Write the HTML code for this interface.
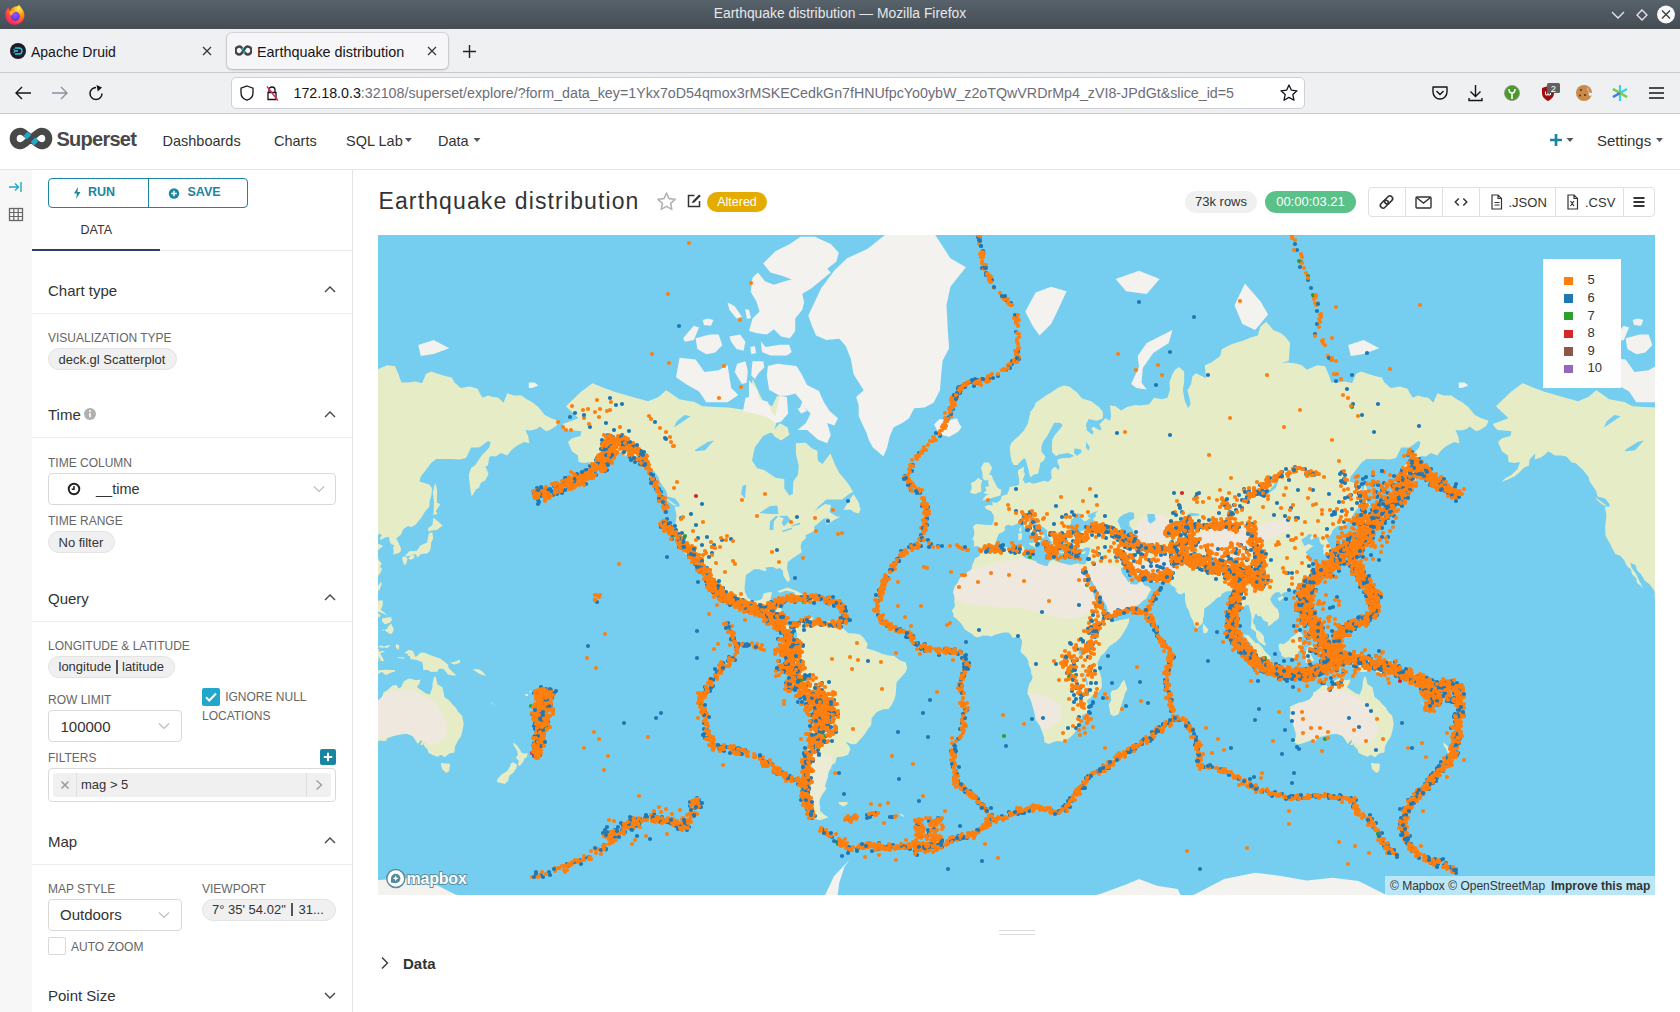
<!DOCTYPE html>
<html><head><meta charset="utf-8">
<style>
*{box-sizing:border-box;margin:0;padding:0}
html,body{width:1680px;height:1012px;overflow:hidden;background:#fff;font-family:"Liberation Sans",sans-serif;color:#333}
.a{position:absolute}
.t{position:absolute;line-height:1;white-space:nowrap}
svg{display:block}
</style></head><body>

<div class="a" style="left:0px;top:0px;width:1680px;height:29px;background:linear-gradient(#57626b,#454c54)"></div>
<div class="t" style="left:840.0px;width:0;top:6.9px;font-size:13.85px;color:#e6e8ea;"><span style="position:absolute;transform:translateX(-50%)">Earthquake distribution — Mozilla Firefox</span></div>
<svg class="a" style="left:3px;top:3px" width="23" height="23" viewBox="0 0 23 23"><defs><radialGradient id="ffg" cx="0.7" cy="0.2" r="0.95"><stop offset="0" stop-color="#fff44f"/><stop offset="0.35" stop-color="#ff980e"/><stop offset="0.75" stop-color="#ff3750"/><stop offset="1" stop-color="#e31587"/></radialGradient><radialGradient id="ffp" cx="0.5" cy="0.35" r="0.7"><stop offset="0" stop-color="#9059ff"/><stop offset="1" stop-color="#5b2cd6"/></radialGradient></defs><path d="M16 1.5c1.2 1.8 2.3 3 3.4 4.8A9.6 9.6 0 112.6 9.5C3.3 7 4.4 5.6 5.6 4.6c0 1.6.6 2.7 1.3 3.3C8.2 5.4 10.6 3.6 13.5 3.3 14.6 3.2 15.6 2.6 16 1.5z" fill="url(#ffg)"/><circle cx="12.3" cy="13.3" r="4.6" fill="url(#ffp)"/><path d="M6.5 9.5c1.5-1.5 4.5-2 6.2-.6-2.2.3-3.5 1.8-3.7 3.6-1.4-.5-2.3-1.6-2.5-3z" fill="#ffb03a"/></svg>
<svg class="a" style="left:1606px;top:4px" width="72" height="22" viewBox="0 0 72 22"><path d="M6 8l6 6 6-6" fill="none" stroke="#e8eaec" stroke-width="1.3"/><path d="M36 6l5 5-5 5-5-5z" fill="none" stroke="#e8eaec" stroke-width="1.3"/><circle cx="60" cy="10.5" r="9" fill="#fafafa"/><path d="M56 6.5l8 8M64 6.5l-8 8" stroke="#3a3f45" stroke-width="1.4"/></svg>
<div class="a" style="left:0px;top:29px;width:1680px;height:43px;background:#eff0f1"></div>
<div class="a" style="left:0px;top:72px;width:1680px;height:1px;background:#c9c9ce"></div>
<svg class="a" style="left:10px;top:43px" width="16" height="16" viewBox="0 0 16 16"><circle cx="8" cy="8" r="8" fill="#1c1c2a"/><path d="M5 5h4a3 3 0 010 6H5M4 8h4M3.5 6.5h1M3.5 9.5h1" fill="none" stroke="#2ccbe0" stroke-width="1.3"/></svg>
<div class="t" style="left:31.0px;top:45.1px;font-size:14px;color:#15141a;">Apache Druid</div>
<svg class="a" style="left:201px;top:45px" width="12" height="12" viewBox="0 0 12 12"><path d="M2 2l8 8M10 2l-8 8" stroke="#333" stroke-width="1.2"/></svg>
<div class="a" style="left:227px;top:33px;width:221px;height:36px;background:#f6f6f8;border-radius:5px;box-shadow:0 0 0 1px rgba(0,0,0,.09),0 1px 3px rgba(0,0,0,.18)"></div>
<svg class="a" style="left:235px;top:45px" width="17" height="11" viewBox="0 0 17 11"><path d="M4.5 1.5a4 4 0 100 8c2 0 3-2 4-4s2-4 4-4a4 4 0 110 8c-2 0-3-2-4-4s-2-4-4-4z" fill="none" stroke="#444" stroke-width="2.6"/><path d="M6.8 3.2l1.5 1.6M8.7 6.2l1.5 1.6" stroke="#20a7c9" stroke-width="2.2"/></svg>
<div class="t" style="left:257.0px;top:44.8px;font-size:14.4px;color:#15141a;">Earthquake distribution</div>
<svg class="a" style="left:426px;top:45px" width="12" height="12" viewBox="0 0 12 12"><path d="M2 2l8 8M10 2l-8 8" stroke="#333" stroke-width="1.2"/></svg>
<svg class="a" style="left:462px;top:44px" width="15" height="15" viewBox="0 0 15 15"><path d="M7.5 1v13M1 7.5h13" stroke="#222" stroke-width="1.4"/></svg>
<div class="a" style="left:0px;top:73px;width:1680px;height:40px;background:#eff0f1"></div>
<div class="a" style="left:0px;top:113px;width:1680px;height:1px;background:#c9c9ce"></div>
<svg class="a" style="left:14px;top:84px" width="100" height="18" viewBox="0 0 100 18"><path d="M2 9h15M8 3L2 9l6 6" fill="none" stroke="#15141a" stroke-width="1.4"/><path d="M38 9h15M47 3l6 6-6 6" fill="none" stroke="#8f8f9d" stroke-width="1.4"/><path d="M82 3.5a6 6 0 106 6" fill="none" stroke="#15141a" stroke-width="1.5"/><path d="M82.5 1l5.5 2.6-4.2 4z" fill="#15141a"/></svg>
<div class="a" style="left:231px;top:77px;width:1074px;height:32px;background:#fff;border:1px solid #cfcfd6;border-radius:5px"></div>
<svg class="a" style="left:239px;top:84px" width="50" height="18" viewBox="0 0 50 18"><path d="M8 2l6 2.2v4.5c0 3.8-2.8 6.5-6 7.5-3.2-1-6-3.7-6-7.5V4.2z" fill="none" stroke="#15141a" stroke-width="1.3"/><path d="M30 8.5V6a3 3 0 016 0v2.5M29 8.5h8v7h-8z" fill="none" stroke="#15141a" stroke-width="1.3"/><path d="M28 2.5l11 14" stroke="#e22850" stroke-width="1.4"/></svg>
<div class="t" style="left:293.5px;top:85.9px;font-size:14.26px;color:#15141a;">172.18.0.3<span style="color:#6d6d78">:32108/superset/explore/?form_data_key=1Ykx7oD54qmox3rMSKECedkGn7fHNUfpcYo0ybW_z2oTQwVRDrMp4_zVI8-JPdGt&amp;slice_id=5</span></div>
<svg class="a" style="left:1279px;top:83px" width="20" height="20" viewBox="0 0 20 20"><path d="M10 2l2.4 5.2 5.6.6-4.2 3.8 1.2 5.6L10 14.4l-5 2.8 1.2-5.6L2 7.8l5.6-.6z" fill="none" stroke="#15141a" stroke-width="1.3" stroke-linejoin="round"/></svg>
<svg class="a" style="left:1430px;top:83px" width="240" height="20" viewBox="0 0 240 20"><path d="M3 4h14v5a7 7 0 01-14 0z" fill="none" stroke="#15141a" stroke-width="1.4" stroke-linejoin="round"/><path d="M6.5 8l3.5 3.5L13.5 8" fill="none" stroke="#15141a" stroke-width="1.4"/><path d="M45.5 2v11M40.5 8.5l5 5 5-5M39 15v2.5h13V15" fill="none" stroke="#15141a" stroke-width="1.4"/><circle cx="82" cy="10" r="7.6" fill="#4a9a2a" stroke="#999" stroke-width="0.8"/><path d="M79 6c0 3 1.5 4 3 4s3-1 3-4M82 10v6" stroke="#fff" stroke-width="1.6" fill="none"/><path d="M112 5l6-2 6 2v5c0 4-3 6.5-6 8-3-1.5-6-4-6-8z" fill="#a00d10"/><path d="M115.5 8.5v2.5a1.3 1.3 0 002.5 0 1.3 1.3 0 002.5 0V8.5" fill="none" stroke="#fff" stroke-width="1.1"/><rect x="117" y="0" width="13" height="10" rx="1.5" fill="#616161"/><text x="123.5" y="8.6" font-size="9.5" fill="#fff" text-anchor="middle" font-family="Liberation Sans">2</text><circle cx="154" cy="10" r="8" fill="#c98a4b"/><circle cx="151" cy="7" r="1.1" fill="#5a3414"/><circle cx="155" cy="12" r="1.1" fill="#5a3414"/><circle cx="150" cy="12.5" r="1" fill="#5a3414"/><path d="M158 4a4 4 0 004 6l1 2-4 1z" fill="#eff0f1"/><path d="M190 2v16M183 6l14 8M183 14l14-8" stroke="#3ad0e8" stroke-width="2.2"/><path d="M183 6l14 8" stroke="#7cd13a" stroke-width="2.2"/><path d="M183 14l7-4" stroke="#5a6ef0" stroke-width="2.2"/><path d="M219 5h15M219 10h15M219 15h15" stroke="#15141a" stroke-width="1.5"/></svg>
<div class="a" style="left:0px;top:169px;width:1680px;height:1px;background:#e4e4e4"></div>
<svg class="a" style="left:9px;top:127px" width="44" height="23" viewBox="0 0 44 23"><path d="M11.5 4.2a7.3 7.3 0 100 14.6c3.2 0 5-2.6 10.5-7.3s7.3-7.3 10.5-7.3a7.3 7.3 0 110 14.6c-3.2 0-5-2.6-10.5-7.3S14.7 4.2 11.5 4.2z" fill="none" stroke="#484848" stroke-width="7"/><path d="M16.5 6.8l3.6 3.4M23.9 12.8l3.6 3.4" stroke="#20a7c9" stroke-width="6.2"/></svg>
<div class="t" style="left:56.5px;top:128.9px;font-size:20px;color:#484848;font-weight:bold;letter-spacing:-0.75px;">Superset</div>
<div class="t" style="left:162.5px;top:133.7px;font-size:14.5px;color:#333;">Dashboards</div>
<div class="t" style="left:274.0px;top:133.7px;font-size:14.5px;color:#333;">Charts</div>
<div class="t" style="left:346.0px;top:133.7px;font-size:14.5px;color:#333;">SQL Lab</div>
<div class="t" style="left:438.0px;top:133.7px;font-size:14.5px;color:#333;">Data</div>
<svg class="a" style="left:405px;top:138px" width="80" height="6" viewBox="0 0 80 6"><path d="M0 0h7L3.5 4z" fill="#555"/><path d="M68.5 0h7L72 4z" fill="#555"/></svg>
<svg class="a" style="left:1549px;top:133px" width="30" height="14" viewBox="0 0 30 14"><path d="M7 1v12M1 7h12" stroke="#1a85a0" stroke-width="2.6"/><path d="M17.5 5h7L21 9z" fill="#555"/></svg>
<div class="t" style="left:1597.0px;top:133.3px;font-size:15px;color:#333;">Settings</div>
<svg class="a" style="left:1656px;top:138px" width="8" height="6" viewBox="0 0 8 6"><path d="M0 0h7L3.5 4z" fill="#555"/></svg>
<div class="a" style="left:0px;top:170px;width:32px;height:842px;background:#f7f7f7"></div>
<svg class="a" style="left:8px;top:180px" width="16" height="44" viewBox="0 0 16 44"><path d="M1 7h9M7 3.5l3.5 3.5L7 10.5M13 2v10" fill="none" stroke="#20a7c9" stroke-width="1.4"/><rect x="1.5" y="28.5" width="13" height="12" fill="none" stroke="#666" stroke-width="1.3"/><path d="M1.5 32.5h13M1.5 36.5h13M5.8 28.5v12M10.2 28.5v12" stroke="#666" stroke-width="1.2"/></svg>
<div class="a" style="left:352px;top:170px;width:1px;height:842px;background:#e4e4e4"></div>
<div class="a" style="left:48px;top:178px;width:200px;height:30px;border:1px solid #1a85a0;border-radius:4px"></div>
<div class="a" style="left:148px;top:178px;width:1px;height:30px;background:#1a85a0"></div>
<svg class="a" style="left:72px;top:186px" width="110" height="14" viewBox="0 0 110 14"><path d="M6 1L2 7.5h3L4 13l4.5-7H5.5z" fill="#1a85a0"/><circle cx="102" cy="7.5" r="5.2" fill="#1a85a0"/><path d="M102 4.7v5.6M99.2 7.5h5.6" stroke="#fff" stroke-width="1.5"/></svg>
<div class="t" style="left:88.0px;top:186.4px;font-size:12.5px;color:#1a85a0;font-weight:bold;">RUN</div>
<div class="t" style="left:187.5px;top:186.4px;font-size:12.5px;color:#1a85a0;font-weight:bold;">SAVE</div>
<div class="t" style="left:80.5px;top:223.6px;font-size:12.5px;color:#333;font-weight:500;">DATA</div>
<div class="a" style="left:32px;top:250px;width:320px;height:1px;background:#eaeaea"></div>
<div class="a" style="left:32px;top:249px;width:128px;height:2px;background:#323c6b"></div>
<div class="t" style="left:48.0px;top:282.5px;font-size:15px;color:#333;">Chart type</div><svg class="a" style="left:323px;top:285.2px" width="14" height="9" viewBox="0 0 14 9"><path d="M2 7l5-5 5 5" fill="none" stroke="#444" stroke-width="1.4"/></svg>
<div class="a" style="left:32px;top:313px;width:320px;height:1px;background:#ececec"></div>
<div class="t" style="left:48.0px;top:331.7px;font-size:12px;color:#666;">VISUALIZATION TYPE</div>
<div class="a" style="left:48px;top:348px;width:129px;height:22px;background:#f0f0f0;border:1px solid #e3e3e3;border-radius:11px"></div><div class="t" style="left:58.5px;top:352.6px;font-size:13px;color:#333;">deck.gl Scatterplot</div>
<div class="t" style="left:48.0px;top:407.2px;font-size:15px;color:#333;">Time</div><svg class="a" style="left:323px;top:409.9px" width="14" height="9" viewBox="0 0 14 9"><path d="M2 7l5-5 5 5" fill="none" stroke="#444" stroke-width="1.4"/></svg>
<svg class="a" style="left:84px;top:408px" width="12" height="12" viewBox="0 0 12 12"><circle cx="6" cy="6" r="6" fill="#b0b0b0"/><path d="M6 5v4.2" stroke="#fff" stroke-width="1.6"/><circle cx="6" cy="3" r="1" fill="#fff"/></svg>
<div class="a" style="left:32px;top:437px;width:320px;height:1px;background:#ececec"></div>
<div class="t" style="left:48.0px;top:456.6px;font-size:12px;color:#666;">TIME COLUMN</div>
<div class="a" style="left:48px;top:473px;width:288px;height:32px;border:1px solid #d9d9d9;border-radius:4px;background:#fff"></div>
<svg class="a" style="left:67px;top:482px" width="14" height="14" viewBox="0 0 14 14"><circle cx="7" cy="7" r="5.3" fill="none" stroke="#222" stroke-width="1.9"/><path d="M7 4v3.3h-2.3" fill="none" stroke="#222" stroke-width="1.5"/></svg>
<div class="t" style="left:96.0px;top:482.2px;font-size:14.5px;color:#333;">__time</div>
<svg class="a" style="left:313px;top:485px" width="12" height="8" viewBox="0 0 12 8"><path d="M1 1.5l5 5 5-5" fill="none" stroke="#bbb" stroke-width="1.1"/></svg>
<div class="t" style="left:48.0px;top:514.8px;font-size:12px;color:#666;">TIME RANGE</div>
<div class="a" style="left:48px;top:531px;width:67px;height:22px;background:#f0f0f0;border:1px solid #e3e3e3;border-radius:11px"></div><div class="t" style="left:58.5px;top:535.6px;font-size:13px;color:#333;">No filter</div>
<div class="t" style="left:48.0px;top:590.6px;font-size:15px;color:#333;">Query</div><svg class="a" style="left:323px;top:593.3px" width="14" height="9" viewBox="0 0 14 9"><path d="M2 7l5-5 5 5" fill="none" stroke="#444" stroke-width="1.4"/></svg>
<div class="a" style="left:32px;top:621px;width:320px;height:1px;background:#ececec"></div>
<div class="t" style="left:48.0px;top:640.1px;font-size:12px;color:#666;">LONGITUDE &amp; LATITUDE</div>
<div class="a" style="left:48px;top:656px;width:127px;height:22px;background:#f0f0f0;border:1px solid #e3e3e3;border-radius:11px"></div>
<div class="t" style="left:58.5px;top:660.3px;font-size:13px;color:#333;">longitude</div>
<div class="a" style="left:116px;top:660px;width:2px;height:14px;background:#555"></div>
<div class="t" style="left:122.0px;top:660.3px;font-size:13px;color:#333;">latitude</div>
<div class="t" style="left:48.0px;top:693.6px;font-size:12px;color:#666;">ROW LIMIT</div>
<div class="a" style="left:48px;top:710px;width:134px;height:32px;border:1px solid #d9d9d9;border-radius:4px;background:#fff"></div>
<div class="t" style="left:60.5px;top:718.8px;font-size:15px;color:#333;">100000</div>
<svg class="a" style="left:158px;top:722px" width="12" height="8" viewBox="0 0 12 8"><path d="M1 1.5l5 5 5-5" fill="none" stroke="#bbb" stroke-width="1.1"/></svg>
<div class="a" style="left:202px;top:688px;width:18px;height:18px;background:#20a7c9;border-radius:2px"></div>
<svg class="a" style="left:202px;top:688px" width="18" height="18" viewBox="0 0 18 18"><path d="M4 9.2l3.3 3.3L14 5.5" fill="none" stroke="#fff" stroke-width="2"/></svg>
<div class="t" style="left:225.2px;top:690.8px;font-size:12px;color:#666;">IGNORE NULL</div>
<div class="t" style="left:202.0px;top:709.8px;font-size:12px;color:#666;">LOCATIONS</div>
<div class="t" style="left:48.0px;top:751.7px;font-size:12px;color:#666;">FILTERS</div>
<div class="a" style="left:320px;top:749px;width:16px;height:16px;background:#1a85a0;border-radius:2px"></div>
<svg class="a" style="left:320px;top:749px" width="16" height="16" viewBox="0 0 16 16"><path d="M8 3.8v8.4M3.8 8h8.4" stroke="#fff" stroke-width="2"/></svg>
<div class="a" style="left:48px;top:768px;width:288px;height:34px;border:1px solid #d9d9d9;border-radius:4px;background:#fff"></div>
<div class="a" style="left:53px;top:773px;width:278px;height:24px;background:#f0f0f0;border-radius:3px"></div>
<div class="a" style="left:76px;top:773px;width:1px;height:24px;background:#e0e0e0"></div>
<div class="a" style="left:306px;top:773px;width:1px;height:24px;background:#e0e0e0"></div>
<svg class="a" style="left:60px;top:780px" width="10" height="10" viewBox="0 0 10 10"><path d="M1.5 1.5l7 7M8.5 1.5l-7 7" stroke="#999" stroke-width="1.5"/></svg>
<div class="t" style="left:81.0px;top:778.0px;font-size:13px;color:#333;">mag &gt; 5</div>
<svg class="a" style="left:315px;top:779px" width="8" height="12" viewBox="0 0 8 12"><path d="M1.5 1.5l5 4.5-5 4.5" fill="none" stroke="#999" stroke-width="1.3"/></svg>
<div class="t" style="left:48.0px;top:833.7px;font-size:15px;color:#333;">Map</div><svg class="a" style="left:323px;top:836.4px" width="14" height="9" viewBox="0 0 14 9"><path d="M2 7l5-5 5 5" fill="none" stroke="#444" stroke-width="1.4"/></svg>
<div class="a" style="left:32px;top:864px;width:320px;height:1px;background:#ececec"></div>
<div class="t" style="left:48.0px;top:882.5px;font-size:12px;color:#666;">MAP STYLE</div>
<div class="t" style="left:202.0px;top:882.5px;font-size:12px;color:#666;">VIEWPORT</div>
<div class="a" style="left:48px;top:899px;width:134px;height:32px;border:1px solid #d9d9d9;border-radius:4px;background:#fff"></div>
<div class="t" style="left:60.0px;top:907.3px;font-size:15px;color:#333;">Outdoors</div>
<svg class="a" style="left:158px;top:911px" width="12" height="8" viewBox="0 0 12 8"><path d="M1 1.5l5 5 5-5" fill="none" stroke="#bbb" stroke-width="1.1"/></svg>
<div class="a" style="left:202px;top:899px;width:134px;height:22px;background:#f0f0f0;border:1px solid #e3e3e3;border-radius:11px"></div>
<div class="t" style="left:212.0px;top:903.3px;font-size:13px;color:#333;">7° 35' 54.02" <span style="display:inline-block;width:1.5px;height:13px;background:#555;vertical-align:-2px;margin:0 2px"></span> 31...</div>
<div class="a" style="left:48px;top:937px;width:18px;height:18px;border:1px solid #d9d9d9;border-radius:2px;background:#fff"></div>
<div class="t" style="left:71.0px;top:941.0px;font-size:12px;color:#666;">AUTO ZOOM</div>
<div class="t" style="left:48.0px;top:987.8px;font-size:15px;color:#333;">Point Size</div><svg class="a" style="left:323px;top:990.5px" width="14" height="9" viewBox="0 0 14 9"><path d="M2 2l5 5 5-5" fill="none" stroke="#444" stroke-width="1.4"/></svg>
<div class="t" style="left:378.5px;top:190.3px;font-size:23px;color:#333;letter-spacing:1.12px;">Earthquake distribution</div>
<svg class="a" style="left:656px;top:191px" width="21" height="21" viewBox="0 0 21 21"><path d="M10.5 2l2.6 5.6 6 .7-4.5 4.1 1.2 6-5.3-3-5.3 3 1.2-6-4.5-4.1 6-.7z" fill="none" stroke="#b3b3b3" stroke-width="1.6" stroke-linejoin="round"/></svg>
<svg class="a" style="left:686px;top:193px" width="16" height="16" viewBox="0 0 16 16"><path d="M8.5 2.5H2.5v11h11V8" fill="none" stroke="#333" stroke-width="1.5"/><path d="M13.2 1.5l1.6 1.6-6.5 6.5-2.3.7.7-2.3z" fill="#333"/></svg>
<div class="a" style="left:707px;top:192px;width:60px;height:20px;background:#e5ac00;border-radius:10px"></div>
<div class="t" style="left:737.0px;width:0;top:195.6px;font-size:12.5px;color:#fff;"><span style="position:absolute;transform:translateX(-50%)">Altered</span></div>
<div class="a" style="left:1185px;top:191px;width:72px;height:22px;background:#f0f0f0;border-radius:11px"></div>
<div class="t" style="left:1221.0px;width:0;top:195.3px;font-size:13px;color:#333;"><span style="position:absolute;transform:translateX(-50%)">73k rows</span></div>
<div class="a" style="left:1265px;top:191px;width:91px;height:22px;background:#5ac189;border-radius:11px"></div>
<div class="t" style="left:1310.5px;width:0;top:195.3px;font-size:13px;color:#fff;"><span style="position:absolute;transform:translateX(-50%)">00:00:03.21</span></div>
<div class="a" style="left:1368px;top:187px;width:287px;height:30px;border:1px solid #e0e0e0;border-radius:4px;background:#fff"></div>
<div class="a" style="left:1405px;top:187px;width:1px;height:30px;background:#e0e0e0"></div>
<div class="a" style="left:1442px;top:187px;width:1px;height:30px;background:#e0e0e0"></div>
<div class="a" style="left:1479px;top:187px;width:1px;height:30px;background:#e0e0e0"></div>
<div class="a" style="left:1555px;top:187px;width:1px;height:30px;background:#e0e0e0"></div>
<div class="a" style="left:1623px;top:187px;width:1px;height:30px;background:#e0e0e0"></div>
<svg class="a" style="left:1376px;top:192px" width="275" height="20" viewBox="0 0 275 20"><g transform="rotate(-45 10.5 10)" fill="none" stroke="#333" stroke-width="1.6"><rect x="3" y="7.3" width="9" height="5.4" rx="2.7"/><rect x="9" y="7.3" width="9" height="5.4" rx="2.7"/></g><rect x="40" y="5" width="15" height="11" rx="1" fill="none" stroke="#333" stroke-width="1.4"/><path d="M40.5 5.5l7 5.5 7-5.5" fill="none" stroke="#333" stroke-width="1.4"/><path d="M82.8 6.5l-3.5 3.5 3.5 3.5M87.3 6.5l3.5 3.5-3.5 3.5" fill="none" stroke="#333" stroke-width="1.5"/><path d="M116 3h6l3.5 3.5V17h-9.5z M122 3v3.5h3.5M118.5 10.5h5M118.5 13h5" fill="none" stroke="#333" stroke-width="1.2"/><path d="M192 3h6l3.5 3.5V17h-9.5z M198 3v3.5h3.5M194.5 9l3.5 5M198 9l-3.5 5" fill="none" stroke="#333" stroke-width="1.2"/><path d="M257.5 6h11M257.5 10h11M257.5 14h11" stroke="#333" stroke-width="1.8"/></svg>
<div class="t" style="left:1508.5px;top:196.0px;font-size:13px;color:#333;">.JSON</div>
<div class="t" style="left:1585.0px;top:196.0px;font-size:13px;color:#333;">.CSV</div>
<div class="a" style="left:378px;top:235px;width:1277px;height:660px;overflow:hidden"><svg width="1277" height="660" viewBox="0 0 1277 660" style="display:block"><rect width="1277" height="660" fill="#75cef0"/><path fill="#e6edc6" d="M184.9 189.0 200.4 183.3 188.0 171.3 203.0 156.8 214.6 148.2 226.2 152.9 236.5 156.8 254.6 162.0 270.1 166.3 280.5 162.0 288.2 155.2 296.0 160.5 301.1 164.2 316.6 167.1 324.4 171.3 337.3 172.0 350.2 172.6 365.7 174.7 370.9 170.6 374.7 144.1 380.7 157.5 385.1 166.3 394.1 171.3 399.3 160.5 407.0 163.5 408.8 178.0 399.3 185.2 395.4 197.4 391.5 198.0 385.1 200.9 376.8 212.6 374.0 225.5 379.1 233.3 386.4 235.2 398.0 243.0 406.3 243.9 406.3 253.5 411.2 260.5 414.8 258.9 415.3 246.5 420.0 239.8 420.7 230.4 417.9 218.9 417.9 208.2 427.7 207.7 434.2 213.6 439.3 215.8 439.8 225.5 444.5 228.9 449.7 222.0 452.5 218.4 457.4 230.4 461.3 238.0 466.5 243.9 471.1 250.0 475.0 256.8 470.8 259.3 463.9 264.6 448.4 264.6 440.6 271.3 435.5 277.4 438.0 275.1 447.1 268.9 453.0 270.1 451.5 277.0 458.7 281.4 462.6 281.4 454.8 285.8 448.9 289.4 447.1 285.1 452.2 282.9 445.8 283.6 440.6 287.9 436.2 291.5 436.7 295.6 432.9 297.7 427.7 300.1 427.7 303.4 423.8 306.7 422.5 311.6 423.8 317.3 418.7 320.4 414.3 323.5 409.6 327.1 409.1 333.7 411.4 341.8 411.9 345.3 409.6 347.0 407.6 344.1 405.2 340.4 405.0 336.0 401.9 333.1 398.5 334.0 395.4 331.9 391.5 331.9 387.7 332.5 388.4 336.0 385.1 335.7 381.2 334.3 376.0 334.3 372.2 336.9 367.8 340.1 367.3 346.1 366.5 353.1 367.0 357.3 369.6 362.8 374.7 366.3 381.2 365.2 384.3 363.6 385.3 358.7 390.2 357.3 394.1 357.3 392.8 362.8 392.1 366.3 391.0 371.6 395.4 372.7 401.9 373.0 403.7 374.8 403.2 381.4 402.6 385.4 405.7 389.0 409.6 390.8 413.5 389.0 418.7 391.6 418.9 393.4 416.9 394.7 413.5 392.6 411.2 395.0 408.3 393.7 403.4 392.4 397.2 388.0 397.2 384.8 392.8 380.4 387.7 378.8 382.5 377.5 378.6 373.5 374.7 371.6 369.6 373.0 364.4 371.4 360.5 370.0 351.5 366.0 346.3 361.4 346.8 357.3 345.0 353.7 341.2 348.9 336.8 345.8 333.4 339.8 329.0 335.2 327.5 330.1 322.3 327.7 323.6 333.1 327.5 338.1 330.8 344.7 333.4 349.8 335.0 353.4 332.1 350.3 329.0 348.1 328.2 343.3 323.9 338.9 323.1 334.6 319.2 331.6 317.4 327.7 316.4 325.6 312.7 321.0 307.3 319.1 304.2 313.5 302.4 309.3 299.1 303.4 297.5 300.4 297.2 291.5 298.5 280.0 296.7 271.7 301.1 272.0 301.6 269.3 297.2 263.4 289.5 261.4 288.2 256.0 281.7 246.5 280.5 242.1 275.3 235.2 267.5 228.0 263.7 227.5 258.5 221.5 253.3 220.4 246.9 220.4 240.4 216.3 236.5 219.9 232.7 222.5 226.7 224.5 227.5 217.3 231.4 214.2 226.2 219.4 221.6 224.5 221.0 230.4 215.9 232.8 210.7 238.0 206.8 241.2 200.4 244.3 193.1 247.0 197.8 243.0 203.0 240.3 209.4 234.2 212.0 227.0 206.3 228.0 200.6 227.0 199.9 220.4 193.9 216.3 192.1 212.0 190.0 207.1 193.9 203.2 202.4 200.9 203.5 196.2 196.5 195.6 189.5 195.0 186.2 191.4ZM1114.9 189.0 1130.4 183.3 1118.0 171.3 1133.0 156.8 1144.6 148.2 1156.2 152.9 1166.5 156.8 1184.6 162.0 1200.1 166.3 1210.5 162.0 1218.2 155.2 1226.0 160.5 1231.1 164.2 1246.6 167.1 1254.4 171.3 1267.3 172.0 1280.2 172.6 1295.7 174.7 1300.9 170.6 1304.7 144.1 1310.7 157.5 1315.1 166.3 1324.1 171.3 1329.3 160.5 1337.0 163.5 1338.8 178.0 1329.3 185.2 1325.4 197.4 1321.5 198.0 1315.1 200.9 1306.8 212.6 1304.0 225.5 1309.1 233.3 1316.4 235.2 1328.0 243.0 1336.3 243.9 1336.3 253.5 1341.2 260.5 1344.8 258.9 1345.3 246.5 1350.0 239.8 1350.7 230.4 1347.9 218.9 1347.9 208.2 1357.7 207.7 1364.2 213.6 1369.3 215.8 1369.8 225.5 1374.5 228.9 1379.7 222.0 1382.5 218.4 1387.4 230.4 1391.3 238.0 1396.5 243.9 1401.1 250.0 1405.0 256.8 1400.8 259.3 1393.9 264.6 1378.4 264.6 1370.6 271.3 1365.5 277.4 1368.0 275.1 1377.1 268.9 1383.0 270.1 1381.5 277.0 1388.7 281.4 1392.6 281.4 1384.8 285.8 1378.9 289.4 1377.1 285.1 1382.2 282.9 1375.8 283.6 1370.6 287.9 1366.2 291.5 1366.7 295.6 1362.9 297.7 1357.7 300.1 1357.7 303.4 1353.8 306.7 1352.5 311.6 1353.8 317.3 1348.7 320.4 1344.3 323.5 1339.6 327.1 1339.1 333.7 1341.4 341.8 1341.9 345.3 1339.6 347.0 1337.6 344.1 1335.2 340.4 1335.0 336.0 1331.9 333.1 1328.5 334.0 1325.4 331.9 1321.5 331.9 1317.7 332.5 1318.4 336.0 1315.1 335.7 1311.2 334.3 1306.0 334.3 1302.2 336.9 1297.8 340.1 1297.3 346.1 1296.5 353.1 1297.0 357.3 1299.6 362.8 1304.7 366.3 1311.2 365.2 1314.3 363.6 1315.3 358.7 1320.2 357.3 1324.1 357.3 1322.8 362.8 1322.1 366.3 1321.0 371.6 1325.4 372.7 1331.9 373.0 1333.7 374.8 1333.2 381.4 1332.6 385.4 1335.7 389.0 1339.6 390.8 1343.5 389.0 1348.7 391.6 1348.9 393.4 1346.9 394.7 1343.5 392.6 1341.2 395.0 1338.3 393.7 1333.4 392.4 1327.2 388.0 1327.2 384.8 1322.8 380.4 1317.7 378.8 1312.5 377.5 1308.6 373.5 1304.7 371.6 1299.6 373.0 1294.4 371.4 1290.5 370.0 1281.5 366.0 1276.3 361.4 1276.8 357.3 1275.0 353.7 1271.2 348.9 1266.8 345.8 1263.4 339.8 1259.0 335.2 1257.5 330.1 1252.3 327.7 1253.6 333.1 1257.5 338.1 1260.8 344.7 1263.4 349.8 1265.0 353.4 1262.1 350.3 1259.0 348.1 1258.2 343.3 1253.9 338.9 1253.1 334.6 1249.2 331.6 1247.4 327.7 1246.4 325.6 1242.7 321.0 1237.3 319.1 1234.2 313.5 1232.4 309.3 1229.1 303.4 1227.5 300.4 1227.2 291.5 1228.5 280.0 1226.7 271.7 1231.1 272.0 1231.6 269.3 1227.2 263.4 1219.5 261.4 1218.2 256.0 1211.7 246.5 1210.5 242.1 1205.3 235.2 1197.5 228.0 1193.7 227.5 1188.5 221.5 1183.3 220.4 1176.9 220.4 1170.4 216.3 1166.5 219.9 1162.7 222.5 1156.7 224.5 1157.5 217.3 1161.4 214.2 1156.2 219.4 1151.6 224.5 1151.0 230.4 1145.9 232.8 1140.7 238.0 1136.8 241.2 1130.4 244.3 1123.1 247.0 1127.8 243.0 1133.0 240.3 1139.4 234.2 1142.0 227.0 1136.3 228.0 1130.6 227.0 1129.9 220.4 1123.9 216.3 1122.1 212.0 1120.0 207.1 1123.9 203.2 1132.4 200.9 1133.5 196.2 1126.5 195.6 1119.5 195.0 1116.2 191.4ZM393.6 197.4 401.9 188.3 409.6 192.6 411.4 199.7 403.2 205.4 396.7 201.5ZM465.4 274.7 475.5 258.9 480.7 267.4 482.5 274.7 480.7 278.5 475.5 277.0 472.9 274.7ZM287.2 262.2 300.1 271.7 294.7 269.7 289.5 265.4ZM1217.2 262.2 1230.1 271.7 1224.7 269.7 1219.5 265.4ZM399.5 356.2 409.6 352.6 418.7 355.9 427.2 360.9 418.7 361.7 416.1 357.3 408.3 355.6 401.6 357.8ZM426.7 365.5 430.8 361.7 438.0 362.2 442.2 365.2 436.2 366.3 432.9 366.8 426.4 366.3ZM416.6 365.7 421.8 366.0 420.5 367.1 416.9 366.3ZM445.0 365.7 449.4 365.7 449.1 366.8 445.3 366.8ZM419.2 391.8 422.5 389.3 423.8 386.7 427.2 384.8 430.3 384.6 434.2 381.7 434.9 384.0 433.1 385.9 434.2 390.0 437.5 384.3 441.9 386.7 448.4 386.4 453.5 386.4 458.7 386.7 461.3 390.6 463.9 392.1 467.7 395.7 470.3 398.3 476.8 398.6 482.0 399.6 485.8 402.9 489.7 409.1 488.4 413.2 492.3 414.5 496.2 415.5 503.9 418.8 510.4 420.6 516.1 421.1 522.0 425.5 527.7 427.3 529.0 433.0 527.9 436.8 523.3 442.0 518.6 447.3 518.1 453.9 517.6 460.0 516.1 464.9 513.0 470.9 510.4 474.0 505.2 474.3 498.7 477.1 493.6 483.3 493.3 489.9 489.7 494.3 487.1 498.8 483.2 503.3 480.9 505.8 478.1 508.9 473.7 509.2 469.6 507.6 467.7 507.3 471.1 511.1 472.4 514.2 470.1 519.7 465.2 521.4 458.7 522.3 457.9 526.3 456.6 528.7 451.0 529.0 453.5 533.1 450.2 535.9 449.7 543.0 444.8 547.4 448.6 553.4 444.0 560.0 440.9 566.0 442.2 571.4 441.9 575.6 445.8 579.5 450.4 582.2 447.1 583.5 441.9 585.3 436.7 583.5 432.9 580.0 429.0 575.6 426.2 570.2 424.3 562.0 423.8 554.2 426.4 548.5 427.7 543.8 429.5 538.7 427.7 532.4 429.0 524.0 429.0 516.5 431.3 511.1 433.9 503.3 434.2 494.3 434.9 488.5 436.7 479.9 437.3 470.1 437.5 461.9 434.2 459.0 429.0 456.0 425.1 453.6 421.8 448.6 419.4 444.7 417.4 440.0 413.5 433.0 410.9 430.4 409.1 428.6 408.8 425.2 411.4 422.4 412.7 420.1 410.1 418.3 410.9 415.0 412.2 411.7 414.8 409.6 415.6 407.0 418.7 404.0 419.2 399.6 418.7 397.0 417.6 395.2ZM607.2 317.3 612.4 317.3 615.8 317.0 618.9 315.4 622.7 313.2 626.6 312.2 630.5 312.2 635.7 311.6 641.1 311.9 644.2 310.6 646.0 312.5 647.3 315.4 646.3 317.3 645.5 321.6 647.8 323.5 652.5 324.4 658.4 326.2 658.9 328.6 662.8 330.1 666.7 331.3 669.2 331.6 670.5 328.6 672.6 325.6 675.7 324.7 679.6 326.8 683.5 328.0 688.6 329.2 692.5 330.1 696.4 328.9 700.2 328.3 702.3 329.2 702.8 333.4 703.9 336.6 705.4 338.9 706.7 341.8 708.8 345.3 710.6 348.9 710.8 351.2 713.9 354.5 714.7 357.3 715.2 360.0 716.8 364.7 719.1 367.4 720.1 370.8 722.2 373.2 725.3 376.2 727.4 378.8 729.2 381.4 730.5 383.8 732.5 386.7 735.9 386.7 740.3 385.6 744.2 384.8 748.0 384.0 751.1 383.3 751.1 386.7 750.1 389.3 748.6 392.4 746.7 395.7 744.9 398.8 742.4 402.4 738.5 406.5 735.1 408.8 731.2 411.4 728.7 415.0 726.1 418.3 722.7 421.1 721.7 423.4 720.1 426.5 719.4 429.1 720.4 431.7 720.9 435.6 722.7 440.2 723.5 443.4 723.8 449.9 723.8 452.6 720.9 456.6 715.7 459.5 712.6 462.7 708.8 465.5 709.8 468.7 710.6 472.0 710.6 477.1 703.9 480.4 703.6 482.7 702.8 486.4 701.5 490.8 699.0 493.7 696.4 498.2 692.8 501.8 689.9 503.9 687.8 505.5 684.7 506.4 679.6 506.1 675.7 507.0 670.5 508.9 669.2 508.6 666.4 507.0 665.9 501.8 663.8 495.8 661.5 490.2 657.6 485.0 656.6 478.5 656.3 472.9 653.7 467.4 651.2 461.9 649.4 458.4 649.9 453.9 651.4 448.6 654.0 444.7 654.5 441.5 653.0 438.1 653.2 435.6 650.6 429.4 650.4 426.5 648.6 422.7 646.0 420.1 642.4 416.8 642.9 415.0 643.4 411.1 644.2 406.8 643.4 404.0 640.8 401.9 637.7 402.2 634.4 402.7 633.1 400.1 630.5 397.5 625.8 397.5 621.5 398.6 616.3 400.1 613.7 401.4 608.5 400.4 604.7 400.6 599.5 402.4 596.9 401.4 593.0 398.3 589.9 396.5 586.6 394.2 584.8 391.1 583.2 388.5 580.1 385.4 578.8 384.0 575.5 381.7 575.5 378.8 573.7 375.6 575.5 373.5 577.0 370.8 576.2 366.3 576.8 361.4 575.0 357.3 576.8 350.9 580.1 348.1 581.4 344.1 585.3 339.8 589.2 338.4 593.6 334.3 594.1 330.7 596.9 323.5 601.3 321.0 603.6 315.4ZM746.2 444.7 748.8 452.6 749.1 454.7 747.0 457.9 746.0 461.9 744.2 467.4 742.6 472.9 740.5 479.3 735.6 481.3 732.5 479.3 731.8 475.7 730.7 470.1 733.3 464.6 732.5 458.4 733.8 455.8 739.0 454.4 742.4 450.4 742.9 448.6 744.9 446.0ZM-325.6 314.8 -327.9 312.2 -330.5 310.9 -334.1 311.6 -333.9 306.0 -335.7 304.4 -334.1 301.1 -333.6 296.7 -334.4 293.2 -335.2 291.5 -331.8 289.0 -326.6 289.4 -321.5 290.1 -315.8 290.1 -314.2 285.8 -314.2 280.7 -316.8 276.2 -322.0 274.0 -323.3 271.3 -318.9 270.1 -315.3 270.5 -315.8 266.6 -314.2 267.8 -310.6 267.4 -307.0 264.6 -306.5 261.4 -303.4 260.1 -300.8 259.3 -299.0 255.1 -298.2 251.8 -293.6 251.3 -290.5 250.5 -288.9 249.2 -288.9 244.3 -290.2 237.5 -289.4 234.7 -284.0 231.8 -284.3 237.5 -283.0 238.0 -284.0 242.1 -285.3 244.3 -282.7 248.7 -278.8 247.0 -275.0 248.7 -269.8 247.4 -263.3 245.7 -260.0 247.0 -256.4 243.4 -256.9 236.1 -255.3 233.3 -252.7 231.8 -249.4 235.2 -248.4 231.3 -250.4 228.0 -250.7 224.5 -245.3 223.0 -238.8 223.0 -233.6 220.9 -236.2 219.4 -240.1 217.9 -249.1 219.4 -252.0 220.9 -255.8 217.3 -256.1 211.0 -255.6 204.3 -253.0 199.7 -247.8 193.8 -245.3 190.2 -247.8 187.7 -253.8 187.7 -256.9 193.8 -260.8 200.9 -265.1 207.1 -266.7 212.6 -266.4 216.8 -262.6 221.5 -264.1 225.5 -267.7 228.0 -268.5 232.8 -270.1 238.9 -273.7 239.3 -277.8 242.5 -278.6 238.9 -279.4 235.2 -280.9 229.4 -282.2 224.5 -283.7 223.0 -286.6 225.5 -290.5 229.9 -294.3 229.9 -296.4 226.0 -297.7 218.9 -298.2 212.6 -296.9 208.2 -293.0 204.3 -289.2 200.9 -284.0 195.6 -280.1 188.3 -277.5 176.7 -273.7 172.0 -272.4 167.8 -267.2 164.2 -262.0 160.5 -256.9 157.5 -250.4 152.9 -244.5 150.6 -238.8 151.4 -234.9 154.5 -231.0 157.5 -225.9 163.5 -216.8 166.3 -209.1 172.0 -205.2 176.7 -205.2 183.3 -207.8 184.6 -211.7 185.8 -219.4 183.9 -222.0 189.6 -221.2 195.6 -215.5 199.7 -214.3 196.8 -216.8 193.8 -215.0 191.4 -207.8 195.6 -206.5 193.8 -208.6 189.6 -202.6 183.3 -198.0 185.8 -196.9 181.3 -198.0 170.6 -192.3 171.3 -187.1 175.4 -180.7 172.0 -172.9 169.9 -169.0 170.6 -163.9 169.9 -158.7 169.2 -154.1 162.7 -145.8 164.2 -140.6 162.7 -138.0 154.5 -138.6 147.4 -135.5 139.1 -132.9 134.8 -129.0 132.1 -123.8 136.5 -123.8 146.6 -125.1 155.2 -123.1 166.3 -120.0 173.3 -117.4 169.2 -118.7 162.7 -120.5 155.2 -116.9 149.0 -115.6 141.6 -112.2 138.2 -107.0 140.8 -101.9 143.3 -103.2 130.3 -96.7 127.6 -87.7 121.0 -86.4 114.2 -76.0 109.1 -65.7 105.9 -58.0 102.7 -50.2 100.5 -47.6 91.5 -41.7 86.8 -34.7 94.9 -27.0 98.3 -21.8 102.7 -17.9 108.0 -19.2 125.7 -27.0 128.5 -20.5 127.6 -11.5 128.5 -6.3 130.3 -1.1 134.8 9.2 130.3 17.0 131.2 20.8 139.9 23.4 147.4 29.9 147.4 37.6 146.6 44.1 148.2 48.0 139.1 53.1 136.5 58.3 138.2 66.0 140.8 73.8 142.4 76.4 147.4 82.8 152.9 91.9 151.4 99.6 153.7 102.2 159.0 104.8 162.7 110.0 160.5 115.1 162.0 120.3 162.7 125.5 167.8 129.3 158.3 135.8 160.5 143.5 160.5 148.7 164.2 153.9 167.1 160.3 172.0 166.8 180.0 173.2 183.3 180.5 185.8 178.4 190.8 172.0 195.0 168.1 196.2 161.6 191.4 159.0 193.8 155.2 195.0 151.3 195.6 147.4 195.0 150.3 201.5 151.3 208.2 146.1 207.1 138.4 211.0 133.2 215.2 129.3 220.4 122.9 217.9 117.7 221.5 112.5 220.9 111.0 223.0 110.0 230.4 107.4 231.3 110.5 238.9 107.4 245.2 102.7 247.9 100.9 253.0 98.3 253.9 93.7 261.4 92.4 255.1 91.4 246.5 90.8 239.8 93.2 232.8 97.0 230.4 100.9 224.5 104.8 218.9 106.9 217.3 111.2 212.6 112.5 207.1 110.0 206.0 103.5 211.0 100.9 212.6 93.2 212.6 88.0 223.0 81.5 224.5 73.8 224.0 66.0 224.0 58.3 224.0 53.1 228.0 49.2 233.3 42.8 241.6 41.5 246.5 46.7 247.9 51.3 249.6 53.9 253.0 53.6 259.3 51.8 265.4 51.3 271.7 46.7 277.0 44.1 281.4 37.6 289.7 33.2 292.2 29.9 290.8 26.8 293.2 24.7 295.0 23.4 299.1 19.5 302.4 18.2 303.4 20.8 308.3 22.9 313.2 22.9 316.3 20.8 317.9 17.0 319.1 15.1 319.5 15.7 316.3 15.1 313.2 16.2 310.0 13.1 309.3 11.8 306.7 11.0 301.7 6.6 302.7 2.7 305.1 2.0 303.1 4.0 300.1 1.5 298.7 -2.4 302.1 -6.8 304.7 -5.0 308.3 -3.7 310.9 0.9 309.0 5.3 310.9 1.5 313.8 -2.4 317.3 -0.4 320.1 0.9 325.3 3.8 328.6 2.0 331.6 4.0 333.7 2.7 337.5 0.4 340.4 -1.9 344.7 -5.0 348.7 -8.9 351.7 -12.8 353.7 -16.6 355.1 -19.2 355.9 -23.1 357.3 -25.7 358.1 -26.4 360.6 -28.3 357.3 -32.1 357.3 -35.5 360.0 -37.8 364.1 -36.0 368.2 -33.4 371.4 -30.1 374.3 -29.0 378.8 -29.0 382.7 -30.8 384.8 -33.9 386.7 -36.0 389.0 -39.9 391.3 -40.1 387.2 -41.7 386.7 -45.0 384.8 -46.1 382.2 -48.1 380.9 -50.5 380.9 -51.5 378.8 -52.8 379.3 -54.9 385.4 -54.9 388.0 -53.1 390.0 -51.8 394.4 -48.9 396.2 -47.1 397.8 -44.0 401.6 -43.8 406.5 -41.9 410.1 -43.8 410.4 -46.3 408.6 -49.4 406.5 -51.5 402.2 -52.0 399.6 -52.0 397.0 -53.8 395.7 -57.2 393.1 -56.7 389.3 -56.4 384.0 -56.7 380.1 -58.5 373.5 -59.3 370.0 -63.1 370.6 -64.9 372.7 -67.0 371.9 -67.5 368.2 -67.8 364.7 -69.6 362.8 -72.7 359.5 -73.7 354.8 -75.3 354.5 -77.3 355.9 -79.9 356.2 -82.5 356.7 -86.4 359.2 -86.9 361.4 -90.8 362.8 -94.1 366.0 -98.0 369.5 -100.6 371.4 -103.7 373.5 -103.9 379.6 -105.0 384.0 -105.0 387.2 -107.0 389.8 -108.9 391.1 -110.9 393.1 -113.2 390.8 -114.5 387.2 -116.1 383.5 -117.9 380.6 -118.9 376.2 -121.3 372.2 -122.5 367.4 -123.1 364.1 -122.8 360.0 -123.6 357.3 -126.4 359.2 -129.5 358.9 -132.9 355.1 -130.3 354.5 -132.4 353.4 -134.2 351.2 -136.8 350.6 -138.0 348.1 -139.3 346.4 -144.5 347.0 -152.3 347.0 -157.4 346.4 -163.1 345.3 -164.1 342.1 -165.7 341.3 -170.1 343.0 -172.9 342.4 -176.8 339.8 -178.6 338.4 -180.2 335.7 -182.0 332.5 -184.5 332.2 -187.1 333.1 -186.6 336.0 -185.6 338.9 -183.3 341.8 -181.4 343.8 -179.9 348.1 -177.8 345.3 -177.8 348.9 -175.5 349.8 -171.6 349.8 -168.0 347.0 -165.7 343.8 -165.4 347.8 -163.4 350.6 -159.5 351.5 -157.4 353.7 -156.6 354.5 -160.0 360.0 -161.8 364.1 -164.7 365.5 -168.3 368.2 -170.3 369.8 -176.3 373.2 -182.0 374.8 -185.8 377.5 -191.0 379.1 -194.9 380.6 -199.0 380.9 -200.3 376.2 -200.8 373.5 -201.3 370.0 -204.4 365.5 -206.5 361.4 -209.9 357.8 -210.4 355.1 -211.7 351.2 -214.3 348.4 -215.5 346.1 -217.6 343.3 -219.7 338.9 -221.2 338.4 -221.7 334.6 -222.8 338.4 -225.4 337.2 -226.9 333.4 -227.7 329.2 -222.8 329.2 -221.7 327.1 -220.7 324.1 -219.4 319.5 -218.4 316.3 -217.6 312.8 -219.4 312.8 -222.0 312.2 -224.6 314.1 -227.2 314.4 -230.5 312.2 -232.1 312.5 -234.9 313.8 -238.8 312.5 -240.3 310.3 -240.9 307.4 -243.2 307.4 -241.9 304.1 -243.4 302.4 -242.4 300.1 -240.1 299.1 -236.2 298.4 -238.8 296.7 -238.8 293.2 -239.3 290.8 -237.2 288.7 -236.7 284.7 -234.7 283.3 -231.8 278.9 -229.0 278.5 -225.4 280.0 -227.2 282.5 -224.6 285.8 -222.0 286.2 -219.4 284.0 -216.8 283.3 -219.4 282.2 -220.7 280.0 -216.8 278.5 -212.2 276.6 -209.9 276.2 -213.0 278.9 -211.7 280.7 -214.3 283.3 -215.5 284.7 -213.0 286.2 -209.1 289.4 -206.5 291.5 -203.9 294.3 -203.4 296.7 -206.5 298.4 -209.1 298.4 -213.0 298.4 -216.8 297.4 -219.4 295.6 -222.0 295.3 -225.9 295.6 -229.8 298.0 -236.0 297.7 -237.5 298.0 -241.4 300.1 -243.4 300.1 -244.0 299.1 -246.5 298.7 -249.1 299.4 -250.9 300.7 -252.7 301.7 -251.2 304.4 -252.2 306.0 -249.1 307.7 -251.7 309.0 -251.2 310.6 -253.0 313.2 -255.1 311.9 -256.4 309.0 -255.3 307.4 -257.7 305.4 -258.9 303.4 -261.0 300.1 -260.8 295.6 -263.3 293.2 -265.9 291.5 -269.8 289.7 -271.9 287.2 -273.7 283.6 -275.7 282.2 -279.4 283.3 -278.8 287.6 -276.0 289.7 -274.4 293.6 -270.3 295.3 -267.2 298.0 -263.3 301.1 -263.9 302.4 -267.2 304.1 -267.2 305.4 -268.5 307.0 -269.8 308.3 -270.6 307.4 -269.3 304.1 -270.6 301.7 -272.4 300.7 -274.4 299.1 -277.5 297.4 -279.4 296.0 -282.7 293.2 -284.0 291.8 -285.0 287.9 -287.9 286.5 -289.9 288.3 -293.0 289.4 -295.6 291.1 -299.5 289.7 -302.1 290.4 -303.4 292.5 -302.9 295.3 -306.0 297.4 -308.5 298.4 -309.8 300.1 -311.1 303.4 -311.9 305.7 -312.4 307.4 -313.2 309.6 -316.3 312.2 -320.2 312.5 -322.8 312.5ZM604.4 314.8 602.1 312.2 599.5 310.9 595.9 311.6 596.1 306.0 594.3 304.4 595.9 301.1 596.4 296.7 595.6 293.2 594.8 291.5 598.2 289.0 603.4 289.4 608.5 290.1 614.2 290.1 615.8 285.8 615.8 280.7 613.2 276.2 608.0 274.0 606.7 271.3 611.1 270.1 614.7 270.5 614.2 266.6 615.8 267.8 619.4 267.4 623.0 264.6 623.5 261.4 626.6 260.1 629.2 259.3 631.0 255.1 631.8 251.8 636.4 251.3 639.5 250.5 641.1 249.2 641.1 244.3 639.8 237.5 640.6 234.7 646.0 231.8 645.7 237.5 647.0 238.0 646.0 242.1 644.7 244.3 647.3 248.7 651.2 247.0 655.0 248.7 660.2 247.4 666.7 245.7 670.0 247.0 673.6 243.4 673.1 236.1 674.7 233.3 677.3 231.8 680.6 235.2 681.6 231.3 679.6 228.0 679.3 224.5 684.7 223.0 691.2 223.0 696.4 220.9 693.8 219.4 689.9 217.9 680.9 219.4 678.0 220.9 674.2 217.3 673.9 211.0 674.4 204.3 677.0 199.7 682.2 193.8 684.7 190.2 682.2 187.7 676.2 187.7 673.1 193.8 669.2 200.9 664.9 207.1 663.3 212.6 663.6 216.8 667.4 221.5 665.9 225.5 662.3 228.0 661.5 232.8 659.9 238.9 656.3 239.3 652.2 242.5 651.4 238.9 650.6 235.2 649.1 229.4 647.8 224.5 646.3 223.0 643.4 225.5 639.5 229.9 635.7 229.9 633.6 226.0 632.3 218.9 631.8 212.6 633.1 208.2 637.0 204.3 640.8 200.9 646.0 195.6 649.9 188.3 652.5 176.7 656.3 172.0 657.6 167.8 662.8 164.2 668.0 160.5 673.1 157.5 679.6 152.9 685.5 150.6 691.2 151.4 695.1 154.5 699.0 157.5 704.1 163.5 713.2 166.3 720.9 172.0 724.8 176.7 724.8 183.3 722.2 184.6 718.3 185.8 710.6 183.9 708.0 189.6 708.8 195.6 714.5 199.7 715.7 196.8 713.2 193.8 715.0 191.4 722.2 195.6 723.5 193.8 721.4 189.6 727.4 183.3 732.0 185.8 733.1 181.3 732.0 170.6 737.7 171.3 742.9 175.4 749.3 172.0 757.1 169.9 761.0 170.6 766.1 169.9 771.3 169.2 775.9 162.7 784.2 164.2 789.4 162.7 792.0 154.5 791.4 147.4 794.5 139.1 797.1 134.8 801.0 132.1 806.2 136.5 806.2 146.6 804.9 155.2 806.9 166.3 810.0 173.3 812.6 169.2 811.3 162.7 809.5 155.2 813.1 149.0 814.4 141.6 817.8 138.2 823.0 140.8 828.1 143.3 826.8 130.3 833.3 127.6 842.3 121.0 843.6 114.2 854.0 109.1 864.3 105.9 872.0 102.7 879.8 100.5 882.4 91.5 888.3 86.8 895.3 94.9 903.0 98.3 908.2 102.7 912.1 108.0 910.8 125.7 903.0 128.5 909.5 127.6 918.5 128.5 923.7 130.3 928.9 134.8 939.2 130.3 947.0 131.2 950.8 139.9 953.4 147.4 959.9 147.4 967.6 146.6 974.1 148.2 978.0 139.1 983.1 136.5 988.3 138.2 996.0 140.8 1003.8 142.4 1006.4 147.4 1012.8 152.9 1021.9 151.4 1029.6 153.7 1032.2 159.0 1034.8 162.7 1040.0 160.5 1045.1 162.0 1050.3 162.7 1055.5 167.8 1059.3 158.3 1065.8 160.5 1073.5 160.5 1078.7 164.2 1083.9 167.1 1090.3 172.0 1096.8 180.0 1103.2 183.3 1110.5 185.8 1108.4 190.8 1102.0 195.0 1098.1 196.2 1091.6 191.4 1089.0 193.8 1085.2 195.0 1081.3 195.6 1077.4 195.0 1080.3 201.5 1081.3 208.2 1076.1 207.1 1068.4 211.0 1063.2 215.2 1059.3 220.4 1052.9 217.9 1047.7 221.5 1042.5 220.9 1041.0 223.0 1040.0 230.4 1037.4 231.3 1040.5 238.9 1037.4 245.2 1032.7 247.9 1030.9 253.0 1028.3 253.9 1023.7 261.4 1022.4 255.1 1021.4 246.5 1020.8 239.8 1023.2 232.8 1027.0 230.4 1030.9 224.5 1034.8 218.9 1036.9 217.3 1041.2 212.6 1042.5 207.1 1040.0 206.0 1033.5 211.0 1030.9 212.6 1023.2 212.6 1018.0 223.0 1011.5 224.5 1003.8 224.0 996.0 224.0 988.3 224.0 983.1 228.0 979.2 233.3 972.8 241.6 971.5 246.5 976.7 247.9 981.3 249.6 983.9 253.0 983.6 259.3 981.8 265.4 981.3 271.7 976.7 277.0 974.1 281.4 967.6 289.7 963.2 292.2 959.9 290.8 956.8 293.2 954.7 295.0 953.4 299.1 949.5 302.4 948.2 303.4 950.8 308.3 952.9 313.2 952.9 316.3 950.8 317.9 947.0 319.1 945.1 319.5 945.7 316.3 945.1 313.2 946.2 310.0 943.1 309.3 941.8 306.7 941.0 301.7 936.6 302.7 932.7 305.1 932.0 303.1 934.0 300.1 931.5 298.7 927.6 302.1 923.2 304.7 925.0 308.3 926.3 310.9 930.9 309.0 935.3 310.9 931.5 313.8 927.6 317.3 929.6 320.1 930.9 325.3 933.8 328.6 932.0 331.6 934.0 333.7 932.7 337.5 930.4 340.4 928.1 344.7 925.0 348.7 921.1 351.7 917.2 353.7 913.4 355.1 910.8 355.9 906.9 357.3 904.3 358.1 903.6 360.6 901.7 357.3 897.9 357.3 894.5 360.0 892.2 364.1 894.0 368.2 896.6 371.4 899.9 374.3 901.0 378.8 901.0 382.7 899.2 384.8 896.1 386.7 894.0 389.0 890.1 391.3 889.9 387.2 888.3 386.7 885.0 384.8 883.9 382.2 881.9 380.9 879.5 380.9 878.5 378.8 877.2 379.3 875.1 385.4 875.1 388.0 876.9 390.0 878.2 394.4 881.1 396.2 882.9 397.8 886.0 401.6 886.2 406.5 888.1 410.1 886.2 410.4 883.7 408.6 880.6 406.5 878.5 402.2 878.0 399.6 878.0 397.0 876.2 395.7 872.8 393.1 873.3 389.3 873.6 384.0 873.3 380.1 871.5 373.5 870.7 370.0 866.9 370.6 865.1 372.7 863.0 371.9 862.5 368.2 862.2 364.7 860.4 362.8 857.3 359.5 856.3 354.8 854.7 354.5 852.7 355.9 850.1 356.2 847.5 356.7 843.6 359.2 843.1 361.4 839.2 362.8 835.9 366.0 832.0 369.5 829.4 371.4 826.3 373.5 826.1 379.6 825.0 384.0 825.0 387.2 823.0 389.8 821.1 391.1 819.1 393.1 816.8 390.8 815.5 387.2 813.9 383.5 812.1 380.6 811.1 376.2 808.7 372.2 807.5 367.4 806.9 364.1 807.2 360.0 806.4 357.3 803.6 359.2 800.5 358.9 797.1 355.1 799.7 354.5 797.6 353.4 795.8 351.2 793.2 350.6 792.0 348.1 790.7 346.4 785.5 347.0 777.7 347.0 772.6 346.4 766.9 345.3 765.9 342.1 764.3 341.3 759.9 343.0 757.1 342.4 753.2 339.8 751.4 338.4 749.8 335.7 748.0 332.5 745.5 332.2 742.9 333.1 743.4 336.0 744.4 338.9 746.7 341.8 748.6 343.8 750.1 348.1 752.2 345.3 752.2 348.9 754.5 349.8 758.4 349.8 762.0 347.0 764.3 343.8 764.6 347.8 766.6 350.6 770.5 351.5 772.6 353.7 773.4 354.5 770.0 360.0 768.2 364.1 765.3 365.5 761.7 368.2 759.7 369.8 753.7 373.2 748.0 374.8 744.2 377.5 739.0 379.1 735.1 380.6 731.0 380.9 729.7 376.2 729.2 373.5 728.7 370.0 725.6 365.5 723.5 361.4 720.1 357.8 719.6 355.1 718.3 351.2 715.7 348.4 714.5 346.1 712.4 343.3 710.3 338.9 708.8 338.4 708.3 334.6 707.2 338.4 704.6 337.2 703.1 333.4 702.3 329.2 707.2 329.2 708.3 327.1 709.3 324.1 710.6 319.5 711.6 316.3 712.4 312.8 710.6 312.8 708.0 312.2 705.4 314.1 702.8 314.4 699.5 312.2 697.9 312.5 695.1 313.8 691.2 312.5 689.7 310.3 689.1 307.4 686.8 307.4 688.1 304.1 686.6 302.4 687.6 300.1 689.9 299.1 693.8 298.4 691.2 296.7 691.2 293.2 690.7 290.8 692.8 288.7 693.3 284.7 695.3 283.3 698.2 278.9 701.0 278.5 704.6 280.0 702.8 282.5 705.4 285.8 708.0 286.2 710.6 284.0 713.2 283.3 710.6 282.2 709.3 280.0 713.2 278.5 717.8 276.6 720.1 276.2 717.0 278.9 718.3 280.7 715.7 283.3 714.5 284.7 717.0 286.2 720.9 289.4 723.5 291.5 726.1 294.3 726.6 296.7 723.5 298.4 720.9 298.4 717.0 298.4 713.2 297.4 710.6 295.6 708.0 295.3 704.1 295.6 700.2 298.0 694.0 297.7 692.5 298.0 688.6 300.1 686.6 300.1 686.0 299.1 683.5 298.7 680.9 299.4 679.1 300.7 677.3 301.7 678.8 304.4 677.8 306.0 680.9 307.7 678.3 309.0 678.8 310.6 677.0 313.2 674.9 311.9 673.6 309.0 674.7 307.4 672.3 305.4 671.1 303.4 669.0 300.1 669.2 295.6 666.7 293.2 664.1 291.5 660.2 289.7 658.1 287.2 656.3 283.6 654.3 282.2 650.6 283.3 651.2 287.6 654.0 289.7 655.6 293.6 659.7 295.3 662.8 298.0 666.7 301.1 666.1 302.4 662.8 304.1 662.8 305.4 661.5 307.0 660.2 308.3 659.4 307.4 660.7 304.1 659.4 301.7 657.6 300.7 655.6 299.1 652.5 297.4 650.6 296.0 647.3 293.2 646.0 291.8 645.0 287.9 642.1 286.5 640.1 288.3 637.0 289.4 634.4 291.1 630.5 289.7 627.9 290.4 626.6 292.5 627.1 295.3 624.0 297.4 621.5 298.4 620.2 300.1 618.9 303.4 618.1 305.7 617.6 307.4 616.8 309.6 613.7 312.2 609.8 312.5 607.2 312.5ZM607.8 260.5 610.9 259.7 605.4 258.1 608.5 255.6 607.2 251.8 611.1 251.3 610.1 247.4 610.6 245.2 606.2 245.2 604.7 243.0 604.4 237.5 602.9 232.8 606.0 227.5 610.6 227.5 614.2 232.8 611.1 239.8 613.7 240.3 615.0 244.3 618.1 250.0 619.6 253.0 623.3 254.7 622.5 260.5 616.3 262.2 609.8 264.2 604.1 265.4ZM596.9 258.9 592.0 257.7 593.8 253.0 593.0 247.9 597.2 246.1 600.0 243.0 604.4 245.7 602.9 249.6 603.4 256.4ZM650.9 308.0 659.2 307.4 657.9 312.5 651.2 309.6ZM640.1 298.4 644.2 298.0 643.7 304.4 640.6 305.4ZM641.1 293.9 643.2 291.5 643.4 297.0 641.6 296.7ZM679.6 316.3 686.8 317.0 686.0 317.9 680.9 317.6ZM702.3 317.9 708.3 315.7 706.4 319.1 702.8 318.8ZM825.0 388.5 830.4 394.4 828.9 397.8 825.5 398.3 824.8 393.1ZM2.7 346.7 3.8 348.9 0.9 356.2 -0.9 352.6ZM932.7 346.7 933.8 348.9 930.9 356.2 929.1 352.6ZM899.4 363.3 904.3 361.1 905.6 362.5 901.7 366.3ZM50.0 293.2 54.4 290.1 55.4 282.5 60.9 287.2 64.7 290.4 58.8 295.0 53.6 295.6 50.5 296.7ZM980.0 293.2 984.4 290.1 985.4 282.5 990.9 287.2 994.7 290.4 988.8 295.0 983.6 295.6 980.5 296.7ZM27.0 321.0 31.2 316.3 38.9 315.7 42.3 310.6 49.2 307.4 50.5 299.7 51.8 297.7 54.4 297.4 55.2 303.4 53.1 307.4 52.9 311.6 52.1 315.4 50.0 317.9 47.4 318.8 42.8 319.1 39.7 322.5 37.6 319.1 33.7 320.1 29.9 321.3ZM957.0 321.0 961.2 316.3 968.9 315.7 972.3 310.6 979.2 307.4 980.5 299.7 981.8 297.7 984.4 297.4 985.2 303.4 983.1 307.4 982.9 311.6 982.1 315.4 980.0 317.9 977.4 318.8 972.8 319.1 969.7 322.5 967.6 319.1 963.7 320.1 959.9 321.3ZM23.9 322.5 27.3 321.3 29.6 324.1 28.1 328.9 26.0 330.1 24.7 325.6ZM953.9 322.5 957.3 321.3 959.6 324.1 958.1 328.9 956.0 330.1 954.7 325.6ZM30.4 323.5 33.2 320.1 36.6 320.4 35.8 323.5 32.5 324.7ZM960.4 323.5 963.2 320.1 966.6 320.4 965.8 323.5 962.5 324.7ZM55.4 280.3 56.0 267.4 54.9 257.2 57.3 247.4 59.1 255.1 58.8 267.4 62.2 269.3 57.8 276.2 59.6 278.9 57.0 279.6ZM985.4 280.3 986.0 267.4 984.9 257.2 987.3 247.4 989.1 255.1 988.8 267.4 992.2 269.3 987.8 276.2 989.6 278.9 987.0 279.6ZM0.4 365.5 4.8 365.5 4.6 370.8 2.7 374.8 6.1 377.5 9.2 380.6 7.9 380.1 3.5 377.7 0.4 377.0 -1.1 372.2ZM930.4 365.5 934.8 365.5 934.6 370.8 932.7 374.8 936.1 377.5 939.2 380.6 937.9 380.1 933.5 377.7 930.4 377.0 928.9 372.2ZM4.0 383.5 13.1 382.0 13.9 385.4 11.3 388.0 6.6 389.3 4.0 385.9ZM934.0 383.5 943.1 382.0 943.9 385.4 941.3 388.0 936.6 389.3 934.0 385.9ZM3.8 396.0 9.2 393.7 10.2 391.6 13.1 388.5 15.9 394.4 14.6 397.5 12.8 399.3 9.2 397.3 5.3 394.2ZM933.8 396.0 939.2 393.7 940.2 391.6 943.1 388.5 945.9 394.4 944.6 397.5 942.8 399.3 939.2 397.3 935.3 394.2ZM-0.4 378.8 2.7 379.6 1.5 382.2 -0.1 381.4ZM929.6 378.8 932.7 379.6 931.5 382.2 929.9 381.4ZM-8.4 392.4 -1.9 384.6 -2.2 387.2 -6.8 391.8ZM921.6 392.4 928.1 384.6 927.8 387.2 923.2 391.8ZM900.5 409.9 902.0 408.6 905.6 409.3 910.8 405.5 913.4 401.9 917.0 400.1 920.6 396.0 923.2 398.3 925.0 400.9 922.7 402.9 923.7 407.3 923.4 411.1 922.4 413.7 919.8 417.5 919.8 421.4 918.5 424.0 914.7 422.7 910.8 421.9 907.7 422.7 903.6 420.9 903.0 417.5 901.2 415.2ZM865.1 399.3 870.7 400.4 872.8 402.9 877.7 408.1 880.6 408.3 884.4 412.4 886.8 416.3 888.8 418.3 892.7 421.9 892.4 425.8 891.4 428.6 889.1 428.8 883.1 424.0 879.8 420.4 878.0 416.3 875.1 412.9 873.3 409.3 870.2 406.0 867.4 402.2ZM890.6 431.2 892.7 429.1 898.6 429.9 904.6 431.4 910.0 431.4 914.9 433.7 914.4 435.8 905.6 434.8 897.9 433.7 893.7 432.4ZM-14.0 434.8 -11.5 434.8 -6.3 435.0 -3.7 435.6 1.5 435.3 7.9 434.8 11.8 435.0 17.0 435.0 17.0 436.6 11.8 438.1 9.2 439.7 6.6 439.4 4.0 436.8 -1.1 439.4 -5.0 436.8 -11.5 436.6 -15.3 436.3ZM916.0 434.8 918.5 434.8 923.7 435.0 926.3 435.6 931.5 435.3 937.9 434.8 941.8 435.0 947.0 435.0 947.0 436.6 941.8 438.1 939.2 439.7 936.6 439.4 934.0 436.8 928.9 439.4 925.0 436.8 918.5 436.6 914.7 436.3ZM-2.4 422.7 -3.5 420.1 -1.6 415.7 -1.1 411.9 2.7 412.4 9.7 412.7 12.3 409.9 10.5 410.1 6.4 411.4 2.2 410.6 -0.4 412.7 1.5 417.0 3.5 416.0 7.4 416.3 2.2 418.6 4.6 422.7 6.1 426.0 2.7 426.0 0.9 420.9 -0.1 428.1 -2.4 427.8ZM927.6 422.7 926.5 420.1 928.4 415.7 928.9 411.9 932.7 412.4 939.7 412.7 942.3 409.9 940.5 410.1 936.4 411.4 932.2 410.6 929.6 412.7 931.5 417.0 933.5 416.0 937.4 416.3 932.2 418.6 934.6 422.7 936.1 426.0 932.7 426.0 930.9 420.9 929.9 428.1 927.6 427.8ZM18.2 409.1 21.3 410.6 20.8 415.2 19.0 412.9 18.2 414.2 17.7 411.1ZM948.2 409.1 951.3 410.6 950.8 415.2 949.0 412.9 948.2 414.2 947.7 411.1ZM19.3 421.9 26.8 422.4 26.0 423.7 20.1 422.9ZM949.3 421.9 956.8 422.4 956.0 423.7 950.1 422.9ZM27.3 417.0 31.2 414.7 35.0 416.0 37.6 422.2 42.8 417.5 46.7 417.8 53.1 420.4 62.2 423.4 65.5 426.0 69.9 429.6 70.7 433.0 75.1 437.4 78.4 440.2 75.1 440.5 69.9 439.4 66.0 434.3 61.4 433.5 59.1 436.8 53.1 437.1 49.2 434.8 45.4 435.3 44.6 427.6 38.9 425.0 32.5 424.0 31.9 420.9 29.4 420.6 30.4 418.8 27.3 418.6ZM957.3 417.0 961.2 414.7 965.0 416.0 967.6 422.2 972.8 417.5 976.7 417.8 983.1 420.4 992.2 423.4 995.5 426.0 999.9 429.6 1000.7 433.0 1005.1 437.4 1008.4 440.2 1005.1 440.5 999.9 439.4 996.0 434.3 991.4 433.5 989.1 436.8 983.1 437.1 979.2 434.8 975.4 435.3 974.6 427.6 968.9 425.0 962.5 424.0 961.9 420.9 959.4 420.6 960.4 418.8 957.3 418.6ZM72.0 427.8 77.7 426.5 81.5 424.5 82.1 427.8 76.4 429.6ZM1002.0 427.8 1007.7 426.5 1011.5 424.5 1012.1 427.8 1006.4 429.6ZM100.9 434.3 104.8 436.8 108.1 441.0 102.2 439.2 94.5 434.3ZM1030.9 434.3 1034.8 436.8 1038.1 441.0 1032.2 439.2 1024.5 434.3ZM112.5 466.5 119.0 472.0 120.3 472.9 113.8 468.2ZM1042.5 466.5 1049.0 472.0 1050.3 472.9 1043.8 468.2ZM146.9 459.2 150.3 458.7 150.0 461.1 147.2 460.8ZM1076.9 459.2 1080.3 458.7 1080.0 461.1 1077.2 460.8ZM150.8 456.8 153.9 455.8 152.6 457.6ZM1080.8 456.8 1083.9 455.8 1082.6 457.6ZM-17.9 471.5 -16.6 470.9 -10.2 467.9 -4.2 466.8 1.5 464.6 4.8 460.6 5.3 457.4 8.2 456.0 11.3 453.4 14.4 450.4 18.5 449.9 20.6 453.4 23.4 452.0 25.2 447.3 27.3 445.2 31.2 443.4 33.7 444.1 37.6 445.2 42.3 444.4 41.5 448.6 38.9 452.0 42.8 455.0 48.0 458.4 51.8 459.5 54.4 452.6 54.7 447.3 56.2 441.8 57.8 442.0 59.6 449.4 62.2 450.7 64.5 452.6 66.6 462.2 71.2 465.5 74.3 469.3 77.7 472.6 80.2 477.1 84.1 480.4 85.7 489.0 84.1 497.3 82.8 501.8 79.7 506.1 76.9 511.7 76.4 517.4 71.2 518.4 66.8 522.3 62.9 519.7 59.6 521.7 54.7 520.0 50.5 517.8 49.5 514.2 46.7 511.4 45.6 509.8 46.7 507.0 44.6 510.1 42.3 510.1 44.1 506.1 45.1 503.3 43.6 504.5 39.7 508.9 37.6 505.5 34.5 500.9 28.6 498.8 22.1 499.4 14.9 501.2 9.2 503.3 7.9 506.1 1.5 505.8 -4.2 507.9 -9.9 509.5 -14.0 507.3 -13.8 505.2 -12.2 501.8 -12.2 498.8 -14.0 492.8 -15.1 489.0 -17.7 484.1 -18.4 481.3 -17.1 478.5 -17.9 474.8ZM912.1 471.5 913.4 470.9 919.8 467.9 925.8 466.8 931.5 464.6 934.8 460.6 935.3 457.4 938.2 456.0 941.3 453.4 944.4 450.4 948.5 449.9 950.6 453.4 953.4 452.0 955.2 447.3 957.3 445.2 961.2 443.4 963.7 444.1 967.6 445.2 972.3 444.4 971.5 448.6 968.9 452.0 972.8 455.0 978.0 458.4 981.8 459.5 984.4 452.6 984.7 447.3 986.2 441.8 987.8 442.0 989.6 449.4 992.2 450.7 994.5 452.6 996.6 462.2 1001.2 465.5 1004.3 469.3 1007.7 472.6 1010.2 477.1 1014.1 480.4 1015.7 489.0 1014.1 497.3 1012.8 501.8 1009.7 506.1 1006.9 511.7 1006.4 517.4 1001.2 518.4 996.8 522.3 992.9 519.7 989.6 521.7 984.7 520.0 980.5 517.8 979.5 514.2 976.7 511.4 975.6 509.8 976.7 507.0 974.6 510.1 972.3 510.1 974.1 506.1 975.1 503.3 973.6 504.5 969.7 508.9 967.6 505.5 964.5 500.9 958.6 498.8 952.1 499.4 944.9 501.2 939.2 503.3 937.9 506.1 931.5 505.8 925.8 507.9 920.1 509.5 916.0 507.3 916.2 505.2 917.8 501.8 917.8 498.8 916.0 492.8 914.9 489.0 912.3 484.1 911.6 481.3 912.9 478.5 912.1 474.8ZM62.7 528.0 72.0 528.7 71.2 535.9 68.4 538.0 64.2 534.2ZM992.7 528.0 1002.0 528.7 1001.2 535.9 998.4 538.0 994.2 534.2ZM135.0 507.6 139.1 510.4 142.2 515.2 143.5 517.8 147.4 518.7 150.0 518.1 148.4 522.7 146.1 523.7 145.6 526.3 141.7 531.1 139.9 530.0 141.0 525.7 137.9 523.0 139.9 519.7 139.1 515.8 135.8 510.4ZM1065.0 507.6 1069.1 510.4 1072.2 515.2 1073.5 517.8 1077.4 518.7 1080.0 518.1 1078.4 522.7 1076.1 523.7 1075.6 526.3 1071.7 531.1 1069.9 530.0 1071.0 525.7 1067.9 523.0 1069.9 519.7 1069.1 515.8 1065.8 510.4ZM135.0 527.3 139.1 529.7 138.1 533.5 135.3 537.7 131.4 540.5 130.1 546.0 126.7 548.9 119.0 547.1 119.5 544.1 123.6 539.5 129.3 535.9 131.9 531.4 133.2 528.3ZM1065.0 527.3 1069.1 529.7 1068.1 533.5 1065.3 537.7 1061.4 540.5 1060.1 546.0 1056.7 548.9 1049.0 547.1 1049.5 544.1 1053.6 539.5 1059.3 535.9 1061.9 531.4 1063.2 528.3ZM460.5 566.9 469.0 566.9 469.8 568.9 465.2 571.4 461.3 569.3Z"/><path fill="#ebebd6" d="M434.2 519.1 453.5 520.7 454.8 529.0 451.0 535.9 448.4 546.7 441.9 564.0 440.6 572.3 432.9 568.1 434.2 546.7 434.2 532.4Z"/><path fill="#efe8df" d="M576.8 364.1 575.5 357.3 581.4 344.1 585.3 339.8 594.1 334.3 606.0 331.6 613.7 328.6 626.6 325.6 639.5 325.6 645.5 322.5 648.6 324.1 658.4 327.7 669.2 331.6 673.1 327.7 683.5 328.6 693.8 330.7 702.3 330.1 704.1 336.0 709.3 343.3 714.5 354.5 717.0 365.5 714.5 374.8 704.1 381.4 691.2 384.0 675.7 381.4 657.6 376.2 639.5 372.2 624.0 372.2 606.0 370.8 590.5 369.5ZM708.8 336.0 713.2 330.1 719.6 327.1 732.5 330.1 741.6 333.1 744.2 338.9 749.3 346.1 751.9 348.9 758.4 349.8 763.5 348.9 772.1 355.1 766.1 364.1 761.0 369.5 753.2 372.7 744.2 376.7 735.1 379.3 731.2 378.8 729.4 372.2 724.8 364.1 720.1 357.3 715.7 348.9 711.9 342.4ZM758.4 327.1 768.7 328.6 779.0 319.5 794.5 321.0 799.7 334.6 789.4 341.8 776.5 344.7 763.5 341.0 750.6 336.0 740.3 327.1 740.3 321.0 750.6 313.2 761.0 306.7 755.8 295.0 763.5 282.5 784.2 278.9 804.9 291.5 794.5 298.4 784.2 308.3 773.9 310.0 763.5 311.6 753.2 317.9 744.2 325.6ZM815.2 303.4 825.5 296.7 846.2 293.2 864.3 293.2 877.2 291.5 892.7 286.2 908.2 285.1 913.4 293.2 897.9 301.7 885.0 306.7 872.0 313.2 856.5 314.8 841.0 317.9 825.5 316.3 817.8 311.6ZM820.4 319.5 835.9 319.5 856.5 316.3 872.0 317.9 866.9 327.1 851.4 331.6 835.9 330.1 823.0 325.6ZM-16.6 472.9 -10.2 468.5 -3.7 467.1 2.7 464.1 6.6 459.2 14.4 455.2 22.1 455.2 29.9 453.9 38.9 456.6 46.7 461.4 53.1 464.6 58.3 468.7 63.5 477.1 68.6 488.5 69.9 497.3 63.5 506.4 53.1 510.1 48.0 507.9 43.6 505.2 38.9 504.9 33.7 500.3 27.3 498.2 19.5 499.7 11.8 501.2 4.0 503.9 -2.4 504.2 -8.9 503.3 -11.5 497.3 -13.5 491.4 -16.6 484.1 -17.4 478.5ZM913.4 472.9 919.8 468.5 926.3 467.1 932.7 464.1 936.6 459.2 944.4 455.2 952.1 455.2 959.9 453.9 968.9 456.6 976.7 461.4 983.1 464.6 988.3 468.7 993.5 477.1 998.6 488.5 999.9 497.3 993.5 506.4 983.1 510.1 978.0 507.9 973.6 505.2 968.9 504.9 963.7 500.3 957.3 498.2 949.5 499.7 941.8 501.2 934.0 503.9 927.6 504.2 921.1 503.3 918.5 497.3 916.5 491.4 913.4 484.1 912.6 478.5ZM651.2 457.9 662.8 459.2 673.1 463.3 683.5 471.5 683.5 484.1 673.1 491.4 665.4 495.8 658.9 485.6 655.0 472.9Z"/><path fill="#f3f2ee" d="M430.3 80.6 443.2 53.2 456.1 35.7 469.0 23.3 489.7 13.8 510.4 -2.8 536.2 -9.5 556.9 -0.6 572.4 23.3 587.9 32.2 572.4 51.7 568.5 70.2 569.8 94.9 571.1 113.2 564.6 125.7 563.3 139.1 562.0 155.2 555.6 167.8 546.5 172.6 536.2 173.3 531.0 183.3 524.6 187.7 515.5 192.6 511.7 201.5 509.1 212.6 505.5 221.5 500.0 216.8 494.9 212.6 491.0 205.4 488.4 197.4 484.5 189.6 480.7 181.3 480.7 169.9 478.1 162.0 485.8 155.2 480.7 147.4 475.5 139.1 472.9 123.9 467.7 111.1 461.3 103.8 448.4 104.9 438.0 100.5 434.2 91.5ZM560.7 198.6 556.1 189.6 561.5 183.9 571.1 185.2 578.8 183.3 581.4 189.0 583.7 192.0 580.1 196.8 571.1 202.0 563.3 199.7ZM647.3 76.8 657.6 57.6 673.1 51.7 688.6 56.2 680.9 72.9 673.1 89.1 661.5 100.5 655.0 91.5ZM753.2 149.0 761.0 132.1 759.7 121.0 768.7 108.0 779.0 102.7 794.5 94.9 790.7 108.0 775.2 118.1 764.8 133.0 763.5 147.4 768.7 154.5 758.4 152.9ZM856.5 70.2 866.9 48.6 882.4 66.2 890.1 79.4 877.2 94.9 864.3 89.1ZM40.2 110.1 55.7 104.9 71.2 113.2 55.7 119.1 42.8 121.0ZM970.2 110.1 985.7 104.9 1001.2 113.2 985.7 119.1 972.8 121.0ZM156.5 147.4 160.3 150.6 153.9 152.9 150.8 152.9 150.8 147.4ZM1086.5 147.4 1090.3 150.6 1083.9 152.9 1080.8 152.9 1080.8 147.4ZM737.7 43.9 761.0 35.7 781.6 43.9 768.7 59.1 748.0 56.2ZM-776.1 846.4 -776.1 744.3 -750.3 738.3 -719.3 732.5 -698.6 721.5 -672.8 711.2 -647.0 703.5 -621.1 699.8 -595.3 703.5 -569.5 697.1 -543.6 690.9 -517.8 692.6 -502.3 688.3 -486.8 668.4 -473.9 640.9 -458.4 624.8 -463.5 631.8 -468.7 647.4 -471.3 668.4 -466.1 701.7 -440.3 738.3 -401.5 738.3 -383.5 721.5 -357.6 692.6 -337.0 678.4 -311.1 669.9 -285.3 668.4 -259.5 668.4 -233.6 664.7 -207.8 658.9 -182.0 649.4 -169.0 644.1 -151.0 650.7 -130.3 654.1 -125.1 664.7 -109.6 657.5 -83.8 644.1 -52.8 637.8 -27.0 640.9 -1.1 645.4 24.7 642.8 50.5 646.1 76.4 658.9 102.2 668.4 115.1 676.0 128.0 680.0 122.9 697.1 115.1 732.5 128.0 744.3 153.9 744.3 153.9 846.4ZM153.9 846.4 153.9 744.3 179.7 738.3 210.7 732.5 231.4 721.5 257.2 711.2 283.0 703.5 308.9 699.8 334.7 703.5 360.5 697.1 386.4 690.9 412.2 692.6 427.7 688.3 443.2 668.4 456.1 640.9 471.6 624.8 466.5 631.8 461.3 647.4 458.7 668.4 463.9 701.7 489.7 738.3 528.5 738.3 546.5 721.5 572.4 692.6 593.0 678.4 618.9 669.9 644.7 668.4 670.5 668.4 696.4 664.7 722.2 658.9 748.0 649.4 761.0 644.1 779.0 650.7 799.7 654.1 804.9 664.7 820.4 657.5 846.2 644.1 877.2 637.8 903.0 640.9 928.9 645.4 954.7 642.8 980.5 646.1 1006.4 658.9 1032.2 668.4 1045.1 676.0 1058.0 680.0 1052.9 697.1 1045.1 732.5 1058.0 744.3 1083.9 744.3 1083.9 846.4ZM1083.9 846.4 1083.9 744.3 1109.7 738.3 1140.7 732.5 1161.4 721.5 1187.2 711.2 1213.0 703.5 1238.9 699.8 1264.7 703.5 1290.5 697.1 1316.4 690.9 1342.2 692.6 1357.7 688.3 1373.2 668.4 1386.1 640.9 1401.6 624.8 1396.5 631.8 1391.3 647.4 1388.7 668.4 1393.9 701.7 1419.7 738.3 1458.5 738.3 1476.5 721.5 1502.4 692.6 1523.0 678.4 1548.9 669.9 1574.7 668.4 1600.5 668.4 1626.4 664.7 1652.2 658.9 1678.0 649.4 1691.0 644.1 1709.0 650.7 1729.7 654.1 1734.9 664.7 1750.4 657.5 1776.2 644.1 1807.2 637.8 1833.0 640.9 1858.9 645.4 1884.7 642.8 1910.5 646.1 1936.4 658.9 1962.2 668.4 1975.1 676.0 1988.0 680.0 1982.9 697.1 1975.1 732.5 1988.0 744.3 2013.9 744.3 2013.9 846.4ZM524.6 579.5 526.4 582.2 520.7 578.7ZM385.2 28.5 397.7 16.0 411.9 8.9 422.6 1.8 436.8 1.8 452.8 8.9 460.8 17.8 458.2 26.7 449.3 33.8 452.8 37.4 442.1 46.3 433.2 53.4 424.3 58.7 426.1 67.6 424.3 74.7 417.2 83.6 417.2 96.1 411.9 103.2 403.0 101.4 395.9 94.3 388.8 99.6 378.1 97.9 371.0 96.1 374.5 83.6 381.6 76.5 378.1 65.8 372.7 56.9 374.5 42.7 379.9 37.4 387.0 46.3 395.9 49.8 406.6 46.3 413.7 44.5 404.8 40.9 392.3 37.4ZM382.8 106.2 387.6 112.1 401.8 109.7 411.3 109.7 413.7 116.9 408.9 120.4 392.3 120.4 384.0 116.9ZM389.9 131.1 399.4 128.7 418.4 131.1 423.1 138.2 429.1 150.1 440.9 156.0 445.7 166.7 451.6 176.1 459.9 183.3 456.4 190.4 449.2 188.0 452.8 199.9 449.2 208.2 439.8 204.6 429.1 195.1 419.6 195.1 427.9 188.0 432.6 178.5 425.5 171.4 420.8 176.1 424.3 166.7 417.2 158.4 408.9 160.7 401.8 160.7 391.1 154.8 388.8 140.6ZM374.5 126.3 385.2 126.3 386.4 132.3 380.5 138.2 376.9 144.1 373.3 140.6 373.9 131.1ZM359.1 128.7 367.4 126.3 369.8 135.8 368.6 147.7 363.9 148.9 356.7 137.0ZM371.0 145.3 379.3 154.8 381.6 164.3 389.9 166.7 393.5 177.3 397.1 180.9 401.8 160.7 408.9 161.9 410.1 178.5 403.0 186.8 397.1 188.0 391.1 183.3 381.6 179.7 369.8 177.3 365.0 176.1 367.4 163.1 371.0 161.9ZM419.6 173.8 425.5 171.4 429.1 176.1 423.1 178.5ZM372.2 112.1 376.9 110.9 378.1 118.0 373.3 119.2ZM298.0 142.3 301.6 122.8 317.6 124.6 326.5 137.0 340.7 135.2 349.6 129.9 353.2 153.0 360.3 160.1 349.6 167.3 328.3 167.3 321.1 156.6 308.7 149.5ZM1228.0 142.3 1231.6 122.8 1247.6 124.6 1256.5 137.0 1270.7 135.2 1279.6 129.9 1283.2 153.0 1290.3 160.1 1279.6 167.3 1258.3 167.3 1251.1 156.6 1238.7 149.5ZM317.6 103.2 331.8 99.6 340.7 99.6 344.3 110.3 337.2 117.4 328.3 119.2 319.4 113.9ZM1247.6 103.2 1261.8 99.6 1270.7 99.6 1274.3 110.3 1267.2 117.4 1258.3 119.2 1249.4 113.9ZM305.1 103.2 315.8 90.7 321.1 92.5 315.8 105.0 306.9 106.8ZM1235.1 103.2 1245.8 90.7 1251.1 92.5 1245.8 105.0 1236.9 106.8ZM351.4 101.4 362.1 99.6 367.4 106.8 365.6 115.7 358.5 113.9 353.2 106.8ZM1281.4 101.4 1292.1 99.6 1297.4 106.8 1295.6 115.7 1288.5 113.9 1283.2 106.8ZM349.6 67.6 356.7 71.2 363.9 81.8 358.5 83.6 351.4 74.7ZM1279.6 67.6 1286.7 71.2 1293.9 81.8 1288.5 83.6 1281.4 74.7ZM367.0 74.0 371.0 75.0 373.0 83.0 369.0 84.0ZM324.7 85.0 330.0 83.6 335.4 85.0 333.0 90.7 326.0 90.0ZM1254.7 85.0 1260.0 83.6 1265.4 85.0 1263.0 90.7 1256.0 90.0Z"/><path fill="#75cef0" d="M690.7 290.8 692.8 288.7 693.3 284.7 695.3 283.3 698.2 278.9 701.0 278.5 704.6 280.0 702.8 282.5 705.4 285.8 708.0 286.2 710.6 284.0 713.2 283.3 715.7 283.3 714.5 284.7 717.0 286.2 720.9 289.4 723.5 291.5 726.1 294.3 726.6 296.7 723.5 298.4 720.9 298.4 717.0 298.4 713.2 297.4 710.6 295.6 708.0 295.3 704.1 295.6 700.2 298.0 694.0 297.7 691.2 296.7 691.2 293.2ZM709.3 280.0 713.2 278.5 717.8 276.6 720.1 276.2 717.0 278.9 718.3 280.7 715.7 283.3 713.2 283.3 710.6 282.2ZM739.5 286.2 741.6 282.2 746.0 279.2 751.9 277.0 756.0 277.7 756.3 283.3 751.4 286.2 751.4 290.8 755.0 295.0 755.3 298.4 758.4 298.4 758.1 304.4 756.6 308.3 758.1 310.6 752.4 312.5 748.8 311.2 745.7 309.6 745.2 307.0 746.5 301.1 749.1 300.7 746.7 299.1 744.4 295.6 742.1 292.2 741.1 289.0ZM769.2 278.9 776.5 278.9 777.7 285.1 772.6 288.7 770.0 286.2ZM888.8 257.2 895.3 250.9 900.7 240.7 901.7 241.6 897.9 253.0 890.1 258.9 886.8 258.5ZM808.7 280.0 812.6 277.7 821.7 278.9 820.4 280.7 811.3 281.1ZM381.2 278.1 391.5 271.3 399.3 270.5 400.6 278.9 392.8 278.9ZM391.5 295.0 392.1 286.2 398.0 280.7 400.1 281.4 395.9 286.2 395.4 295.0ZM400.6 281.1 409.1 280.7 412.7 285.1 406.0 291.5 403.7 287.9 405.7 283.6ZM403.2 296.0 414.8 292.2 413.5 294.3 405.7 297.0ZM412.7 290.4 422.0 287.6 421.8 289.7 414.3 291.1ZM363.1 259.3 364.4 250.9 368.3 249.6 367.0 263.4ZM298.5 186.5 306.3 180.0 312.7 181.3 296.0 192.6ZM1228.5 186.5 1236.3 180.0 1242.7 181.3 1226.0 192.6ZM316.6 215.2 329.5 207.1 336.0 205.4 327.0 215.2 317.9 216.3ZM1246.6 215.2 1259.5 207.1 1266.0 205.4 1257.0 215.2 1247.9 216.3ZM701.0 415.0 706.7 413.2 708.0 416.3 704.1 420.4 700.5 418.8ZM694.3 422.4 697.1 430.4 699.0 435.8 697.9 435.8 695.1 430.4 693.8 424.0ZM706.7 438.1 708.8 443.4 710.1 449.9 708.5 450.4 707.5 444.7 706.2 439.4ZM703.1 333.4 704.6 337.2 707.2 338.4 708.3 334.6 708.8 338.4 706.2 340.4ZM696.4 213.6 702.8 214.2 703.6 217.3 699.0 220.9 695.9 217.9ZM708.0 207.1 711.9 212.0 710.6 215.8 708.0 212.6Z"/><g fill="none" stroke-width="4.2" stroke-linecap="round"><path stroke="#1f77b4" d="M1056 467h0m13 56h0m-693 -148h0m504 -51h0m105 17h0m-56 9h0m-230 99h0m324 -203h0m-7 35h0m-151 56h0m-159 0h0m177 -82h0m-514 156h0m568 -17h0m-323 186h0m-460 -101h0m67 -246h0m318 175h0m486 30h0m-45 -156h0m-341 -158h0m-233 264h0m628 228h0m-46 -193h0m-684 167h0m411 -213h0m-44 -55h0m-102 -136h0m-315 34h0m-94 265h0m811 -98h0m25 -20h0m-538 3h0m13 245h0m-30 -152h0m422 -106h0m-453 93h0m377 -2h0m-558 -227h0m695 145h0m110 200h0m-78 -289h0m-71 -28h0m100 64h0m-350 0h0m-308 190h0m557 -171h0m-590 252h0m734 -5h0m-331 -281h0m9 7h0m1 40h0m-293 19h0m600 -97h0m-25 76h0m-4 -21h0m-2 22h0m6 3h0m-442 66h0m485 160h0m-42 -225h0m70 122h0m-638 -40h0m398 -135h0m187 -19h0m-292 133h0m326 -179h0m-297 94h0m-512 -102h0m791 35h0m-535 354h0m359 -345h0m-508 89h0m591 28h0m36 -65h0m-632 32h0m748 130h0m-213 -155h0m-368 283h0m523 -120h0m52 -6h0m-232 -218h0m-65 133h0m225 33h0m-593 6h0m668 22h0m-122 -42h0m-90 -68h0m-618 244h0m761 -309h0m49 167h0m-49 -192h0m73 192h0m-445 -196h0m333 133h0m-801 -129h0m853 -20h0m-806 -2h0m324 -18h0m-99 248h0m-79 53h0m350 -110h0m242 -68h0m-287 -34h0m263 127h0m-24 5h0m-485 -10h0m393 -104h0m-138 -22h0m384 -55h0m-477 240h0m19 83h0m-419 -321h0m224 198h0m590 -78h0m77 141h0m-364 -103h0m-420 -115h0m419 101h0m352 -140h0m-127 125h0m-186 -5h0m-185 234h0m460 -360h0m-323 242h0m277 75h0m12 -185h0m43 -149h0m-170 114h0m174 -120h0m-825 6h0m838 323h0m-436 31h0m-301 -306h0m486 203h0m-364 35h0m-100 -167h0m464 -62h0m-627 -34h0m432 315h0m212 -250h0m-651 187h0m795 -91h0m-112 -78h0m-439 204h0m173 -47h0m285 -154h0m156 243h0m-720 -280h0m777 165h0m-565 142h0m-304 -368h0m214 123h0m26 102h0m614 157h0m-32 -381h0m-589 212h0m558 -28h0m-813 -183h0m811 352h0m-273 -284h0m197 76h0m-254 -67h0m52 214h0m158 -105h0m-62 -138h0m-121 22h0m292 34h0m-700 239h0m567 -239h0m178 -114h0m-605 297h0m577 78h0m-148 -228h0m189 244h0m-115 -209h0m28 -106h0m-645 3h0m652 115h0m-134 -138h0m-454 83h0m651 -118h0m-597 245h0m364 -186h0m-26 70h0m78 -3h0m-556 -88h0m570 56h0m-434 214h0m496 0h0m-455 -297h0m347 23h0m110 102h0m-323 235h0m-444 -357h0m747 170h0m80 -95h0m-20 83h0m-513 53h0m44 -120h0m-56 99h0m-269 11h0m268 49h0m30 93h0m479 -178h0m-520 135h0m354 -163h0m211 -115h0m-19 42h0m-777 -93h0m123 332h0m110 -208h0m159 64h0m-257 17h0m721 103h0m-611 -79h0m482 -110h0m-489 145h0m260 -187h0m-111 112h0m474 199h0m-205 -239h0m-1 7h0m-625 196h0m281 22h0m531 -379h0m-588 246h0m592 -248h0m10 308h0m-887 -87h0m581 -121h0m237 -25h0m-718 272h0m445 -132h0m-162 138h0m-150 -197h0m22 176h0m543 -278h0m-423 24h0m322 102h0m192 125h0m-146 -102h0m-591 133h0m689 -291h0m52 179h0m-421 -56h0m293 -42h0m-510 27h0m-164 -173h0m175 273h0m-102 -147h0m544 93h0m176 114h0m-41 68h0m-588 -68h0m610 19h0m-855 -109h0m677 -73h0m-587 -156h0m587 114h0m-254 -336h0m7 569h0m-168 -59h0m531 -32h0m-149 -149h0m229 119h0m-75 -32h0m-550 139h0m153 -21h0m390 -222h0m-296 258h0m168 -236h0m98 7h0m-59 -8h0m-596 244h0m-49 -362h0m830 27h0m-484 285h0m120 -214h0m-302 117h0m642 -211h0m-162 122h0m-21 -8h0m220 152h0m-361 -88h0m-180 -92h0m184 -18h0m218 141h0m-307 -117h0m120 -7h0m-332 104h0m126 -3h0m-113 167h0m-147 -307h0m574 81h0m-82 -201h0m100 169h0m-610 -87h0m370 -135h0m203 194h0m181 -45h0m-239 94h0m-469 -22h0m400 -26h0m-128 143h0m-161 119h0m559 -374h0m-102 70h0m60 311h0m-82 -191h0m161 61h0m-89 -50h0m-501 87h0m498 -34h0m-47 -111h0m161 126h0m-169 -33h0m-437 69h0m638 36h0m-636 -61h0m300 62h0m52 -88h0m-626 65h0m784 -87h0m39 -170h0m19 44h0m7 -12h0m-597 164h0m-166 -219h0m635 206h0m-715 44h0m698 -123h0m-25 -55h0m125 23h0m-420 -37h0m-361 -29h0m800 57h0m-579 237h0m167 -14h0m-27 85h0m-243 -304h0m575 37h0m-191 147h0m218 -58h0m-586 -110h0m667 -24h0m-91 -56h0m69 74h0m-803 -59h0m695 101h0m-66 -61h0m-32 -233h0m-186 453h0m374 -98h0m-382 -5h0m295 -146h0m-16 -1h0m-28 56h0m63 25h0m27 213h0m-585 4h0m634 -159h0m-709 -200h0m156 224h0m627 -215h0m39 40h0m-409 45h0m-169 277h0m218 -170h0m-270 53h0m-35 -28h0m562 -195h0m15 51h0m27 -28h0m-292 138h0m268 -13h0m-226 -82h0m56 -14h0m145 133h0m-538 38h0m435 -62h0m112 -7h0m44 -125h0m-553 210h0m-158 -170h0m-146 193h0m311 -129h0m-180 -170h0m649 229h0m-210 -56h0m247 -73h0m-630 134h0m539 -12h0m-15 -90h0m96 88h0m-108 -19h0m-365 208h0m391 -355h0m-616 -31h0m184 373h0m417 -179h0m-3 -86h0m-123 -29h0m199 42h0m-359 -193h0m477 301h0m-61 -94h0m-29 -113h0m-151 79h0m145 9h0m-543 74h0m-260 -150h0m789 75h0m-722 263h0m574 -299h0m151 124h0m-547 -34h0m-244 97h0m85 -317h0m835 290h0m-529 150h0m-221 -152h0m90 -175h0m93 300h0m298 -286h0m-379 247h0m-184 -329h0m721 102h0m-529 184h0m530 -77h0m20 -123h0m-406 145h0m58 -321h0m-106 107h0m-293 -24h0m812 247h0m-237 48h0m-421 -122h0m-95 -76h0m103 235h0m-82 32h0m594 -33h0m46 22h0m62 36h0m22 -146h0m-55 -186h0m-572 186h0m123 -146h0m380 91h0m-508 29h0m500 62h0m-626 -191h0m594 137h0m96 -1h0m-809 43h0m190 -107h0m91 -4h0m344 -20h0m-525 -115h0m716 32h0m-305 53h0m175 -23h0m-94 18h0m-63 12h0m-462 -125h0m552 101h0m291 160h0m-589 -30h0m-162 -93h0m601 49h0m-168 -46h0m-311 148h0m526 -162h0m-563 76h0m407 113h0m0 -2h0m-101 -118h0m256 33h0m-473 -63h0m560 107h0m-349 -83h0m334 61h0m-148 -178h0m-742 240h0m890 -58h0m16 4h0m-70 -171h0m-465 330h0m435 -52h0m-519 -96h0m528 -44h0m-747 -195h0m747 96h0m61 -80h0m-493 348h0m6 -325h0m333 46h0m-705 150h0m249 -35h0m382 -131h0m86 -47h0m39 102h0m-512 89h0m-57 -30h0m-105 -186h0m704 183h0m-596 -36h0m595 33h0m-382 11h0m-157 36h0m226 128h0m-474 62h0m619 -212h0m241 -184h0m-114 127h0m-326 185h0m485 -52h0m-614 -135h0m-96 0h0m27 -1h0m380 17h0m304 253h0m-495 -189h0m-171 -19h0m631 24h0m22 82h0m-905 -271h0m816 152h0m-34 -12h0m-704 -235h0m687 192h0m-761 108h0m710 -127h0m18 -100h0m90 144h0m-376 -356h0m389 402h0m-197 -140h0m-392 74h0m514 -112h0m23 173h0m-586 -62h0m519 -19h0m-280 -196h0m213 176h0m192 -59h0m-9 312h0m-634 -209h0m686 185h0m16 -93h0m-615 28h0m490 -50h0m-239 26h0m267 -20h0m-29 -57h0m21 39h0m-32 -67h0m-740 -110h0m529 185h0m147 -40h0m-357 -38h0m471 37h0m-278 -90h0m308 122h0m-8 -72h0m-70 20h0m-147 -33h0m175 -4h0m-130 -47h0m-403 175h0m577 -87h0m-658 -32h0m11 40h0m64 51h0m-257 62h0m696 -139h0m-221 218h0m318 -252h0m-406 -111h0m-99 171h0m559 -86h0m-6 -45h0m41 -17h0m-256 113h0m-73 55h0m-51 -98h0m179 34h0m-339 267h0m360 -214h0m80 -10h0m-17 -355h0m-52 235h0m-367 118h0m408 -30h0m-602 240h0m482 -259h0m261 209h0m-70 -287h0m-31 174h0m-248 37h0m-343 -60h0m50 17h0m565 -37h0m-763 -197h0m647 212h0m-552 184h0m707 -310h0m58 184h0m-438 -333h0m27 166h0m33 -18h0m-252 215h0m405 -149h0m-75 160h0m-217 105h0m479 -391h0m-95 181h0m-61 -59h0m175 124h0m-50 -185h0m-188 33h0m-360 164h0m-69 54h0m402 -214h0m-473 5h0m377 120h0m20 -147h0m-376 61h0m358 211h0m383 -313h0m-739 258h0m594 -164h0m54 -9h0m-38 93h0m21 -103h0m-556 98h0m595 185h0m-544 11h0m-213 -425h0m690 146h0m-596 86h0m112 41h0m622 23h0m-230 -157h0m-205 -47h0m-226 129h0m575 13h0m-50 1h0m-92 -29h0m27 -145h0m-384 359h0m490 -314h0m67 151h0m-807 -249h0m22 24h0m173 288h0m622 -49h0m-822 129h0m710 -180h0m-576 -42h0m594 21h0m-721 -188h0m693 230h0m-356 -282h0m379 270h0m68 -166h0m-75 170h0m37 -131h0m-570 138h0m343 -116h0m-54 78h0m331 -160h0m-479 372h0m-114 -117h0m568 -58h0m-551 124h0m228 -262h0m-142 312h0m-101 -243h0m483 -127h0m-717 126h0m656 56h0m175 202h0m-72 -312h0m-27 94h0m-196 111h0m101 -114h0m-37 108h0m58 -161h0m175 104h0m24 -191h0m-55 -5h0m-631 124h0m18 16h0m-72 -52h0m719 114h0m-473 45h0m44 77h0m-127 -206h0m497 -11h0m23 63h0m-857 38h0m864 -221h0m-642 278h0m-216 -24h0m906 27h0m-658 -122h0m-125 -81h0m-6 -57h0m530 55h0m149 4h0m-542 128h0m659 68h0m-798 -254h0m113 103h0m-68 119h0m361 82h0m165 -197h0m-94 137h0m115 -213h0m6 30h0m173 -85h0m-25 202h0m37 -198h0m-501 363h0m-152 -187h0m461 1h0m-6 -84h0m63 38h0m-67 -32h0m131 82h0m61 119h0m-169 -206h0m-439 133h0m13 134h0m491 -174h0m98 17h0m-190 -175h0m-627 -72h0m331 -2h0m-328 11h0m531 120h0m-14 -25h0m-334 146h0m555 -122h0m-813 173h0m270 52h0m444 -214h0m-531 17h0m78 78h0m440 -53h0m-569 202h0m555 -296h0m-227 294h0m117 -282h0m-202 -72h0m283 60h0m-408 121h0m507 27h0m-110 -141h0m129 32h0m-98 3h0m47 20h0m-457 35h0m2 177h0m286 -184h0m16 -87h0m37 86h0m-83 -74h0m201 26h0m-575 261h0m156 -216h0m576 68h0m-601 54h0m-101 -136h0m-152 267h0m808 -261h0m-134 -26h0m-391 43h0m141 199h0m465 -97h0m-116 -80h0m-418 -136h0m-381 228h0m360 -183h0m-23 297h0m372 -189h0m186 122h0m-704 -184h0m633 65h0m-178 -104h0m-234 193h0m-365 -281h0m655 184h0m-176 19h0m-424 -215h0m95 141h0m629 -13h0m-138 43h0m113 31h0m-187 -108h0m-519 274h0m679 -248h0m-257 235h0m121 -255h0m-301 43h0m555 88h0m-106 -118h0m-757 -154h0m384 -18h0m387 254h0m90 -170h0m-59 27h0m-760 -65h0m700 351h0m-731 68h0m154 -264h0m436 -68h0m-366 167h0m-68 -95h0m493 -1h0m-455 0h0m613 242h0m-147 -254h0m137 18h0m-828 100h0m-14 165h0m882 -413h0m-154 111h0m-653 -136h0m532 142h0m-260 5h0m316 -90h0m234 -12h0m-3 204h0m-331 -157h0m-206 289h0m497 -302h0m-693 290h0m62 -191h0m-225 112h0m663 -161h0m234 138h0m-86 -153h0m-546 133h0m40 90h0m-163 52h0m638 -243h0m-65 66h0m-450 32h0m-80 -86h0m145 253h0m-324 -112h0m174 -155h0m90 174h0m538 -272h0m-533 319h0m-266 -85h0m851 -214h0m29 182h0m-121 -95h0m-144 47h0m-543 -192h0m801 17h0m-630 139h0m-241 109h0m800 -53h0m-428 -11h0m-191 -17h0m448 -79h0m131 -80h0m-643 351h0m703 -280h0m-576 127h0m428 -96h0m-12 -8h0m37 -55h0m-455 135h0m548 -131h0m-89 70h0m-12 -56h0m127 137h0m-395 -21h0m353 -1h0m-83 -29h0m192 -135h0m-77 178h0m-650 152h0m-64 -356h0m748 72h0m-800 -44h0m566 72h0m281 130h0m-7 103h0m-192 -179h0m-99 -34h0m87 198h0m-29 -210h0m152 239h0m28 -190h0m56 177h0m-410 -434h0m306 298h0m-424 -20h0m218 -96h0m274 317h0m-713 -316h0m784 180h0m-58 121h0m-303 -277h0m214 113h0m31 -121h0m-111 -20h0m-513 58h0m509 55h0m-140 -112h0m338 -46h0m-622 287h0m-199 -310h0m644 62h0m72 136h0m-787 64h0m390 -184h0m321 121h0m15 -108h0m-28 27h0m-418 148h0m373 2h0m58 -152h0m-74 -31h0m90 120h0m-725 45h0m126 -187h0m755 265h0m-19 38h0m-336 -280h0m267 88h0m-530 41h0m201 -127h0m-168 182h0m-8 -7h0m-9 -8h0m419 -70h0m106 -90h0m102 135h0m-56 -188h0m-789 -42h0m-1 3h0m458 79h0m34 -9h0m-141 -121h0m189 136h0m-400 58h0m-119 -164h0m497 166h0m-404 -20h0m-62 228h0m485 -275h0m300 226h0m-243 -452h0m-636 174h0m774 72h0m-345 263h0m190 -295h0m-468 186h0m661 -112h0m20 -99h0m-583 300h0m381 -267h0m270 192h0m-1 0h0m3 -42h0m-150 -90h0m-227 96h0m52 54h0m-181 -98h0m158 -115h0m-496 -89h0m104 303h0m105 -127h0m582 186h0m-469 38h0m-133 -168h0m559 -95h0m-9 45h0m-125 -14h0m106 -60h0m-321 -8h0m344 9h0m-380 -174h0m31 -14h0m301 215h0m-546 29h0m-224 115h0m84 105h0m220 -225h0m458 2h0m-39 -47h0m-712 -71h0m102 323h0m756 -6h0m-311 -210h0m210 36h0m144 103h0m-891 -250h0m803 7h0m66 -25h0m-200 145h0m-3 -47h0m-459 41h0m321 36h0m238 -88h0m-501 168h0m-27 -45h0m629 19h0m-640 79h0m392 -258h0m-526 -97h0m161 263h0m343 -47h0m270 47h0m-818 -246h0m83 113h0m114 218h0m513 -109h0m87 139h0m-268 -118h0m-478 -185h0m593 -3h0m-1 54h0m-294 140h0m232 -124h0m266 146h0m-915 -215h0m-8 228h0m201 -76h0m183 203h0m-314 -383h0m761 124h0m-28 67h0m-506 179h0m368 32h0m-619 -394h0m194 143h0m1 6h0m519 -32h0m-151 -19h0m-535 -128h0m702 221h0m93 10h0m-63 -148h0m-170 0h0m145 141h0m-619 138h0m680 -200h0m-465 -122h0m-175 116h0m639 13h0m-558 92h0m511 -43h0m-793 209h0m804 -398h0m-557 197h0m490 -3h0m61 -3h0m-97 -87h0m84 89h0m-7 128h0m-539 -181h0m257 -61h0m274 -79h0m63 122h0m-95 -116h0m-688 4h0m853 216h0m-512 -182h0m380 61h0m150 -87h0m-193 93h0m43 29h0m42 -61h0m56 262h0m-866 -62h0m871 -81h0m-218 -115h0m-360 150h0m624 45h0m-373 34h0m-118 6h0m294 -219h0m98 95h0m-75 -196h0m-453 210h0m-33 0h0m14 27h0m-257 1h0m730 -36h0m174 24h0m-177 -224h0m74 330h0m-363 -256h0m266 114h0m109 -44h0m-803 -135h0m671 79h0m66 49h0m-268 108h0m115 -109h0m20 70h0m-412 76h0m-150 -309h0m108 233h0m517 -62h0m-661 -137h0m590 68h0m-26 -13h0m-422 151h0m646 -121h0m-571 100h0m2 -32h0m671 96h0m-39 65h0m-589 -83h0m-38 -69h0m636 -166h0m-58 125h0m-116 118h0m165 -249h0m-185 170h0m135 -36h0m-299 -71h0m-148 297h0m-26 -272h0m-356 141h0m11 -4h0m188 55h0m493 -157h0m116 -38h0m-110 16h0m21 -16h0m81 84h0m-88 -106h0m146 -44h0m-90 106h0m15 56h0m-72 -109h0m-706 155h0m550 -202h0m-253 120h0m108 37h0m457 -198h0m26 227h0m-885 34h0m640 12h0m46 -97h0m-7 -75h0m223 203h0m-70 -92h0m-42 -111h0m-34 39h0m-331 201h0m390 -267h0m-266 95h0m-516 -151h0m868 225h0m-288 -56h0m-112 -107h0m180 77h0m-107 -60h0m-331 86h0m664 -141h0m-383 164h0m258 -110h0m-522 237h0m-6 -143h0m285 131h0m-434 45h0m-76 -338h0m-44 260h0m845 -183h0m55 -78h0m-610 211h0m553 -85h0m-458 214h0m-316 -352h0m734 79h0m-290 8h0m200 87h0m-76 67h0m-441 -108h0m649 -96h0m-66 167h0m-79 -45h0m-695 84h0m778 -92h0m94 223h0m-611 -162h0m518 -16h0m-596 81h0m-175 -55h0m765 -85h0m140 263h0m-133 -202h0m-510 23h0m202 -139h0m353 -37h0m91 187h0m-196 -148h0m-5 223h0m-155 -223h0m-551 168h0m763 -114h0m-79 16h0m-276 150h0m304 -219h0m-542 37h0m602 -20h0m53 -34h0m-824 157h0m883 -8h0m-688 -81h0m711 130h0m-645 -114h0m403 -57h0m-386 269h0m119 -184h0m6 1h0m443 -158h0m-706 61h0m314 -9h0m-331 279h0m670 -167h0m-30 -82h0m-574 31h0m404 138h0m49 -214h0m113 147h0m-462 165h0m471 -259h0m28 70h0m-125 -88h0m-385 140h0m368 41h0m-131 55h0m114 -289h0m-370 112h0m-88 127h0m155 -161h0m538 87h0m-625 -2h0m-72 -87h0m703 94h0m-532 165h0m429 -268h0m-557 186h0m214 -382h0m347 270h0m-97 -29h0m202 64h0m-176 -25h0m-426 -60h0m151 -366h0m-258 512h0m654 -132h0m-646 -14h0m713 161h0m-107 -108h0m-204 -110h0m232 -13h0m-436 314h0m490 -374h0m-733 71h0m111 122h0m470 6h0m-561 63h0m672 -68h0m-203 42h0m219 -210h0m-79 122h0m92 187h0m-90 -189h0m-543 -7h0m578 -66h0m55 -55h0m-225 49h0m129 75h0m110 -147h0m-37 197h0m-301 23h0m273 -284h0m-661 148h0m230 274h0m447 -170h0m-826 41h0m386 -49h0m-394 -155h0m885 300h0m-880 -81h0m705 -164h0m30 244h0m-193 -251h0m-440 -86h0m479 100h0m309 130h0m-220 -117h0m-397 174h0m331 -3h0m-17 -171h0m-466 -41h0m-125 191h0m653 -189h0m90 147h0m71 -13h0m-567 -45h0m-187 -158h0m371 250h0m448 -241h0m-818 -11h0m-54 262h0m711 -142h0m-237 -29h0m336 8h0m-659 259h0m3 -158h0m406 40h0m235 -55h0m24 -108h0m-36 101h0m103 46h0m-344 106h0m94 -245h0m-377 255h0m610 -121h0m-260 62h0m-586 -261h0m469 43h0m-165 296h0m-55 -71h0m641 -252h0m-749 43h0m118 294h0m-19 -127h0m585 149h0m-285 -315h0m-467 -79h0m150 179h0m361 -88h0m-344 232h0m271 -245h0m244 134h0m-777 26h0m830 -90h0m0 -124h0m-152 41h0m-617 306h0m142 -219h0m640 -104h0m-393 44h0m235 -45h0m-654 -23h0m455 29h0m285 -178h0m88 339h0m-66 -121h0m-75 34h0m-126 -54h0m-428 206h0m401 28h0m77 -43h0m-100 -196h0m63 33h0m-201 309h0m444 -367h0m-150 -2h0m-375 318h0m535 -322h0m-631 113h0m-31 140h0m-57 -207h0m770 147h0m-511 151h0m142 -188h0m268 9h0m-45 -63h0m129 177h0m20 -58h0m-102 -183h0m-798 -48h0m618 234h0m230 99h0m-84 -150h0m33 138h0m-360 -429h0m466 325h0m-250 -183h0m-467 234h0m347 24h0m283 -241h0m-74 59h0m-55 -5h0m-11 24h0m119 -78h0m-444 97h0m-85 100h0m590 64h0m-474 20h0m398 -167h0m-106 -139h0m-421 249h0m-19 -87h0m-198 -205h0m442 52h0m-218 176h0m511 -49h0m-716 -196h0m296 395h0m79 -572h0m-385 185h0m739 175h0m-461 214h0m189 -314h0m294 128h0m-822 33h0m894 82h0m-611 -59h0m238 -175h0m146 -19h0m-468 82h0m696 76h0m-676 -73h0m656 -142h0m-762 351h0m720 -344h0m-564 308h0m428 -174h0m173 227h0m38 31h0m-624 -125h0m488 -72h0m-326 140h0m-160 23h0m-92 -193h0m63 140h0m501 -103h0m121 -251h0m-432 122h0m250 45h0m85 -20h0m41 3h0m-635 27h0m511 7h0m20 -37h0m-534 19h0m458 -64h0m172 94h0m-556 64h0m21 -65h0m109 212h0m23 -426h0m77 404h0m150 -252h0m-466 127h0m32 -77h0m692 162h0m-72 -149h0m19 -110h0m-796 -35h0m239 239h0m30 135h0m550 -12h0m-448 -452h0m-408 303h0m44 -226h0m568 104h0m-272 278h0m394 -116h0m13 -122h0m-22 56h0m-485 25h0m526 -385h0m8 271h0m-383 272h0m-401 -135h0m509 -178h0m354 -57h0m-570 223h0m502 -319h0m35 226h0m-695 218h0m468 -280h0m288 238h0m-519 -318h0m-91 265h0m200 83h0m294 -238h0m-149 115h0m4 -143h0m-87 24h0m-546 151h0m670 -155h0m178 97h0m-35 -169h0m-790 -3h0m894 243h0m-5 20h0m-875 -342h0m791 183h0m-244 -52h0m123 -44h0m-54 59h0m-656 170h0m776 -145h0m-363 -165h0m446 431h0m-322 -49h0m78 -60h0m-390 -130h0m-43 -24h0m612 -93h0m-262 59h0m174 24h0m-12 198h0m-526 -80h0m469 -153h0m-356 152h0m500 -28h0m-500 51h0m336 15h0m-36 -175h0m135 -63h0m-330 155h0m-216 -81h0m201 69h0m-81 93h0m490 -54h0m-727 -203h0m20 -38h0m738 119h0m54 270h0m-153 -272h0m178 131h0m-819 -232h0m771 46h0m-457 349h0m422 -217h0m58 48h0m-177 -151h0m-269 -124h0m-386 84h0m497 53h0m43 75h0m220 52h0m-510 -67h0m-207 233h0m847 -79h0m-358 -224h0m284 -27h0m-181 61h0m-500 7h0m723 -90h0m-410 31h0m372 -9h0m-138 76h0m-313 242h0m392 -22h0m96 -110h0m-140 -16h0m-299 -399h0m267 272h0m47 51h0m-468 145h0m538 -124h0m-189 -92h0m-366 185h0m147 -18h0m-79 -70h0m477 -51h0m-127 36h0m226 106h0m-120 -51h0m-794 47h0m383 -202h0m375 86h0m-195 25h0m251 -124h0m79 370h0m-78 -293h0m-824 122h0m842 -91h0m-57 23h0m-781 130h0m338 91h0m-105 -232h0m67 229h0m-138 -40h0m610 -133h0m-49 -83h0m-232 -72h0m405 263h0m-215 -253h0m16 53h0m70 7h0m1 53h0m-769 117h0m831 -241h0m-658 39h0m425 60h0m123 -120h0m-302 288h0m-358 -325h0m209 333h0m596 -112h0m-122 -3h0m-630 -191h0m594 94h0m167 223h0m-175 -228h0m-19 -2h0m-643 -96h0m732 -2h0m-190 67h0m292 -78h0m-453 -73h0m-198 221h0m324 -36h0m357 195h0m-706 -108h0m448 -106h0m266 -64h0m-484 -106h0m-149 362h0m524 -182h0m-535 197h0m-101 -48h0m660 -182h0m-246 228h0m-342 -154h0m-52 -8h0m311 211h0m-357 21h0m729 -156h0m30 105h0m-267 -128h0m-376 130h0m579 -295h0m-61 143h0m-43 -150h0m-334 353h0m302 -302h0m15 -35h0m-80 215h0m211 -43h0m-401 138h0m-285 -6h0m-161 -83h0m452 110h0m413 -331h0m-239 53h0m30 -20h0m-436 85h0m482 -3h0m-607 -160h0m779 29h0m-138 318h0m-605 -271h0m138 150h0m-71 -37h0m-16 -43h0m-21 205h0m475 -253h0m-3 145h0m202 -137h0m-297 115h0m244 -41h0m-485 -28h0m194 -86h0m42 34h0m298 -196h0m-108 227h0m-438 44h0m304 -60h0m-332 59h0m162 130h0m412 -222h0m80 234h0m-324 -202h0m-536 -90h0m533 84h0m179 53h0m126 -143h0m35 234h0m-638 -77h0m348 30h0m163 2h0m-22 -22h0m-497 79h0m542 -168h0m1 116h0m-262 -25h0m-361 112h0m48 -130h0m165 34h0m395 -23h0m-324 -277h0m-213 268h0m-20 -19h0m51 23h0m-290 101h0m810 -171h0m-93 109h0m-5 -78h0m-179 132h0m225 -41h0m-597 54h0m510 -98h0m-62 -3h0m127 125h0m-733 -49h0m284 -83h0m577 -144h0m-72 160h0m-106 -110h0m229 176h0m-105 -218h0m-24 196h0m-617 -13h0m367 -134h0m-63 17h0m177 12h0m244 121h0m-789 -206h0m-114 9h0m714 86h0m-239 -213h0m294 314h0m-498 9h0m602 164h0m-813 -386h0m781 145h0m-142 -44h0m213 -73h0m-257 47h0m-653 210h0m156 -183h0m669 53h0m-241 -59h0m-515 275h0m600 -260h0m34 73h0m-395 -28h0m583 159h0m-743 -228h0m608 -81h0m101 208h0m-101 -207h0m73 153h0m-312 190h0m183 -223h0m-580 -92h0m-123 255h0m253 -114h0m49 -36h0m522 -80h0m-161 234h0m-509 50h0m456 -227h0m295 281h0m-128 -185h0m-95 -126h0m223 -62h0m-2 281h0m-652 -101h0m42 64h0m152 -485h0m443 543h0m-490 57h0m429 -181h0m-47 132h0m17 -190h0m-603 24h0m398 -60h0m191 95h0m-640 158h0m737 -147h0m-416 -131h0m183 0h0m49 92h0m199 53h0m-60 -76h0m-336 -84h0m-323 49h0m528 67h0m-42 107h0m-24 -189h0m-411 50h0m543 1h0m-699 -146h0m631 114h0m-179 -36h0m244 72h0m-91 -52h0m-119 67h0m-160 212h0m-138 -205h0m-227 224h0m744 -215h0m-485 183h0m598 24h0m32 -138h0m-403 -187h0m109 191h0m-337 18h0m546 -125h0m-119 41h0m-25 -27h0m199 56h0m-37 -23h0m-152 -65h0m69 75h0m-497 135h0m-3 -25h0m503 -169h0m-501 147h0m-22 -130h0m494 40h0m92 155h0m50 -38h0m-236 -264h0m111 -7h0m31 39h0m-22 116h0m-306 -127h0m129 23h0m-112 245h0m315 -262h0m-796 167h0m589 -108h0m-585 123h0m799 -174h0m-564 67h0m296 173h0m-400 20h0m-129 -84h0m625 -163h0m137 23h0m-496 3h0m169 -217h0m176 242h0m-600 69h0m563 -157h0m329 327h0m-290 -231h0m67 -71h0m140 -16h0m-171 15h0m-487 133h0m697 -191h0m-683 246h0m602 -107h0m-59 -154h0m-567 321h0m617 -229h0m-53 83h0m143 -186h0m-538 370h0m497 -222h0m-541 87h0m523 -55h0m-27 -66h0m-119 -27h0m107 40h0m-119 -48h0m76 111h0m172 29h0m-894 4h0m587 -137h0m-25 -32h0m72 128h0m-435 -12h0m604 -10h0m-614 25h0m615 13h0m-394 -257h0m484 356h0m-615 -30h0m-14 10h0m582 -250h0m-613 262h0m656 24h0m-851 72h0m801 -202h0m-49 -88h0m-17 48h0m-8 -19h0m82 -96h0m-341 43h0m-312 52h0m597 -32h0m-219 -31h0m318 244h0m-162 -299h0m-286 -229h0m211 478h0m-652 -43h0m698 -35h0m-130 116h0m-159 -360h0m-239 280h0m662 -99h0m-63 -10h0m-13 168h0m155 -45h0m-125 -173h0m128 193h0m-235 -193h0m-422 255h0m20 -186h0m103 -58h0m-43 75h0m19 233h0m58 -102h0m116 -191h0m260 10h0m-91 61h0m-681 242h0m368 -32h0m-200 -240h0m80 4h0m438 -29h0m94 78h0m-801 88h0m652 -209h0m227 -63h0m-463 313h0m360 -303h0m-503 224h0m104 -55h0m448 -94h0m-140 219h0m123 -219h0m-793 -55h0m843 7h0m-420 295h0m-192 -158h0m621 194h0m-285 -276h0m213 101h0m125 85h0m-51 -256h0m-197 79h0m168 -48h0m-140 80h0m-144 -34h0m-361 94h0m538 -98h0m-49 10h0m-94 39h0m-37 166h0m60 -209h0m79 54h0m231 85h0m-510 136h0m-350 -371h0m-59 257h0m551 -24h0m-383 -12h0m191 -135h0m-282 281h0m550 -167h0m61 -143h0m-628 -87h0m705 181h0m-226 66h0m309 163h0m-303 -70h0m-274 -19h0m648 -54h0m-396 101h0m-447 19h0m555 -118h0m139 -119h0m-200 93h0m143 -27h0m-645 -208h0m776 217h0m-187 93h0m107 -161h0m-70 -3h0m95 84h0m-571 -66h0m686 75h0m-108 -47h0m-797 49h0m280 32h0m623 -233h0m-24 -19h0m-86 187h0m-666 -128h0m223 289h0m236 -65h0m-293 -146h0m-82 -4h0m603 -47h0m38 -48h0m-582 235h0m-272 6h0m544 -209h0m-401 -6h0m747 255h0m-755 -254h0m127 247h0m-96 -69h0m609 -122h0m68 -100h0m-38 56h0m-248 87h0m-487 -192h0m-33 34h0m219 127h0m546 195h0m-215 -258h0m-41 32h0m300 277h0m-732 -369h0m598 181h0m-424 52h0m-9 30h0m485 -72h0m-338 -286h0m-417 341h0m717 -56h0m-170 -142h0m365 159h0m-381 -81h0m175 -69h0m-480 77h0m35 -13h0m-90 146h0m-12 -178h0m103 213h0m336 -202h0m-181 79h0m490 56h0m-609 -93h0m493 178h0m-94 -226h0m99 225h0m-268 -70h0m286 -196h0m-11 24h0m-601 50h0m-148 -144h0m87 94h0m640 113h0m23 -294h0m-249 154h0m-294 268h0m523 -139h0m-87 -9h0m-546 -88h0m-114 297h0m738 -220h0m-610 111h0m82 -105h0m463 -85h0m-672 -81h0m514 146h0m-271 85h0m553 -238h0m-123 76h0m-455 214h0m8 -21h0m436 -164h0m-50 173h0m54 -170h0m-528 167h0m88 -149h0m-3 99h0m-23 -58h0m-14 126h0m398 -329h0m-140 93h0m311 21h0m-500 294h0m467 -260h0m42 39h0m-522 84h0m630 33h0m-650 53h0m336 -216h0m180 65h0m-82 -71h0m46 102h0m-71 -145h0m241 162h0m-139 -58h0m95 -170h0m-603 276h0m422 -115h0m21 -83h0m-329 112h0m-386 62h0m74 -256h0m84 174h0m399 -105h0m78 40h0m81 17h0m-294 203h0m337 -115h0m-332 -16h0m270 -47h0m-385 213h0m144 -1h0m-190 -27h0m-127 -256h0m365 181h0m-122 -183h0m205 31h0m-559 -80h0m684 81h0m-614 252h0m598 -194h0m81 46h0m-519 -5h0m574 45h0m-714 106h0m581 -182h0m-425 65h0m204 -381h0m208 236h0m-610 277h0m457 -280h0m-416 166h0m109 -106h0m473 -12h0m76 -304h0m-628 527h0m672 -205h0m-168 -90h0m-237 124h0m204 -16h0m264 48h0m33 61h0m-67 -234h0m-568 85h0m132 -183h0m260 150h0m239 122h0m-646 -64h0m544 -124h0m-221 114h0m-374 -4h0m477 -4h0m105 59h0m6 1h0m-178 -20h0m-488 -117h0m266 293h0m223 -255h0m-93 80h0m222 35h0m131 109h0m-704 -192h0m557 73h0m-180 -36h0m280 -18h0m26 214h0m-71 -314h0m0 148h0m-96 -89h0m-79 53h0m2 100h0m-376 -106h0m552 47h0m-206 -132h0m107 30h0m-38 193h0m-236 -101h0m383 4h0m-91 -127h0m-20 -30h0m146 6h0m-64 61h0m-592 25h0m338 -80h0m230 266h0m-72 -223h0m-334 21h0m-278 -139h0m849 248h0m-288 -5h0m-107 -144h0m280 115h0m-517 59h0m523 -56h0m109 24h0m-921 37h0m240 -100h0m471 -46h0m71 -3h0m-554 42h0m-219 83h0m770 -24h0m-431 -49h0m-172 -76h0m378 96h0m223 36h0m-488 27h0m-23 86h0m114 50h0m-130 -180h0m215 -110h0m-417 -79h0m608 87h0m-369 138h0m579 -27h0m-205 -177h0m32 21h0m-208 6h0m437 170h0m-500 145h0m-46 -288h0m317 12h0m26 -26h0m-113 207h0m233 -72h0m-580 21h0m9 -64h0m-266 124h0m65 -286h0m-43 25h0m41 -40h0m604 115h0m227 299h0m-613 -140h0m418 -90h0m97 -74h0m76 -87h0m-118 206h0m-37 -124h0m79 242h0m-500 45h0m417 -260h0m-371 36h0m-304 -138h0m404 -239h0m383 281h0m-405 132h0m137 -17h0m-547 -145h0m195 153h0m599 -88h0m-389 95h0m435 13h0m-317 -119h0m115 -7h0m184 82h0m-22 40h0m-357 -382h0m467 415h0m-200 -124h0m62 59h0m-67 30h0m-539 -113h0m31 205h0m325 48h0m-439 -347h0m176 227h0m-3 15h0m427 -64h0m179 -144h0m-170 159h0m-561 -318h0m750 360h0m-711 -95h0m88 170h0m4 -86h0m485 -5h0m34 -25h0m-352 185h0m183 -251h0m26 -58h0m264 346h0m-248 -297h0m63 7h0m141 -92h0m-320 293h0m-304 -6h0m144 78h0m417 -194h0m-677 -129h0m14 11h0m662 115h0m-154 75h0m-381 74h0m-267 -110h0m764 -100h0m-522 28h0m406 -62h0m-182 188h0m158 -167h0m167 80h0m-625 -78h0m383 -2h0m-326 31h0m481 35h0m-63 -83h0m-609 -80h0m-23 10h0m249 152h0m584 189h0m-557 -132h0m412 -63h0m-171 21h0m-254 63h0m178 100h0m406 -328h0m-292 35h0m-289 188h0m381 -177h0m-10 -18h0m275 169h0m-320 -116h0m-300 29h0m105 -183h0m-161 214h0m474 -83h0m-189 91h0m6 56h0m-353 -98h0m653 222h0m-134 -247h0m149 -74h0m-403 -125h0m280 106h0m-30 105h0m-394 19h0m316 -28h0m176 105h0m118 71h0m-54 -266h0m-438 -103h0m-262 418h0m11 -219h0m-67 -122h0m164 297h0m509 -449h0m-146 233h0m49 25h0m-92 -21h0m222 3h0m94 213h0m-653 -89h0m93 172h0m360 -201h0m67 -50h0m-754 -102h0m43 -35h0m288 119h0m263 -16h0m-331 168h0m-277 147h0m813 -64h0m-221 -201h0m-429 78h0m551 -110h0m-531 167h0m617 -82h0m-443 -109h0m444 -14h0m82 316h0m-32 -7h0m-704 -49h0m11 -242h0m660 -40h0m-710 -37h0m521 227h0m150 -65h0m-97 -140h0m80 109h0m-109 -117h0m115 79h0m-745 -96h0m613 53h0m-292 93h0m-141 -20h0m686 74h0m-622 72h0m553 -229h0m-41 160h0m-116 -113h0m118 113h0m-608 -96h0m-169 120h0m628 -177h0m-452 70h0m713 -122h0m-605 244h0m355 -172h0m123 30h0m-505 217h0m14 -107h0m605 2h0m-513 157h0m-88 -152h0m45 118h0m379 -163h0m131 -58h0m-180 -70h0m35 96h0m-455 -70h0m-138 -90h0m142 165h0m392 -101h0m19 7h0m120 89h0m-493 135h0m-99 -157h0m646 -100h0m-542 239h0m209 -183h0m-82 -146h0m440 91h0m-715 327h0m378 -302h0m270 119h0m132 102h0m-257 -183h0m120 74h0m-122 125h0m-94 -233h0m91 14h0m254 214h0m-655 -93h0m106 -102h0m273 139h0m120 -26h0m-35 -13h0m-578 -114h0m118 93h0m400 -82h0m-339 290h0m518 -98h0m-450 97h0m491 6h0m-595 -170h0m635 63h0m-208 -170h0m19 -95h0m99 224h0m-437 142h0m333 -356h0m-110 110h0m188 55h0m-95 0h0m-30 -136h0m-11 43h0m-664 135h0m270 108h0m596 34h0m-686 -250h0m686 -109h0m-845 12h0m-25 214h0m223 -96h0m320 83h0m369 7h0m-77 -85h0m-124 35h0m-456 -17h0m563 -12h0m-795 -136h0m568 71h0m307 127h0m-599 44h0m-194 -272h0m306 -38h0m456 80h0m-169 131h0m99 32h0m-342 -381h0m359 346h0m-706 -170h0m565 107h0m85 -96h0m139 15h0m-644 294h0m550 -92h0m-587 -76h0m590 19h0m-553 7h0m-92 -96h0m262 301h0m328 -319h0m77 5h0m-721 -67h0m800 407h0m-283 -310h0m94 7h0m1 14h0m147 -84h0m-615 162h0m106 -91h0m371 99h0m-722 27h0m375 -46h0m68 -91h0m469 145h0m-193 -30h0m186 34h0m-783 -196h0m652 133h0m-765 60h0m557 -169h0m307 153h0m-882 -189h0m574 163h0m139 -159h0m-218 312h0m426 -318h0m-123 73h0m-14 106h0m15 -26h0m-16 153h0m-306 -494h0m325 261h0m-383 -155h0m178 125h0m207 26h0m-93 15h0m-281 92h0m347 -54h0m-701 -166h0m723 210h0m107 43h0m-185 -139h0m-141 -32h0m245 198h0m-167 -186h0m-358 174h0m484 -133h0m40 228h0m-89 -332h0m-178 51h0m-557 164h0m868 135h0m11 -366h0m-334 72h0m209 39h0m-50 5h0m122 -62h0m-126 104h0m-461 -2h0m301 77h0m-464 -297h0m521 211h0m113 -120h0m15 85h0m-660 -108h0m709 117h0m23 214h0m-165 -110h0m19 -153h0m-251 295h0m-252 -281h0m411 154h0m-551 -213h0m269 205h0m427 -93h0m122 -31h0m-60 50h0m-135 53h0m-263 -42h0m-173 1h0m697 61h0m-254 -129h0m180 97h0m-22 -99h0m-352 237h0m376 4h0m67 -9h0m-874 -85h0m393 -274h0m371 154h0m-726 -118h0m69 8h0m152 321h0m508 -230h0m-505 189h0m459 -179h0m-75 -25h0m-28 -1h0m229 -67h0m-223 70h0m217 -54h0m71 227h0m-616 -123h0m522 -65h0m-61 44h0m-51 -6h0m48 20h0m-519 4h0m622 225h0m-720 -8h0m571 -161h0m-373 188h0m-62 -126h0m144 -18h0m267 44h0m-489 -140h0m589 53h0m96 26h0m-403 -170h0m-238 83h0m301 -20h0m87 -31h0m167 103h0m-390 -2h0m259 115h0m145 -211h0m-718 282h0m436 -156h0m345 -206h0m-506 -3h0m-138 138h0m391 116h0m-277 121h0m521 -354h0m-9 317h0m-208 -247h0m78 104h0m153 28h0m-820 -236h0m-66 254h0m766 -107h0m-633 218h0m-47 3h0m101 -232h0m236 58h0m-254 72h0m720 -44h0m-550 169h0m575 -121h0m-255 -200h0m-108 129h0m100 -120h0m-651 197h0m231 30h0m565 -110h0m-485 199h0m552 -364h0m-557 122h0m448 185h0m-161 -232h0m44 -35h0m141 54h0m-780 -85h0m269 194h0m444 -115h0m61 46h0m37 32h0m-707 -200h0m155 176h0m641 64h0m17 -200h0m-646 307h0m580 -285h0m-351 10h0m-232 254h0m554 -278h0m59 292h0m-9 -311h0m25 299h0m-45 -273h0m14 312h0m-95 -153h0m4 -75h0m-49 75h0m-156 -142h0m-479 -84h0m-92 307h0m260 -123h0m-228 -142h0m665 133h0m185 177h0m-111 -203h0m-693 -143h0m217 280h0m398 -230h0m114 -26h0m-783 15h0m892 5h0m-87 32h0m-785 -47h0m100 62h0m701 296h0m-221 -287h0m73 67h0m-328 -64h0m8 -69h0m215 223h0m-155 -324h0m-432 327h0m913 -28h0m-850 -237h0m720 199h0m62 -160h0m-556 38h0m-38 124h0m422 -120h0m152 67h0m-556 115h0m477 -37h0m-455 40h0m-146 -168h0m577 129h0m42 -64h0m-341 113h0m414 -109h0m-148 162h0m-499 -172h0m628 -25h0m-161 -13h0m-655 -67h0m687 76h0m-151 -32h0m59 207h0m-320 -53h0m-78 -92h0m442 -66h0m59 -9h0m147 -20h0m-404 -128h0m259 213h0m-560 -74h0m575 137h0m-383 159h0m-95 -199h0m366 -68h0m-428 130h0m482 -135h0m6 21h0m-83 -24h0m286 -59h0m-50 177h0m-723 -211h0m449 126h0m12 -45h0m-534 -39h0m-24 243h0m676 -166h0m27 23h0m20 -15h0m180 197h0m-141 -302h0m-537 291h0m603 -226h0m81 334h0m-655 -231h0m639 146h0m-889 -52h0m463 -180h0m231 19h0m104 92h0m-505 -56h0m389 -40h0m22 86h0m-656 206h0m238 -131h0m95 -79h0m-116 132h0m109 65h0m10 -200h0m-329 -169h0m590 69h0m-527 -55h0m502 58h0m154 248h0m-33 -125h0m-367 181h0m339 -275h0m122 39h0m-827 -124h0m879 366h0m-601 -135h0m133 -329h0m-186 224h0m17 38h0m314 -128h0m-16 32h0m-390 241h0m523 -233h0m122 -15h0m-279 4h0m11 119h0m-111 34h0m-31 129h0m397 -173h0m-67 -169h0m167 279h0m5 -293h0m-195 63h0m118 32h0m-130 57h0m-25 133h0m-9 -213h0m233 128h0m-220 -127h0m-4 2h0m-108 75h0m-424 -97h0m256 202h0m-9 99h0m-274 -18h0m421 -265h0m-519 -64h0m765 134h0m-77 -33h0m-613 240h0m370 -11h0m-76 -176h0m341 -66h0m-428 134h0m75 -158h0m-328 -76h0m860 219h0m-331 -79h0m-488 -176h0m-41 37h0m348 370h0m-4 -355h0m445 18h0m58 283h0m-60 -134h0m-299 -125h0m296 11h0m-209 35h0m-240 -91h0m526 288h0m-63 -256h0m-742 -74h0m87 133h0m347 -33h0m242 68h0m-485 121h0m590 111h0m-199 -327h0m-525 36h0m712 -70h0m-109 173h0m29 5h0m-157 -86h0m-367 74h0m482 17h0m-188 36h0m-480 128h0m-31 26h0m120 -288h0m548 85h0m67 -74h0m-90 -6h0m-56 1h0m291 -84h0m-211 -3h0m-605 -39h0m769 227h0m-92 -105h0m28 84h0m-271 -101h0m-474 -100h0m636 131h0m89 80h0m-18 -46h0m-534 152h0m552 -108h0m-780 24h0m770 -67h0m-364 149h0m-323 -327h0m250 143h0m-66 112h0m370 -160h0m149 94h0m-44 41h0m72 -132h0m-702 170h0m613 -198h0m-208 0h0m335 -26h0m-402 329h0m-434 -328h0m878 281h0m-618 -71h0m438 -127h0m-295 96h0m251 -104h0m135 101h0m-117 -76h0m118 32h0m-300 -68h0m272 241h0m-539 -160h0m671 103h0m-122 -70h0m-39 4h0m7 -71h0m-487 87h0m412 -63h0m-389 2h0m-106 -21h0m514 -77h0m-644 -58h0m699 122h0m67 -53h0m-753 -100h0m163 186h0m674 107h0m-867 -87h0m601 -129h0m-494 287h0m517 -37h0m-433 -98h0m33 68h0m515 -82h0m-409 170h0m413 -170h0m-719 -198h0m572 73h0m239 157h0m22 -196h0m-328 -58h0m62 130h0m60 -12h0m93 97h0m-499 69h0m290 -183h0m-330 147h0m661 12h0m-88 -168h0m-563 269h0m-228 -309h0m222 199h0m554 114h0m-536 18h0m393 -441h0m248 315h0m-202 -35h0m-609 -194h0m614 205h0m-723 75h0m805 -80h0m-560 -28h0m386 50h0m262 4h0m-169 -139h0m67 25h0m-238 139h0m-418 -185h0m338 285h0m305 -230h0m-64 197h0m-323 -254h0m381 -245h0m-767 451h0m793 -163h0m25 -30h0m-314 272h0m50 -185h0m283 -16h0m-678 -43h0m264 -179h0m358 269h0m-781 -169h0m589 88h0m105 32h0m69 -16h0m-526 48h0m364 -90h0m-496 -89h0m588 123h0m165 -102h0m-786 -44h0m851 279h0m-230 -96h0m-631 -162h0m254 391h0m-169 -303h0m770 159h0m-211 -208h0m-432 215h0m412 -80h0m-423 136h0m610 35h0m-378 -139h0m250 -65h0m-701 -125h0m799 194h0m-748 -216h0m534 -100h0m-188 -84h0m-161 357h0m567 -88h0m-236 8h0m-575 -64h0m759 185h0m-216 -52h0m304 173h0m-645 -126h0m524 -57h0m-677 -157h0m653 219h0m34 -36h0m-707 -184h0m86 111h0m626 81h0m-241 22h0m64 -83h0m94 54h0m112 30h0m-609 -15h0m703 116h0m-643 -110h0m314 -32h0m200 57h0m-590 -137h0m8 120h0m529 -84h0m71 70h0m-111 -133h0m80 236h0m-477 -9h0m304 -197h0m246 -20h0m-535 191h0m476 -143h0m-113 -15h0m-108 92h0m-266 88h0m-1 -7h0m555 -134h0m-596 36h0m196 -251h0m247 257h0m-686 94h0m578 -118h0m18 -67h0m-306 159h0m244 -35h0m97 -106h0m267 204h0m-485 -23h0m-241 -158h0m-179 169h0m690 -190h0m-307 289h0m345 -360h0m66 165h0m-503 44h0m528 -143h0m-815 136h0m242 -78h0m145 30h0m91 -328h0m-219 330h0m413 -124h0m184 141h0m45 27h0m-708 -95h0m-183 125h0m173 -134h0m213 245h0m237 -281h0m83 9h0m-8 88h0m-629 180h0m727 -268h0m-419 -41h0m398 143h0m-519 101h0m487 -259h0m-735 -19h0m540 117h0m131 -35h0m-380 49h0m454 -358h0m79 403h0m-700 -120h0m715 -40h0m-504 341h0m-316 -361h0m498 194h0m176 -156h0m77 135h0m-636 156h0m651 -182h0m-558 17h0m-63 -54h0m-99 228h0m198 -106h0m-108 -133h0m-99 -137h0m230 409h0m615 -115h0m-191 -70h0m-529 -19h0m558 -408h0m70 419h0m-663 -99h0m596 113h0m-56 -104h0m94 80h0m47 -133h0m-475 -35h0m330 106h0m3 3h0m156 263h0m-158 -274h0m131 -58h0m-151 -1h0m-482 122h0m646 197h0m-840 -117h0m784 -86h0m-363 150h0m479 -99h0m-56 -176h0m62 169h0m-658 -23h0m539 29h0m-209 -153h0m307 150h0m-322 -159h0m283 135h0m-848 63h0m797 -163h0m-733 -107h0m208 236h0m508 -118h0m-547 198h0m591 -289h0m-830 10h0m100 333h0m728 -208h0m0 2h0m-710 -142h0m655 138h0m-508 66h0m359 -134h0m-228 -4h0m-208 49h0m-186 125h0m284 -33h0m556 -81h0m-197 -61h0m153 254h0m47 -136h0m-273 107h0m-473 -310h0m-10 265h0m741 -226h0m-730 -35h0m692 174h0m-759 -149h0m162 266h0m-183 -55h0m711 -125h0m82 56h0m4 -2h0m-240 -14h0m-284 119h0m443 -166h0m194 125h0m-308 -112h0m-611 132h0m772 -128h0m-490 117h0m493 -69h0m-58 -45h0m-435 130h0m329 -169h0m133 129h0m-220 -143h0m-282 112h0m618 -154h0m-420 341h0m459 -55h0m-439 -401h0m126 156h0m-311 163h0m116 -148h0m452 -47h0m5 11h0m-721 14h0m160 99h0m-69 22h0m161 179h0m516 -134h0m-356 -42h0m378 -158h0m-472 -240h0m418 424h0m-142 34h0m-487 -94h0m452 -41h0m136 87h0m-181 -132h0m-103 6h0m-537 -43h0m746 24h0m-334 235h0m154 16h0m196 -165h0m85 -91h0m-209 42h0m-105 138h0m306 -184h0m36 -37h0m-28 46h0m-459 -7h0m372 168h0m-599 127h0m-159 -69h0m811 -174h0m67 297h0m-623 -172h0m15 -60h0m592 47h0m26 185h0m-725 -129h0m148 89h0m606 -90h0m-333 -181h0m-307 161h0m277 -117h0m157 67h0m-530 -62h0m686 247h0m-173 -207h0m-636 -180h0m354 384h0m136 -133h0m221 -96h0m-321 -232h0m77 430h0m227 -13h0m119 6h0m-872 -68h0m776 -86h0m117 40h0m-137 -19h0m-142 -73h0m-396 11h0m561 68h0m-72 -124h0m-462 82h0m451 -58h0m-327 62h0m541 -144h0m-470 -256h0m-271 349h0m424 -13h0m-191 270h0m421 -335h0m-175 48h0m-58 196h0m223 -180h0m40 -50h0m-186 28h0m120 97h0m-107 -79h0m113 96h0m-556 -48h0m388 -37h0m293 122h0m-358 -33h0m-468 150h0m158 -148h0m579 152h0m-282 -130h0m-263 45h0m516 -77h0m16 -122h0m-414 8h0m240 12h0m135 112h0m-711 -228h0m658 130h0m-166 -41h0m-179 270h0m241 -234h0m115 100h0m-391 -87h0m-77 96h0m114 161h0m226 -259h0m207 -31h0m-132 17h0m147 12h0m34 -94h0m48 276h0m-821 -301h0m52 90h0m145 54h0m-282 102h0m243 -59h0m623 163h0m-466 -158h0m-313 -199h0m805 232h0m-741 -157h0m535 88h0m86 -40h0m38 83h0m-450 -103h0m-274 276h0m159 -156h0m445 -30h0m14 16h0m-199 -105h0m329 -59h0m-62 -171h0m-506 391h0m-64 -71h0m351 128h0m147 -182h0m61 6h0m-551 10h0m-219 -115h0m566 114h0m-558 128h0m850 -248h0m59 200h0m-635 24h0m6 11h0m525 -168h0m-611 196h0m502 -181h0m123 14h0m-55 75h0m-112 81h0m-422 -113h0m346 -13h0m-161 -221h0m131 323h0m-376 -123h0m662 66h0m-587 -5h0m384 -78h0m-8 109h0m204 -152h0m-750 -90h0m165 189h0m-177 -177h0m809 16h0m-862 18h0m833 24h0m-457 190h0m387 -32h0m-627 -111h0m122 261h0m-23 -129h0m656 -7h0m-85 -95h0m-193 101h0m-355 50h0m114 -234h0m-13 132h0m362 18h0m-478 125h0m374 -203h0m-241 272h0m261 -288h0m-274 -16h0m-126 90h0m601 -123h0m-25 107h0m-86 55h0m-266 -356h0m220 259h0m-688 -83h0m573 39h0m308 250h0m-177 -126h0m9 -103h0m-719 322h0m686 -103h0m175 -99h0m-865 68h0m779 -111h0m19 -116h0m-668 5h0m646 156h0m-102 -116h0m25 33h0m199 267h0m-39 -374h0m-132 88h0m52 80h0m-602 93h0m-34 -207h0m659 11h0m106 -64h0m-106 78h0m-59 113h0m48 -15h0m-258 145h0m7 -275h0m-346 7h0m503 53h0m-127 -60h0m-274 94h0m548 -102h0m-187 210h0m-651 -18h0m796 -156h0m-107 7h0m66 232h0m-51 -298h0m49 109h0m-575 -19h0m642 -112h0m-336 51h0m325 37h0m-63 231h0m85 -203h0m-565 27h0m415 -119h0m-44 41h0m151 22h0m-626 126h0m458 -141h0m221 295h0m-406 -466h0m282 167h0m-505 65h0m53 165h0m-175 -327h0m160 196h0m474 -155h0m-201 171h0m-451 168h0m787 -324h0m45 195h0m-70 -195h0m-279 265h0m196 -96h0m-526 -67h0m594 -103h0m-158 56h0m24 14h0m213 -90h0m-435 -185h0m336 172h0m-668 61h0m352 20h0m399 130h0m-158 -22h0m117 12h0m-728 -184h0m-117 13h0m287 207h0m-40 65h0m479 -282h0m-624 -38h0m88 203h0m56 15h0m587 -77h0m-61 24h0m-7 -1h0m-487 115h0m643 -37h0m-638 133h0m528 -278h0m-474 262h0m505 -143h0m-766 -226h0m593 83h0m-663 176h0m95 116h0m407 -276h0m247 83h0m-252 -14h0m311 189h0m-154 -280h0m-650 351h0m33 -398h0m820 -4h0m-166 79h0m77 70h0m33 35h0m-551 -7h0m434 -73h0m-607 -139h0m-15 399h0m740 -445h0m-165 160h0m-448 201h0m189 -37h0m436 -220h0m-763 -29h0m775 65h0m-281 138h0m-281 11h0m403 -111h0m-47 113h0m-102 -144h0m-337 62h0m728 118h0m-83 -57h0m-572 -16h0m538 -88h0m-678 -65h0m690 52h0m-37 82h0m-771 -135h0m716 299h0m122 -303h0m-697 57h0m89 60h0m285 62h0m-239 48h0m-276 -216h0m782 132h0m-359 48h0m275 -32h0m-565 178h0m698 -214h0m-11 -107h0m-101 -7h0m-39 276h0m98 -132h0m-562 -26h0m258 -297h0m-415 150h0m616 98h0m-413 83h0m1 137h0m-110 -228h0m588 239h0m90 25h0m-117 -266h0m55 111h0m-656 -183h0m285 174h0m-241 -73h0m615 -92h0m93 179h0m-686 -76h0m628 -52h0m-540 273h0m599 -328h0m-107 153h0m-765 -142h0m172 77h0m19 18h0m525 -68h0m156 -40h0m-192 88h0m115 -7h0m-117 -41h0m20 -10h0m-627 -60h0m695 142h0m-756 113h0m807 -138h0m107 172h0m-820 81h0m706 -262h0m64 248h0m-777 14h0m584 -257h0m-411 216h0m489 -104h0m78 -62h0m-629 -17h0m508 -18h0m-91 -32h0m-389 67h0m46 89h0m-13 92h0m363 -114h0m206 -86h0m-593 32h0m-52 117h0m508 -99h0m-166 -91h0m94 85h0m186 -85h0m9 100h0m-171 66h0m-128 -175h0m-142 96h0m35 123h0m452 68h0m-177 -327h0m-558 15h0m761 183h0m-239 -179h0m-654 228h0m653 -212h0m-651 194h0m506 -190h0m-31 6h0m248 33h0m4 -103h0m-485 146h0m-68 -45h0m381 87h0m-300 -93h0m493 -42h0m-80 125h0m33 -79h0m-57 -24h0m51 46h0m62 -354h0m-625 289h0m676 87h0m-603 -17h0m311 -103h0m175 53h0m177 -63h0m-233 65h0m-93 227h0m-271 -35h0m-207 -305h0m692 23h0m-266 57h0m211 50h0m112 228h0m103 -121h0m-226 -123h0m-689 144h0m415 65h0m-164 -126h0m569 -76h0m-96 -76h0m92 75h0m-295 -21h0m-286 74h0m129 -145h0m-98 333h0m351 -238h0m-342 151h0m-109 -137h0m39 22h0m417 118h0m-480 -178h0m66 98h0m385 -99h0m-185 104h0m306 -102h0m-325 298h0m32 -172h0m-171 -47h0m512 -38h0m-44 -3h0m-527 73h0m639 -55h0m-61 5h0m12 29h0m-75 -69h0m-184 238h0m-242 -89h0m-104 -123h0m597 -122h0m-708 -8h0m687 275h0m-584 -183h0m13 38h0m-184 137h0m909 30h0m-206 -178h0m-168 -35h0m279 -40h0m-290 32h0m-523 203h0m45 -269h0m877 228h0m-539 -56h0m-381 62h0m755 -191h0m80 95h0m-411 -226h0m51 161h0m59 245h0m-391 -255h0m727 -86h0m-29 69h0m-73 103h0m102 -148h0m-277 85h0m26 -11h0m36 192h0m-36 -11h0m-556 114h0m724 -50h0m-783 -301h0m889 211h0m-71 -130h0m-552 123h0m546 -76h0m-795 -136h0m514 202h0m357 5h0m-511 152h0m246 -122h0m218 -211h0m-789 90h0m735 -41h0m-199 188h0m151 -88h0m-684 -201h0m775 131h0m-800 -116h0m767 78h0m-799 166h0m664 -171h0m-326 44h0m246 -56h0m106 101h0m-46 -74h0m-368 177h0m11 96h0m-288 -136h0m899 -14h0m-34 -196h0m-787 -48h0m343 -56h0m277 218h0m-141 2h0m-288 172h0m462 -104h0m-374 105h0m368 12h0m128 -290h0m-58 96h0m-637 207h0m237 16h0m41 -17h0m198 -84h0m252 -35h0m-278 -66h0m-528 -177h0m533 189h0m255 -169h0m-803 371h0m788 -339h0m61 231h0m-269 -163h0m-540 256h0m64 -77h0m228 107h0m22 -195h0m471 43h0m-771 -203h0m306 171h0m-352 174h0m763 -317h0m-42 122h0m-408 188h0m482 -361h0m-9 31h0m-634 262h0m471 -163h0m-331 -121h0m282 247h0"/><path stroke="#2ca02c" d="M460 609h0m-299 -116h0m726 -70h0m79 -25h0m-547 23h0m238 151h0m-242 -132h0m213 -305h0m358 134h0m-666 297h0m610 -525h0m-530 350h0m-233 101h0m-10 18h0m764 -484h0m-6 208h0m141 392h0m-56 -27h0m-312 -288h0m181 28h0m61 -100h0m-668 348h0m130 -206h0m302 55h0m120 -132h0m-141 17h0m-47 180h0m-466 -4h0m-4 15h0m754 -69h0m-606 -136h0m120 138h0m567 -138h0m-282 43h0m-546 121h0m895 -7h0m-265 -173h0m210 138h0m-283 -58h0m-324 17h0m398 84h0m-205 -324h0m358 356h0m-691 87h0m718 -419h0m-431 241h0m311 -11h0m-163 40h0m-384 -141h0m562 34h0m-429 141h0m12 -7h0m-136 -154h0m7 154h0m-158 -13h0m770 -396h0m-79 268h0m10 21h0m199 100h0m-130 -16h0m73 180h0m-356 -291h0m222 106h0m-578 -128h0m583 26h0m-726 145h0m737 -39h0m83 -114h0m-44 59h0m-76 -12h0m-118 16h0m-413 -57h0m749 198h0m-100 -128h0m-545 -27h0m21 -3h0m360 -39h0m218 114h0m-856 -176h0m793 149h0m-516 89h0m584 -249h0m-690 106h0m502 -27h0m240 172h0m-117 -74h0m-125 -137h0"/><path stroke="#d62728" d="M392 380h0m494 -129h0m-82 7h0m-390 179h0m475 -10h0m-735 91h0m164 -257h0m33 102h0m624 -28h0m47 111h0m-793 -219h0m-70 264h0m782 -104h0"/><path stroke="#ff7f0e" d="M906 192h0m25 216h0m-79 -225h0m220 72h0m-853 -27h0m829 326h0m-623 -98h0m-200 -236h0m522 87h0m-191 304h0m316 -304h0m-231 -205h0m-315 242h0m554 -87h0m141 336h0m-251 -221h0m-345 160h0m26 -163h0m345 -72h0m-14 44h0m-198 258h0m-352 -391h0m224 259h0m413 -134h0m156 261h0m-593 -14h0m75 -234h0m13 25h0m173 194h0m-39 -281h0m339 27h0m-45 26h0m-87 16h0m-30 180h0m215 25h0m-2 -331h0m-5 339h0m-195 -275h0m39 37h0m-469 95h0m278 143h0m101 -76h0m43 -204h0m-667 194h0m635 -174h0m137 86h0m-772 73h0m544 -168h0m222 73h0m-373 215h0m156 -292h0m-272 169h0m11 -71h0m-169 -194h0m-26 21h0m622 136h0m-24 -30h0m-418 165h0m377 19h0m-246 -335h0m415 251h0m77 22h0m-80 -113h0m61 287h0m-295 -320h0m108 96h0m86 34h0m-465 182h0m215 -319h0m-449 -80h0m616 203h0m-68 70h0m-362 90h0m541 -11h0m-269 -284h0m157 64h0m106 -53h0m-40 95h0m96 207h0m-632 -212h0m637 224h0m-93 -100h0m124 -47h0m-28 -211h0m-48 67h0m-209 26h0m181 -12h0m-138 -3h0m197 112h0m-606 108h0m345 -213h0m-248 279h0m-94 -180h0m673 47h0m-312 -164h0m-438 38h0m652 -52h0m-555 275h0m100 -342h0m235 104h0m-27 -36h0m228 121h0m-494 192h0m-55 -185h0m-187 -214h0m626 116h0m-67 4h0m-71 22h0m220 -18h0m128 112h0m-738 -110h0m538 203h0m171 15h0m-283 -227h0m-329 28h0m-15 42h0m-162 -194h0m457 250h0m182 -24h0m120 -132h0m16 -52h0m54 233h0m-45 131h0m-94 -178h0m-680 -213h0m734 137h0m-652 151h0m679 -247h0m-412 311h0m-163 -119h0m15 -70h0m592 76h0m-269 -59h0m-99 17h0m-75 -274h0m-201 237h0m-100 -68h0m75 58h0m-153 -147h0m496 152h0m252 -60h0m-456 1h0m15 293h0m402 -218h0m-614 -62h0m2 9h0m58 39h0m689 255h0m-252 -125h0m-363 -42h0m-53 -76h0m450 13h0m-21 -75h0m-416 91h0m-175 -214h0m558 83h0m-108 159h0m252 -119h0m-168 12h0m69 -23h0m150 42h0m-166 -38h0m-34 -47h0m-371 262h0m-213 85h0m730 -214h0m-23 -25h0m-477 208h0m535 -171h0m29 11h0m-489 -37h0m352 -137h0m22 -9h0m124 368h0m-628 -238h0m42 158h0m373 -209h0m181 89h0m-371 -80h0m-407 -88h0m290 359h0m-336 -94h0m776 -122h0m-32 42h0m77 -149h0m-286 148h0m-344 -3h0m668 189h0m-11 -353h0m-463 344h0m439 -230h0m-522 2h0m532 205h0m13 -317h0m-643 98h0m560 10h0m-54 -82h0m-424 189h0m412 -112h0m63 -24h0m-319 245h0m463 -135h0m-76 -75h0m-112 -127h0m4 65h0m-297 119h0m224 -118h0m-509 263h0m415 -148h0m77 -100h0m218 273h0m-159 -294h0m-241 257h0m89 -259h0m287 113h0m-546 62h0m532 73h0m14 15h0m-124 -181h0m-553 -88h0m223 87h0m-366 73h0m730 -224h0m-106 193h0m152 -96h0m-606 13h0m351 -65h0m148 -1h0m-597 -74h0m-27 25h0m479 329h0m392 -77h0m-678 -99h0m581 -86h0m-345 269h0m243 -263h0m-649 -112h0m-71 309h0m812 -203h0m-803 164h0m865 143h0m-182 -267h0m-272 155h0m363 -105h0m-512 105h0m359 -71h0m-629 76h0m410 -327h0m244 134h0m-133 -27h0m89 24h0m256 286h0m-867 -108h0m549 -97h0m-547 99h0m845 -212h0m-117 149h0m-453 27h0m287 -161h0m-491 -88h0m-51 424h0m240 -72h0m655 -98h0m-912 -208h0m715 72h0m-540 191h0m576 -76h0m-372 -170h0m247 200h0m-477 97h0m95 -137h0m-75 -79h0m94 226h0m521 -154h0m-447 -63h0m566 91h0m-178 -14h0m-383 -47h0m-153 17h0m722 102h0m-765 78h0m214 -190h0m277 -92h0m-348 169h0m460 -37h0m106 -1h0m-571 -45h0m415 31h0m215 43h0m-306 -82h0m-404 -15h0m624 -129h0m0 117h0m-632 11h0m534 66h0m188 22h0m-214 -32h0m-659 199h0m762 -296h0m-101 96h0m80 15h0m-704 155h0m830 -141h0m-537 146h0m535 -146h0m-574 -24h0m-277 -201h0m699 135h0m103 227h0m-160 -164h0m65 11h0m94 -186h0m-91 98h0m145 139h0m-47 -267h0m-108 156h0m-296 -105h0m-403 -56h0m820 27h0m-147 0h0m-450 251h0m427 -171h0m23 115h0m-572 -99h0m212 264h0m491 -385h0m-475 380h0m433 -12h0m-45 -174h0m-335 167h0m371 -148h0m54 -177h0m-587 220h0m564 -201h0m-585 278h0m551 21h0m-101 -225h0m9 -96h0m-187 50h0m362 159h0m-462 105h0m300 -129h0m66 16h0m39 -10h0m-653 -72h0m672 218h0m-168 -211h0m130 -34h0m-344 -251h0m-188 278h0m474 10h0m143 164h0m-196 -252h0m-297 232h0m-223 -158h0m23 48h0m636 -141h0m-140 66h0m86 83h0m-118 -131h0m202 -63h0m-540 387h0m-149 -244h0m510 30h0m-430 61h0m224 113h0m-94 29h0m237 -304h0m-405 85h0m673 71h0m-712 58h0m162 -94h0m-76 69h0m125 89h0m-123 -99h0m510 -68h0m-405 -132h0m-120 302h0m620 -337h0m-73 148h0m-197 107h0m-342 -108h0m13 0h0m514 -91h0m-512 185h0m-223 -266h0m491 152h0m297 -116h0m-585 196h0m513 -344h0m-505 361h0m310 -142h0m-223 58h0m-5 -62h0m-207 249h0m642 -160h0m-726 -209h0m703 235h0m-346 41h0m153 -177h0m115 65h0m-626 -152h0m19 0h0m-48 30h0m726 100h0m-45 87h0m-601 -168h0m147 103h0m599 -110h0m1 326h0m-35 -283h0m-654 147h0m691 0h0m-233 -150h0m-555 -90h0m312 397h0m489 -153h0m-301 -129h0m-511 281h0m811 -43h0m-68 -137h0m51 172h0m-733 -294h0m-106 333h0m805 -45h0m-261 -291h0m161 -49h0m81 146h0m-531 62h0m343 -110h0m-138 2h0m290 40h0m-492 -23h0m414 38h0m-78 -42h0m104 -53h0m-169 22h0m-103 262h0m-66 -292h0m335 127h0m-26 -34h0m172 190h0m-89 -236h0m-498 142h0m477 -482h0m87 283h0m-127 142h0m-9 -16h0m-376 197h0m538 -45h0m-600 -119h0m-235 181h0m782 -193h0m-90 -92h0m-538 20h0m610 -32h0m-86 96h0m-470 -9h0m477 -66h0m56 41h0m-478 -2h0m556 41h0m-206 -112h0m-496 -2h0m656 2h0m-761 -82h0m754 77h0m120 180h0m-802 -241h0m671 158h0m-513 83h0m18 -35h0m491 -40h0m-509 38h0m-33 -54h0m589 -44h0m-600 23h0m-171 -151h0m730 187h0m-672 163h0m392 -284h0m-212 184h0m-129 -127h0m701 216h0m-374 -271h0m-495 172h0m894 -221h0m-721 105h0m750 -102h0m-224 92h0m-704 115h0m577 69h0m66 -225h0m-375 259h0m275 -69h0m-448 -281h0m181 230h0m358 -134h0m-377 80h0m564 33h0m-338 -111h0m381 -68h0m-580 253h0m618 44h0m-183 -193h0m-560 219h0m314 -253h0m-289 -2h0m635 79h0m-146 -128h0m-143 158h0m126 -113h0m-456 101h0m440 -99h0m73 -2h0m62 127h0m51 -133h0m-284 9h0m-98 -310h0m-17 497h0m-27 91h0m409 -195h0m-398 -209h0m-53 207h0m45 217h0m-105 -141h0m256 -85h0m371 87h0m-164 -49h0m132 46h0m-296 -144h0m179 114h0m-483 51h0m269 -194h0m-389 85h0m618 36h0m41 -32h0m-203 -41h0m-349 152h0m259 -52h0m-286 -30h0m601 -153h0m-692 224h0m-95 -263h0m597 110h0m3 -37h0m178 140h0m11 184h0m-42 -227h0m-559 -27h0m560 26h0m-575 -3h0m-12 0h0m565 -52h0m-595 34h0m29 7h0m474 -34h0m-64 -52h0m148 106h0m-418 -77h0m-365 189h0m873 -275h0m-160 194h0m-68 -132h0m178 1h0m-2 126h0m-114 -72h0m-18 -34h0m112 91h0m-364 -260h0m-184 269h0m-82 84h0m130 -113h0m-226 213h0m713 -265h0m-22 108h0m124 14h0m-474 71h0m415 -246h0m-83 281h0m-80 -238h0m141 66h0m16 41h0m-550 86h0m-14 -56h0m-101 111h0m-39 13h0m579 -228h0m19 -37h0m-577 -16h0m-66 -100h0m49 82h0m572 71h0m-102 -37h0m-356 94h0m-44 -88h0m-180 148h0m756 -102h0m-68 -27h0m-287 -185h0m370 178h0m-68 -14h0m-354 -5h0m-128 50h0m441 -44h0m-427 40h0m521 -4h0m-374 247h0m419 -113h0m105 -20h0m-666 -38h0m187 -290h0m351 188h0m-291 238h0m-233 -12h0m104 -312h0m544 6h0m-745 191h0m28 -76h0m87 -6h0m351 -69h0m-464 52h0m-20 219h0m593 -132h0m-132 -48h0m-239 225h0m439 -292h0m-637 191h0m625 -83h0m-796 -165h0m68 -55h0m311 79h0m520 -40h0m-108 -174h0m-560 464h0m308 -230h0m140 -15h0m-294 323h0m320 -195h0m-583 -131h0m469 87h0m128 -35h0m156 220h0m-131 -315h0m-751 238h0m724 -140h0m91 78h0m-126 -28h0m-477 -20h0m63 17h0m430 -60h0m46 -93h0m163 400h0m-111 -315h0m-551 115h0m575 -135h0m-620 65h0m602 -53h0m29 118h0m-578 -16h0m284 56h0m104 -189h0m56 127h0m-423 -26h0m600 -147h0m6 212h0m-113 -50h0m-10 -71h0m-482 144h0m487 -97h0m-770 -117h0m703 94h0m175 213h0m-879 -48h0m829 -225h0m-581 113h0m96 209h0m423 -262h0m40 211h0m-27 -237h0m-161 15h0m-87 97h0m-284 -44h0m624 177h0m-17 -309h0m-15 168h0m-588 -11h0m381 -5h0m171 13h0m27 -78h0m-131 12h0m-308 251h0m-224 -276h0m503 0h0m-219 -297h0m-171 414h0m415 -107h0m133 76h0m-371 -110h0m463 183h0m-101 -109h0m-576 46h0m7 109h0m465 -199h0m-8 6h0m-539 110h0m632 -36h0m4 -17h0m-801 64h0m508 -161h0m-237 212h0m368 -227h0m-577 -61h0m433 70h0m-95 284h0m500 -136h0m-321 70h0m274 -228h0m-10 212h0m32 -269h0m-93 108h0m-710 -115h0m757 124h0m-259 -60h0m-349 122h0m222 176h0m391 -1h0m-580 -167h0m664 47h0m-874 -226h0m572 251h0m-561 -265h0m351 187h0m88 -131h0m119 29h0m-93 -4h0m-239 148h0m-169 -339h0m704 205h0m-100 228h0m-467 -114h0m153 152h0m-120 -89h0m8 -35h0m551 139h0m-26 -292h0m13 -26h0m-287 182h0m-408 117h0m783 -327h0m-641 214h0m641 -214h0m-322 257h0m296 -272h0m-620 279h0m181 58h0m-281 -246h0m700 -102h0m-242 105h0m-628 130h0m584 50h0m104 19h0m-277 -372h0m359 210h0m-186 142h0m-338 -103h0m429 -90h0m-599 -113h0m319 203h0m-51 -62h0m321 -41h0m-514 4h0m433 12h0m-208 278h0m518 -141h0m-65 -180h0m-14 43h0m-13 95h0m15 -175h0m-276 167h0m176 -155h0m-88 159h0m148 -179h0m-130 87h0m57 -60h0m126 96h0m-444 51h0m-37 196h0m-290 -247h0m68 237h0m415 -298h0m83 35h0m169 74h0m-5 -83h0m-793 189h0m661 -253h0m131 -142h0m-548 268h0m-4 -4h0m-29 135h0m390 -144h0m224 -95h0m-812 -18h0m359 -16h0m432 170h0m-744 -182h0m636 133h0m197 87h0m-181 -148h0m-17 76h0m-422 83h0m217 108h0m383 -132h0m37 -190h0m-352 162h0m161 -73h0m62 3h0m-176 -30h0m-124 -210h0m429 144h0m-43 -9h0m-306 54h0m-364 132h0m660 9h0m-442 -256h0m-376 62h0m218 123h0m582 -51h0m-42 14h0m58 -78h0m-347 59h0m-502 203h0m388 80h0m-134 -45h0m-258 -42h0m565 -214h0m229 125h0m-663 -286h0m163 347h0m235 -49h0m-519 58h0m612 -81h0m-60 -113h0m258 19h0m-748 -92h0m732 350h0m-413 48h0m383 -229h0m-704 -169h0m598 115h0m-240 222h0m-358 -342h0m747 45h0m-204 53h0m210 7h0m-92 112h0m65 -16h0m-348 174h0m449 -340h0m-634 138h0m576 47h0m-178 -109h0m-409 128h0m-142 -218h0m67 116h0m74 78h0m-10 6h0m367 -57h0m-17 -48h0m-217 -72h0m452 89h0m66 131h0m-59 -176h0m-354 -179h0m215 275h0m-286 -205h0m-406 308h0m177 -141h0m361 100h0m370 0h0m-185 -141h0m-720 151h0m289 -101h0m385 166h0m-43 -219h0m100 120h0m-468 18h0m311 -132h0m197 27h0m-131 -26h0m116 113h0m10 -60h0m-143 89h0m-187 131h0m-139 -205h0m563 206h0m-394 -321h0m220 20h0m179 147h0m-232 -148h0m-373 141h0m-20 -37h0m-91 -73h0m388 133h0m-377 3h0m85 -34h0m95 -68h0m325 173h0m-255 -365h0m-140 411h0m447 -271h0m-205 2h0m377 148h0m-149 -20h0m158 28h0m-42 -206h0m-67 164h0m-162 42h0m67 -199h0m-168 156h0m-254 40h0m554 -26h0m57 7h0m38 83h0m-389 -213h0m313 296h0m-844 -133h0m772 -405h0m-591 293h0m-190 141h0m909 -52h0m-21 -217h0m-355 64h0m-330 69h0m-197 117h0m71 120h0m163 -218h0m565 -66h0m-540 111h0m664 37h0m-28 -226h0m-40 14h0m-441 263h0m159 7h0m-569 -57h0m166 41h0m675 -80h0m-568 58h0m-276 16h0m67 99h0m632 -256h0m-60 -41h0m-341 301h0m-244 -376h0m642 309h0m-279 10h0m290 1h0m-25 -231h0m211 132h0m-83 -143h0m-120 88h0m165 -154h0m-297 128h0m-309 33h0m-176 194h0m322 -142h0m-123 -70h0m459 119h0m-21 -205h0m7 131h0m-104 -91h0m121 95h0m-740 85h0m394 -105h0m321 7h0m15 -178h0m-222 38h0m-435 -74h0m750 84h0m-540 207h0m95 -97h0m437 -232h0m-109 238h0m-126 -106h0m244 -2h0m-536 163h0m634 36h0m-1 18h0m-402 -215h0m-135 1h0m-11 -60h0m-82 223h0m251 -161h0m-285 123h0m374 10h0m173 -42h0m-252 -105h0m103 210h0m-51 -189h0m45 -6h0m-450 62h0m284 206h0m-51 -428h0m367 267h0m-82 -71h0m-288 134h0m438 -41h0m-295 91h0m242 -134h0m-14 28h0m-513 61h0m214 -190h0m265 147h0m-707 -199h0m408 345h0m237 -175h0m-2 -51h0m1 -17h0m-175 -31h0m103 137h0m155 -109h0m-617 -5h0m-125 -92h0m720 115h0m-590 -14h0m118 139h0m622 40h0m-876 105h0m852 -105h0m-829 -297h0m-61 295h0m922 -59h0m-42 -19h0m-237 -134h0m-30 32h0m-415 26h0m182 -145h0m236 168h0m177 42h0m-570 -56h0m-33 -11h0m372 -67h0m140 113h0m106 -155h0m7 55h0m-540 197h0m496 -270h0m-763 217h0m822 -145h0m-712 -58h0m699 170h0m-536 61h0m434 -136h0m112 -6h0m-422 270h0m388 -179h0m-727 -196h0m114 122h0m490 -28h0m-90 -28h0m118 79h0m-293 232h0m353 -597h0m41 405h0m-373 66h0m-24 118h0m369 -253h0m-489 126h0m-41 -94h0m415 -58h0m-460 66h0m454 -99h0m-389 73h0m6 62h0m543 -28h0m-133 -107h0m152 8h0m-520 311h0m533 -332h0m84 184h0m-680 -46h0m465 -8h0m-702 -145h0m832 29h0m-62 118h0m-79 -53h0m28 75h0m-14 -97h0m100 231h0m-122 -294h0m15 47h0m-147 71h0m-240 191h0m474 -256h0m124 188h0m-120 -188h0m-796 193h0m62 -287h0m643 108h0m-85 -210h0m299 367h0m-85 -132h0m64 94h0m-269 -19h0m208 -67h0m-474 -55h0m257 83h0m-611 74h0m-11 29h0m760 -66h0m70 -88h0m-724 236h0m-2 6h0m265 -277h0m-322 -140h0m726 169h0m32 -200h0m-520 336h0m611 67h0m-708 -188h0m508 15h0m-154 110h0m-259 25h0m545 -243h0m-76 170h0m-34 -181h0m120 33h0m-143 46h0m4 78h0m204 -168h0m-590 370h0m352 -287h0m191 -59h0m-153 147h0m82 -22h0m-2 17h0m-477 -112h0m-86 114h0m7 -32h0m497 52h0m-383 -66h0m49 246h0m256 -299h0m-615 -64h0m520 294h0m84 -79h0m206 -108h0m-839 160h0m810 -122h0m-528 202h0m-33 -169h0m-23 -12h0m282 160h0m17 0h0m-321 -310h0m285 20h0m-101 -70h0m423 213h0m-120 -59h0m-249 -223h0m262 142h0m124 -27h0m-385 -239h0m457 428h0m-89 -133h0m71 123h0m-57 -162h0m-134 61h0m-49 -68h0m-377 264h0m513 -473h0m-53 280h0m-13 -38h0m65 -236h0m38 373h0m-41 -5h0m-62 -93h0m-190 -37h0m201 26h0m-569 -8h0m552 32h0m165 254h0m-169 -266h0m-530 -5h0m708 108h0m-595 42h0m477 -132h0m-195 156h0m-521 -274h0m663 178h0m214 46h0m-437 -144h0m-85 99h0m-129 93h0m-119 67h0m661 -256h0m-553 117h0m370 -13h0m-326 -52h0m502 53h0m-175 -129h0m226 -15h0m-273 39h0m329 -59h0m-279 35h0m45 -9h0m22 49h0m-701 148h0m456 -172h0m302 122h0m-574 -2h0m656 -62h0m-147 19h0m-459 139h0m-11 -120h0m-99 -138h0m676 137h0m-477 204h0m375 -223h0m73 7h0m-484 95h0m550 -131h0m-316 -62h0m-259 169h0m-9 -35h0m-118 153h0m64 -216h0m161 243h0m332 -248h0m92 32h0m-248 168h0m-179 -173h0m-184 -36h0m659 -70h0m-167 -3h0m96 92h0m-762 99h0m283 120h0m-175 -370h0m151 198h0m-181 174h0m624 -247h0m69 10h0m-121 -34h0m-273 294h0m57 -61h0m-296 29h0m631 -203h0m-208 -89h0m-23 156h0m297 -205h0m-122 49h0m6 260h0m-175 -252h0m-545 -44h0m768 138h0m-572 -31h0m662 64h0m-329 -1h0m341 13h0m-50 -97h0m-248 -48h0m-379 64h0m475 -34h0m-662 174h0m883 -52h0m-213 -120h0m-435 206h0m208 -505h0m-43 579h0m-124 -155h0m103 136h0m79 -272h0m327 65h0m107 -138h0m-202 91h0m20 -76h0m-148 276h0m-16 -52h0m330 -35h0m-734 139h0m543 -198h0m187 -164h0m-580 252h0m339 -3h0m82 -44h0m-17 -65h0m147 -94h0m-201 55h0m-172 251h0m438 -128h0m-655 11h0m647 171h0m-652 -190h0m519 -60h0m-258 -61h0m-443 -104h0m476 116h0m-300 65h0m573 -99h0m103 198h0m-20 -243h0m-194 63h0m-646 -94h0m94 342h0m683 -126h0m-666 11h0m82 -61h0m447 15h0m-429 177h0m456 -25h0m173 -26h0m-259 -45h0m-640 -26h0m910 -203h0m-668 130h0m431 -54h0m-425 101h0m-84 51h0m158 129h0m390 -353h0m63 136h0m-98 -62h0m-413 138h0m568 -173h0m58 -58h0m-296 -106h0m-319 370h0m602 -54h0m-810 158h0m-58 -153h0m32 169h0m653 -337h0m109 133h0m-15 -7h0m128 56h0m-447 110h0m-133 -2h0m-271 -352h0m781 202h0m-581 133h0m-263 -73h0m775 -404h0m-226 408h0m-447 109h0m306 -433h0m239 157h0m48 82h0m-555 -92h0m-4 -14h0m253 -99h0m396 126h0m-745 -145h0m739 216h0m-116 -87h0m162 37h0m-197 -11h0m166 93h0m-5 -104h0m27 -34h0m-396 310h0m497 -116h0m-105 -173h0m18 -52h0m-158 57h0m16 56h0m-313 227h0m416 -287h0m-521 198h0m20 -124h0m622 132h0m-460 -208h0m-33 156h0m267 -76h0m80 49h0m-426 146h0m202 -177h0m-474 189h0m350 -133h0m-142 -18h0m549 -168h0m21 -147h0m-410 15h0m-16 322h0m448 -236h0m-591 271h0m413 -213h0m30 23h0m-612 -72h0m690 180h0m-141 -101h0m210 117h0m51 32h0m-675 -111h0m507 79h0m-336 101h0m273 -155h0m-698 117h0m711 -161h0m-514 68h0m231 193h0m452 -37h0m-718 -1h0m697 51h0m-34 -363h0m-425 337h0m392 -480h0m-517 338h0m-129 140h0m626 -232h0m-364 253h0m295 -199h0m79 -20h0m-190 -89h0m-338 137h0m652 30h0m-202 -132h0m-343 -8h0m191 -25h0m-235 119h0m338 69h0m-263 -219h0m312 58h0m-494 43h0m603 -60h0m80 131h0m-547 176h0m-93 -216h0m625 -159h0m-357 181h0m-226 39h0m450 -28h0m-547 -75h0m663 -88h0m-405 -229h0m-390 181h0m34 361h0m592 -240h0m-333 -17h0m470 253h0m-96 -253h0m-268 252h0m271 -336h0m-2 -3h0m66 92h0m-508 32h0m506 64h0m-68 -80h0m53 -4h0m-530 191h0m519 -177h0m-315 -314h0m90 453h0m284 -114h0m-564 50h0m658 29h0m-173 -21h0m-493 -2h0m584 -74h0m-18 -187h0m55 54h0m-181 142h0m4 -5h0m5 -8h0m70 -124h0m-567 129h0m322 61h0m116 -105h0m-103 -25h0m-269 174h0m446 -124h0m133 82h0m-574 -149h0m564 140h0m58 -176h0m-447 -204h0m-266 467h0m675 -73h0m-329 -119h0m-132 270h0m117 -289h0m316 52h0m-749 -138h0m692 186h0m-3 -163h0m14 193h0m-47 8h0m103 171h0m-282 -72h0m233 -331h0m-726 19h0m180 206h0m342 -99h0m-590 166h0m265 60h0m515 -122h0m-7 -89h0m-192 172h0m-421 46h0m36 -46h0m625 -176h0m-330 -49h0m-98 302h0m416 -173h0m-124 -157h0m-99 254h0m195 -99h0m-16 -48h0m69 6h0m-673 193h0m357 -250h0m-272 75h0m36 75h0m291 57h0m-418 41h0m46 -50h0m680 -285h0m-806 363h0m641 -283h0m-469 90h0m563 20h0m-686 -137h0m162 171h0m554 -178h0m-136 57h0m68 29h0m-564 6h0m618 209h0m-17 -158h0m60 -169h0m-599 245h0m446 -80h0m179 36h0m-57 -77h0m-38 36h0m18 158h0m-578 -180h0m638 -144h0m-442 312h0m-292 24h0m420 -212h0m-448 204h0m-112 -122h0m280 -92h0m553 -77h0m-44 144h0m-366 -89h0m-330 248h0m672 -137h0m-417 -57h0m351 -47h0m-162 -46h0m15 93h0m-425 -102h0m523 36h0m138 -2h0m-28 47h0m-68 19h0m-502 8h0m68 49h0m353 -85h0m215 -69h0m-30 114h0m-499 195h0m410 -284h0m183 -80h0m-471 208h0m-183 -22h0m502 16h0m58 -16h0m-77 -75h0m99 -88h0m-586 270h0m-102 -240h0m699 -3h0m-302 154h0m354 4h0m-46 -70h0m-836 120h0m730 61h0m135 -305h0m-73 74h0m-104 -70h0m13 93h0m92 -212h0m41 223h0m-216 -25h0m275 125h0m-51 -177h0m-62 117h0m102 54h0m-110 -17h0m-28 -1h0m-506 -7h0m538 129h0m-671 -327h0m633 244h0m-213 -32h0m112 -148h0m-55 13h0m309 231h0m-846 -303h0m570 82h0m116 113h0m54 -91h0m-374 76h0m456 -157h0m-151 78h0m-329 -62h0m-95 109h0m469 51h0m-193 -143h0m308 269h0m24 -321h0m-693 132h0m480 -102h0m218 255h0m-81 -105h0m-25 -137h0m-21 81h0m-311 -236h0m-388 468h0m724 -280h0m58 -59h0m-586 127h0m565 43h0m-17 -146h0m-189 27h0m-630 -52h0m710 87h0m150 261h0m-36 -350h0m-29 56h0m-703 274h0m368 -451h0m-433 111h0m746 123h0m-427 20h0m490 -114h0m-812 354h0m365 -427h0m31 353h0m203 -130h0m-366 127h0m224 -270h0m97 28h0m338 158h0m-798 -200h0m335 40h0m296 133h0m-588 -99h0m600 26h0m-72 -13h0m-1 -17h0m126 -36h0m20 -44h0m-164 79h0m-460 76h0m332 133h0m345 -300h0m-407 42h0m163 203h0m69 -63h0m-549 76h0m631 -188h0m-289 -1h0m266 41h0m37 -44h0m-157 199h0m-654 -16h0m305 -114h0m-36 78h0m450 -110h0m-637 250h0m121 -230h0m566 -24h0m-165 34h0m-428 -23h0m584 78h0m7 4h0m-644 -152h0m760 158h0m-58 -58h0m-53 49h0m-539 -62h0m-76 93h0m712 -237h0m-743 356h0m367 -305h0m195 10h0m-308 295h0m351 -145h0m-640 -218h0m198 274h0m-227 -268h0m-67 292h0m646 -234h0m196 86h0m-593 44h0m433 120h0m-108 -224h0m-14 76h0m282 42h0m-454 187h0m-223 -286h0m615 59h0m-62 -67h0m-512 44h0m143 19h0m-55 86h0m-18 43h0m-34 -136h0m546 40h0m-72 9h0m-385 180h0m-205 -316h0m85 225h0m699 -267h0m-912 9h0m889 202h0m-542 -106h0m-107 64h0m362 -92h0m238 36h0m-33 43h0m-152 -111h0m120 53h0m-505 202h0m31 -58h0m-22 -26h0m-203 -263h0m307 406h0m509 -369h0m-40 30h0m-685 54h0m587 -41h0m-118 14h0m152 125h0m8 139h0m-234 -199h0m313 -135h0m-331 227h0m300 -171h0m-77 79h0m-766 116h0m9 -219h0m215 111h0m257 -265h0m284 260h0m-137 43h0m-463 51h0m621 -353h0m-504 370h0m572 -236h0m-82 123h0m123 185h0m-34 -287h0m-214 49h0m229 132h0m-644 -70h0m309 -68h0m-284 128h0m610 161h0m-31 -237h0m-570 113h0m452 -165h0m-135 7h0m-202 1h0m-248 -18h0m532 33h0m38 25h0m163 242h0m-713 -586h0m-54 581h0m753 -307h0m-148 -216h0m-202 505h0m410 -44h0m-600 54h0m461 -231h0m-142 103h0m235 -193h0m-76 170h0m59 9h0m-169 -148h0m230 241h0m-905 -48h0m124 -217h0m-87 -23h0m232 278h0m-33 -135h0m-42 -26h0m711 -107h0m-85 89h0m-340 233h0m-226 -141h0m531 -6h0m-504 65h0m590 -263h0m-53 203h0m37 3h0m-95 5h0m134 14h0m-632 104h0m602 36h0m42 36h0m-418 -313h0m-300 48h0m540 191h0m37 -115h0m8 -10h0m-524 23h0m478 -28h0m-464 -66h0m-141 -90h0m258 139h0m469 -144h0m-383 316h0m-261 -210h0m625 52h0m-547 68h0m412 -145h0m93 68h0m-14 18h0m41 -104h0m19 265h0m-411 -106h0m296 -158h0m-628 260h0m664 -306h0m13 148h0m97 143h0m-165 -169h0m-627 189h0m627 -240h0m-443 187h0m300 -150h0m274 -23h0m-611 0h0m-106 217h0m622 -153h0m-16 -2h0m109 -69h0m-61 -18h0m-700 -129h0m631 138h0m178 94h0m-455 -4h0m-280 145h0m572 -169h0m-551 61h0m15 -120h0m656 -84h0m-596 86h0m656 -119h0m-12 -1h0m-528 371h0m360 -188h0m-122 -114h0m-512 -103h0m521 104h0m-516 -110h0m494 316h0m-313 -132h0m623 77h0m-200 -181h0m71 158h0m54 -109h0m-42 -62h0m-611 191h0m617 -47h0m-38 -141h0m-435 115h0m-242 -175h0m729 120h0m28 -45h0m2 135h0m-306 -113h0m195 27h0m-243 3h0m278 -101h0m-589 93h0m651 -19h0m-372 254h0m277 -306h0m-152 275h0m286 -257h0m-770 -78h0m486 188h0m-319 39h0m299 -122h0m15 63h0m264 -75h0m-36 136h0m-506 75h0m416 -147h0m-77 49h0m81 -54h0m-289 162h0m-136 -20h0m551 -197h0m-656 49h0m458 -47h0m-447 129h0m401 -110h0m290 122h0m33 86h0m-288 -202h0m-198 177h0m-421 -9h0m294 -7h0m522 -147h0m-735 -125h0m518 121h0m-219 -78h0m301 -2h0m-685 229h0m720 -68h0m-52 -91h0m120 49h0m119 -123h0m-361 171h0m232 -82h0m-506 233h0m593 -324h0m-696 89h0m377 213h0m175 -252h0m147 289h0m-636 -205h0m-13 -12h0m262 -286h0m-301 267h0m528 53h0m-527 -51h0m-168 -94h0m683 145h0m-417 87h0m529 -66h0m-565 107h0m555 -111h0m-24 17h0m-597 71h0m536 -88h0m144 15h0m-799 -203h0m567 171h0m-327 -39h0m-294 147h0m-2 -26h0m518 -174h0m-408 -87h0m736 206h0m-361 143h0m-357 -312h0m409 150h0m1 2h0m-262 25h0m432 -117h0m-639 -117h0m627 139h0m-495 23h0m55 47h0m656 105h0m-647 -78h0m78 -82h0m-250 230h0m324 -420h0m364 178h0m52 -58h0m-279 5h0m358 -43h0m-450 63h0m435 230h0m-133 -176h0m-496 166h0m325 -223h0m158 125h0m-485 126h0m599 -304h0m-40 26h0m15 199h0m-133 -138h0m-633 -179h0m679 71h0m-414 342h0m-68 -41h0m423 -231h0m113 -72h0m-389 -66h0m441 75h0m-39 181h0m-525 72h0m-77 -129h0m56 142h0m-146 -237h0m255 145h0m-136 13h0m438 -110h0m83 54h0m-499 157h0m-99 -54h0m492 -156h0m123 46h0m-256 60h0m170 -94h0m-437 101h0m453 -11h0m-18 -25h0m107 10h0m-92 -152h0m-339 -28h0m-75 308h0m588 -78h0m-103 -114h0m-394 -64h0m-216 70h0m538 -28h0m-115 -18h0m-424 190h0m192 -175h0m-194 133h0m107 49h0m440 -80h0m-258 -134h0m-39 -130h0m-203 360h0m-41 -168h0m188 261h0m-191 -168h0m716 5h0m-225 76h0m148 -200h0m9 -19h0m13 74h0m-543 218h0m-22 -45h0m433 -208h0m-332 -100h0m340 173h0m-425 61h0m537 -165h0m4 -31h0m-26 280h0m-650 17h0m551 -228h0m73 141h0m90 96h0m-813 -415h0m735 161h0m40 2h0m-124 8h0m-529 4h0m420 164h0m-60 -214h0m-300 69h0m-149 -164h0m5 1h0m604 84h0m-442 74h0m577 52h0m41 187h0m-231 -314h0m114 301h0m-29 -272h0m-558 17h0m-86 271h0m651 -173h0m-459 123h0m223 -266h0m179 27h0m144 -22h0m-192 203h0m166 -85h0m-161 32h0m-361 12h0m-163 -235h0m479 75h0m18 40h0m286 -92h0m-58 346h0m-572 -185h0m164 -252h0m71 419h0m115 -258h0m-223 97h0m485 194h0m-246 -465h0m254 423h0m-189 -223h0m-432 103h0m22 -80h0m65 -13h0m484 156h0m-173 -183h0m-383 179h0m-96 -149h0m393 110h0m-72 110h0m-332 -253h0m651 -16h0m68 141h0m-186 -52h0m-181 -91h0m-231 166h0m410 -99h0m207 86h0m-77 -155h0m47 265h0m-72 -232h0m66 258h0m-232 -281h0m225 -46h0m-52 16h0m-281 226h0m-6 -194h0m192 -2h0m-487 68h0m-59 107h0m730 -25h0m-350 38h0m-299 -64h0m473 -179h0m119 32h0m-38 135h0m-128 -88h0m192 -96h0m-28 40h0m-166 59h0m125 -6h0m118 191h0m-83 -168h0m-783 -110h0m724 -7h0m-526 174h0m262 -89h0m344 114h0m11 6h0m-161 -96h0m-5 2h0m-445 90h0m-252 203h0m633 -348h0m180 0h0m-319 283h0m-319 -222h0m336 223h0m-244 -41h0m441 -190h0m-64 -37h0m-14 161h0m71 -159h0m-410 288h0m429 -171h0m-659 -68h0m386 224h0m139 -260h0m258 93h0m-216 -124h0m141 148h0m-147 -97h0m-370 22h0m-27 15h0m33 10h0m243 183h0m-324 -215h0m601 28h0m-229 10h0m204 44h0m-156 -139h0m138 134h0m-362 -121h0m-221 267h0m568 -157h0m-708 39h0m54 134h0m314 -294h0m395 85h0m-334 -244h0m-115 477h0m-39 -140h0m328 -158h0m-330 149h0m535 -168h0m-747 -103h0m173 339h0m621 -296h0m-100 113h0m8 83h0m-583 -79h0m-101 -144h0m221 366h0m482 -295h0m-513 219h0m-96 -119h0m7 -28h0m-126 253h0m641 -255h0m-425 116h0m415 -94h0m93 5h0m-135 -87h0m-242 303h0m379 -185h0m97 -181h0m-182 189h0m-41 -91h0m117 92h0m-7 -125h0m102 -59h0m-740 62h0m246 -7h0m418 30h0m71 -98h0m-485 186h0m257 -127h0m-378 278h0m470 -322h0m-602 -33h0m558 167h0m31 45h0m-633 166h0m577 -295h0m-300 -53h0m-128 143h0m-170 -174h0m176 222h0m540 -26h0m-545 -15h0m286 -85h0m193 127h0m-9 115h0m-445 -27h0m8 -64h0m202 -341h0m194 203h0m-81 13h0m332 120h0m-4 8h0m-291 29h0m-501 -193h0m98 84h0m683 -133h0m-202 171h0m-409 -52h0m494 -55h0m80 -50h0m-9 -17h0m-660 124h0m635 -113h0m-123 163h0m-109 -106h0m165 69h0m-136 78h0m279 69h0m-18 -77h0m-64 -83h0m50 81h0m-296 25h0m-134 -434h0m465 425h0m-149 -105h0m-511 5h0m526 82h0m-62 -189h0m68 167h0m59 184h0m-833 -142h0m73 -255h0m286 21h0m-192 123h0m681 81h0m-245 65h0m-371 -89h0m545 84h0m-740 -256h0m564 99h0m308 150h0m-156 -131h0m-16 77h0m-70 -108h0m10 63h0m2 5h0m-402 203h0m-211 -381h0m189 344h0m279 -148h0m-539 55h0m235 -83h0m16 64h0m0 -13h0m564 -98h0m85 290h0m-34 -59h0m-457 -48h0m386 -208h0m-190 -4h0m106 -3h0m-528 119h0m634 1h0m-612 -50h0m531 63h0m-617 146h0m406 -163h0m-481 -188h0m704 2h0m117 198h0m-461 -47h0m229 -90h0m178 123h0m-182 -107h0m262 151h0m-407 -149h0m227 8h0m-491 49h0m536 1h0m133 89h0m-100 -74h0m-495 -23h0m590 85h0m-549 -63h0m440 21h0m-455 203h0m446 -225h0m27 220h0m-607 -246h0m85 26h0m-9 86h0m69 -105h0m250 -60h0m130 2h0m54 57h0m-15 2h0m10 -12h0m141 92h0m-73 -77h0m-20 13h0m-584 140h0m552 -192h0m71 -69h0m-89 180h0m-766 23h0m322 143h0m-297 -418h0m763 234h0m-532 -3h0m-64 6h0m355 -124h0m-9 251h0m-3 6h0m-39 -277h0m227 148h0m-186 -126h0m-260 195h0m-30 -95h0m-12 -25h0m383 116h0m-428 -136h0m-9 -12h0m552 86h0m105 -15h0m-763 -204h0m306 3h0m-344 30h0m378 -84h0m145 229h0m78 -81h0m115 125h0m-52 -76h0m107 26h0m21 -10h0m-145 -49h0m102 83h0m-74 -117h0m-546 38h0m662 52h0m-352 -75h0m439 190h0m-114 -135h0m66 -99h0m-105 83h0m129 125h0m-302 -98h0m281 -149h0m-33 153h0m-834 78h0m914 4h0m-568 -76h0m450 39h0m-99 -23h0m-419 53h0m492 -106h0m26 -35h0m-803 -54h0m281 239h0m449 -164h0m87 53h0m-109 16h0m-535 -71h0m554 14h0m198 138h0m-724 -66h0m687 28h0m-187 95h0m104 -115h0m-4 0h0m-613 -68h0m56 56h0m481 -83h0m-25 59h0m-134 -99h0m132 103h0m-40 -67h0m111 57h0m31 46h0m124 25h0m-217 -47h0m-465 -44h0m283 -66h0m-508 169h0m211 59h0m699 -78h0m-68 168h0m-70 -221h0m-780 68h0m4 -204h0m337 353h0m557 -80h0m-618 -67h0m516 -15h0m-170 -157h0m61 109h0m28 -57h0m-466 199h0m293 -201h0m-396 -31h0m722 -63h0m-595 113h0m285 -38h0m156 -8h0m-469 65h0m-115 207h0m630 -156h0m113 -185h0m-196 80h0m142 56h0m-817 74h0m196 -307h0m499 264h0m62 -388h0m70 278h0m-759 301h0m131 -92h0m701 16h0m-349 -237h0m337 163h0m-827 145h0m-71 -95h0m227 -132h0m396 -32h0m104 89h0m-377 -82h0m-142 17h0m482 170h0m150 56h0m1 -305h0m79 220h0m-89 -157h0m-7 -18h0m95 160h0m-630 11h0m518 -182h0m73 -102h0m-37 209h0m56 47h0m-43 -45h0m-238 -116h0m-606 151h0m763 -114h0m-277 218h0m93 -195h0m57 108h0m99 -40h0m-550 -46h0m715 -145h0m-828 -49h0m312 210h0m7 198h0m471 -361h0m24 297h0m-151 -305h0m86 111h0m-559 230h0m499 -204h0m103 63h0m-185 -51h0m-44 -68h0m56 37h0m102 -49h0m-580 102h0m-152 188h0m539 -96h0m-610 12h0m482 59h0m328 -268h0m27 -32h0m-48 125h0m-381 -208h0m420 154h0m59 99h0m-598 46h0m-93 -129h0m723 159h0m-287 -225h0m-442 65h0m367 68h0m-492 -197h0m-59 257h0m726 69h0m-558 -219h0m633 79h0m-592 -11h0m48 44h0m489 111h0m127 -113h0m-58 -22h0m-622 -57h0m247 200h0m-417 60h0m753 -292h0m-80 20h0m-698 120h0m773 -133h0m4 70h0m-663 -165h0m51 238h0m551 -167h0m-637 -121h0m697 183h0m25 66h0m-110 -139h0m-136 6h0m296 -38h0m-617 100h0m527 2h0m-196 1h0m323 82h0m-751 -156h0m686 117h0m10 -153h0m-665 75h0m103 162h0m645 -249h0m-241 25h0m19 109h0m-451 24h0m-74 83h0m456 -164h0m114 101h0m68 -184h0m-293 47h0m-244 222h0m258 46h0m-432 -353h0m239 396h0m-91 -201h0m635 34h0m-67 -53h0m-71 40h0m-363 154h0m497 33h0m-180 -214h0m-4 -8h0m-336 228h0m177 -151h0m244 -44h0m-497 67h0m-159 80h0m282 -387h0m467 49h0m-355 339h0m136 -277h0m-431 70h0m585 -50h0m-179 89h0m93 -65h0m85 51h0m-172 -83h0m-41 25h0m300 205h0m-184 -124h0m-129 -43h0m40 -35h0m209 -92h0m-45 26h0m-717 124h0m-22 -153h0m800 52h0m-561 179h0m-276 -225h0m259 115h0m611 -139h0m46 244h0m-923 -8h0m696 -120h0m-451 77h0m519 -66h0m-35 71h0m-503 105h0m503 -270h0m-335 356h0m499 -368h0m-94 171h0m-448 -30h0m-188 86h0m-145 -219h0m789 142h0m-421 -104h0m-380 -31h0m410 265h0m376 -211h0m-94 35h0m65 83h0m-703 -212h0m760 355h0m11 -198h0m-406 101h0m466 -19h0m-352 -156h0m95 -4h0m-567 -79h0m426 52h0m404 -37h0m-97 164h0m-164 -105h0m145 86h0m-198 -64h0m131 30h0m-716 168h0m428 35h0m-259 -49h0m664 -80h0m-385 169h0m290 -152h0m-485 -11h0m218 -366h0m305 373h0m45 -97h0m-50 35h0m-70 -31h0m-282 -183h0m452 422h0m-456 -63h0m368 -181h0m106 -103h0m-124 -214h0m-51 404h0m-18 -136h0m-101 15h0m104 55h0m-395 14h0m-233 -165h0m645 51h0m62 177h0m53 -79h0m-135 -63h0m135 89h0m-652 -56h0m50 54h0m61 90h0m507 91h0m-116 -59h0m-417 42h0m-178 -339h0m158 332h0m46 -50h0m72 123h0m467 -302h0m42 291h0m-136 -165h0m31 62h0m-342 102h0m292 -261h0m-58 -13h0m-277 -71h0m395 95h0m135 102h0m-630 12h0m246 -163h0m-392 278h0m696 -156h0m-3 -67h0m69 95h0m-56 -80h0m23 218h0m-574 -112h0m119 -64h0m374 -20h0m-357 -79h0m-28 292h0m-9 -325h0m-102 192h0m273 -181h0m-398 175h0m115 3h0m617 -20h0m-77 -129h0m-120 83h0m41 31h0m54 -29h0m-612 36h0m-178 49h0m865 -241h0m-582 222h0m298 -154h0m89 11h0m243 181h0m-84 -159h0m-547 136h0m608 -19h0m-243 17h0m64 -58h0m138 17h0m-688 -118h0m121 124h0m596 -219h0m-189 113h0m-418 124h0m263 -156h0m385 153h0m-15 -21h0m-470 119h0m151 -240h0m203 9h0m30 56h0m-127 3h0m9 -45h0m-525 167h0m208 -250h0m-202 95h0m113 121h0m-40 -89h0m-6 39h0m-158 -218h0m541 280h0m294 -29h0m-316 -118h0m-176 256h0m-245 -233h0m-143 254h0m591 -321h0m-499 286h0m283 -137h0m-348 -236h0m798 3h0m-105 -183h0m-107 297h0m-655 146h0m908 -28h0m-844 -223h0m518 151h0m-487 213h0m281 5h0m-252 -20h0m571 -187h0m125 -92h0m-205 47h0m219 29h0m-62 18h0m136 136h0m1 -14h0m-121 -79h0m99 193h0m-728 -297h0m637 84h0m-107 -19h0m166 -117h0m-66 155h0m-519 149h0m12 -109h0m138 -16h0m-172 -14h0m-255 69h0m552 -94h0m237 -8h0m-212 -111h0m176 139h0m-87 86h0m-661 -38h0m414 61h0m471 -95h0m-211 -117h0m35 219h0m113 -170h0m-45 -38h0m-778 112h0m285 12h0m-177 117h0m501 -273h0m-54 41h0m366 123h0m-580 -121h0m222 -63h0m199 147h0m-186 -62h0m50 78h0m85 -33h0m-11 -51h0m-93 12h0m114 49h0m58 -146h0m-308 -156h0m211 154h0m-663 -97h0m731 250h0m-632 147h0m683 -161h0m-595 94h0m242 -478h0m-167 325h0m-17 85h0m507 -63h0m-482 73h0m-33 -40h0m260 -113h0m172 30h0m-607 -131h0m711 127h0m-176 164h0m-59 -97h0m-293 53h0m-43 -74h0m485 169h0m-547 24h0m717 -128h0m-605 43h0m427 -103h0m111 -67h0m-685 -50h0m594 68h0m-647 272h0m774 -332h0m-50 150h0m-99 -99h0m-464 48h0m401 -50h0m-441 102h0m722 212h0m-916 -114h0m709 -232h0m70 55h0m-362 197h0m407 -217h0m-208 -15h0m-339 172h0m507 -52h0m95 190h0m-643 -85h0m375 -30h0m-226 -204h0m-315 -79h0m790 214h0m-806 179h0m664 -321h0m-104 89h0m83 159h0m-308 58h0m385 -242h0m137 87h0m-795 -202h0m288 362h0m161 -314h0m259 10h0m-187 26h0m186 19h0m-181 -59h0m205 -51h0m19 -4h0m-146 73h0m-8 -53h0m-458 196h0m1 94h0m511 -184h0m-3 81h0m57 -134h0m64 141h0m-636 7h0m380 -155h0m-492 -3h0m597 143h0m-482 -35h0m13 -18h0m511 -10h0m-82 15h0m162 -129h0m-656 109h0m568 -6h0m-708 -133h0m826 218h0m-635 -52h0m444 -8h0m-57 -73h0m138 81h0m-763 67h0m-4 0h0m881 -3h0m-184 -134h0m-628 -117h0m-4 12h0m600 104h0m-426 53h0m-74 -34h0m647 -66h0m-95 43h0m-524 49h0m40 167h0m650 -64h0m-172 82h0m46 -193h0m-53 -26h0m-330 271h0m266 -305h0m-425 73h0m386 -64h0m39 -9h0m-68 11h0m105 -52h0m-30 31h0m-195 16h0m-385 -103h0m9 4h0m787 227h0m-24 166h0m-689 -26h0m-82 -369h0m711 33h0m-34 196h0m-406 -87h0m266 -7h0m-205 -155h0m371 80h0m59 161h0m-495 -45h0m-277 -154h0m127 137h0m40 15h0m606 48h0m-233 -94h0m-343 95h0m-264 91h0m805 -113h0m-11 -28h0m-456 -7h0m146 198h0m362 -155h0m-640 -47h0m184 -91h0m423 38h0m5 73h0m-98 -47h0m-58 -55h0m-515 294h0m415 -195h0m40 -82h0m2 22h0m-211 282h0m-313 -405h0m816 259h0m-759 -167h0m35 159h0m608 -22h0m95 -185h0m-457 288h0m119 -46h0m153 -114h0m230 81h0m-201 -146h0m76 -187h0m-792 361h0m894 -11h0m-723 -125h0m179 41h0m449 23h0m-500 -115h0m-122 54h0m666 81h0m-587 -12h0m191 167h0m313 -25h0m-60 -225h0m122 -82h0m-550 325h0m505 -238h0m-40 90h0m-14 -87h0m118 -42h0m-717 -42h0m-63 -30h0m772 53h0m82 159h0m-148 -9h0m-259 -125h0m292 79h0m-635 -59h0m-166 189h0m849 -244h0m-321 6h0m-451 -70h0m343 206h0m-362 -185h0m-51 253h0m882 -42h0m-881 17h0m742 -20h0m-495 -5h0m26 51h0m-36 -75h0m-25 -33h0m665 -146h0m-732 82h0m32 199h0m-112 -308h0m537 104h0m257 285h0m-30 -162h0m-133 -109h0m-505 193h0m136 61h0m378 -132h0m89 -48h0m-9 28h0m-236 111h0m348 -85h0m-67 -92h0m-519 48h0m550 -160h0m-623 118h0m293 -75h0m-269 228h0m18 -45h0m514 -56h0m23 10h0m-541 21h0m-270 12h0m173 -95h0m250 233h0m407 -347h0m-127 6h0m-251 -194h0m-182 446h0m541 -88h0m-11 -32h0m-389 81h0m497 21h0m-846 -283h0m791 395h0m-244 -261h0m-362 204h0m399 -223h0m147 73h0m-764 -148h0m537 65h0m-207 85h0m124 -120h0m271 156h0m147 81h0m-612 95h0m336 -126h0m149 -71h0m-557 -30h0m434 -55h0m172 -53h0m-78 115h0m107 206h0m-867 -128h0m885 -10h0m-487 146h0m0 0h0m295 -208h0m-306 196h0m94 -484h0m244 201h0m59 95h0m130 116h0m-726 -184h0m502 -23h0m-498 46h0m-87 -130h0m499 92h0m154 -88h0m52 157h0m-559 25h0m636 206h0m-734 -304h0m-152 -57h0m707 150h0m99 -98h0m-241 -12h0m298 136h0m-170 -99h0m-54 145h0m193 -130h0m-672 115h0m570 -36h0m171 20h0m-652 -32h0m570 -119h0m-425 288h0m520 -97h0m-278 -168h0m137 36h0m103 84h0m-872 25h0m919 -5h0m-213 -51h0m-501 -39h0m519 60h0m-356 -186h0m338 96h0m-549 -13h0m494 163h0m-31 -83h0m277 59h0m-622 34h0m140 101h0m384 -283h0m-1 82h0m-124 -74h0m-330 284h0m456 -184h0m-95 -15h0m-268 152h0m-95 -178h0m367 -46h0m-609 -122h0m478 156h0m170 56h0m17 -74h0m-502 74h0m444 -135h0m-55 204h0m-83 -210h0m-392 143h0m-123 -75h0m227 106h0m-94 -100h0m229 -209h0m402 181h0m67 107h0m-330 -153h0m247 26h0m-191 18h0m86 60h0m-137 -25h0m-174 238h0m116 -35h0m-341 -111h0m370 -22h0m-384 -119h0m665 98h0m-20 -2h0m-415 190h0m317 -244h0m-629 -146h0m850 245h0m-83 -201h0m-55 152h0m64 190h0m-725 -19h0m12 -289h0m604 140h0m-165 -120h0m-190 -62h0m2 349h0m55 -455h0m302 94h0m-470 263h0m484 -502h0m-62 269h0m-149 279h0m242 -137h0m-508 103h0m-267 -259h0m684 108h0m-440 176h0m136 70h0m396 -182h0m-369 111h0m345 -308h0m-74 85h0m57 120h0m-8 -192h0m-727 211h0m834 -146h0m-586 138h0m295 35h0m298 -217h0m-239 99h0m-90 -63h0m178 82h0m17 43h0m-644 -217h0m572 67h0m-453 81h0m566 16h0m-79 -41h0m133 -11h0m-427 278h0m91 -474h0m91 332h0m-351 -89h0m-160 -136h0m-18 9h0m29 -32h0m764 168h0m-489 191h0m82 -127h0m-39 153h0m165 -255h0m169 -85h0m-501 117h0m697 126h0m-544 -252h0m517 197h0m-191 99h0m-494 -178h0m178 234h0m345 -268h0m-171 -37h0m-335 79h0m488 -107h0m-537 76h0m591 29h0m-43 -124h0m33 317h0m155 -314h0m-643 201h0m248 122h0m292 -160h0m-669 -202h0m497 130h0m137 -100h0m-3 149h0m-343 -236h0m453 78h0m-151 103h0m-1 16h0m-36 -24h0m-676 142h0m530 -145h0m-279 180h0m-261 -10h0m64 -286h0m485 202h0m237 17h0m-363 -277h0m227 181h0m-303 57h0m538 85h0m23 -223h0m-365 201h0m-477 -246h0m631 87h0m-86 49h0m-446 144h0m716 -242h0m-778 -20h0m457 73h0m-225 80h0m496 -30h0m-790 -99h0m806 34h0m-263 239h0m254 75h0m-226 -254h0m-495 243h0m694 -272h0m62 -80h0m-156 84h0m-5 112h0m-532 -66h0m321 -64h0m-228 174h0m-104 38h0m224 76h0m376 -233h0m-84 -22h0m-494 36h0m361 -74h0m66 24h0m271 143h0m-22 124h0m-41 -161h0m-661 -107h0m140 67h0m-208 206h0m251 25h0m-178 -264h0m489 -30h0m119 22h0m-449 270h0m542 -42h0m-239 -149h0m-97 -101h0m209 241h0m16 -195h0m89 72h0m-75 -46h0m52 -135h0m-48 135h0m99 49h0m-312 94h0m200 -172h0m-594 84h0m737 3h0m-108 -41h0m-458 -51h0m478 -24h0m-45 104h0m-647 -379h0m130 353h0m18 66h0m-12 -116h0m20 133h0m538 -154h0m-163 186h0m-432 -155h0m662 95h0m-829 -236h0m137 286h0m507 -180h0m-26 -45h0m-254 -143h0m397 133h0m1 -12h0m-175 46h0m50 38h0m68 25h0m-587 131h0m521 -166h0m-671 -99h0m62 -33h0m699 116h0m-147 -22h0m0 14h0m-258 -50h0m162 140h0m147 -47h0m-127 19h0m325 -138h0m-347 225h0m-292 -65h0m197 -362h0m147 267h0m300 145h0m-304 -109h0m-36 -43h0m-295 149h0m576 -160h0m-120 51h0m174 -99h0m-821 -22h0m793 33h0m-355 63h0m332 -47h0m-329 308h0m257 -202h0m-382 40h0m433 -25h0m-196 104h0m-628 23h0m903 -58h0m-201 -95h0m-418 100h0m94 64h0m494 -282h0m-792 -43h0m531 298h0m170 -86h0m-227 -4h0m-518 218h0m840 -193h0m-150 -87h0m26 83h0m45 -106h0m-414 268h0m487 -16h0m-252 -264h0m170 -207h0m92 125h0m-870 252h0m61 -268h0m159 165h0m29 8h0m541 -58h0m64 104h0m-611 20h0m556 -130h0m-582 53h0m493 -27h0m107 -38h0m-319 -5h0m-455 -72h0m673 83h0m-694 -75h0m699 7h0m71 -113h0m-595 271h0m61 138h0m-126 38h0m108 -176h0m667 40h0m-649 8h0m370 -148h0m169 92h0m-23 -3h0m42 26h0m-431 -13h0m-91 -20h0m-171 -102h0m400 27h0m128 6h0m133 5h0m-78 -21h0m29 252h0m83 -257h0m-368 15h0m260 -2h0m-534 50h0m675 -115h0m-579 230h0m279 -185h0m-169 314h0m276 -90h0m-588 -314h0m732 359h0m-234 -266h0m-304 177h0m494 -33h0m-168 -139h0m165 69h0m-171 -69h0m40 156h0m88 -110h0m-457 111h0m-4 -48h0m328 -102h0m185 37h0m-490 38h0m351 31h0m148 -47h0m-442 241h0m-221 -28h0m649 -211h0m-717 -130h0m332 -20h0m-373 274h0m590 -159h0m-519 260h0m181 -52h0m-38 -164h0m255 198h0m294 -211h0m-351 181h0m101 -103h0m277 -25h0m-3 -91h0m10 -62h0m-81 49h0m-495 55h0m18 170h0m459 -203h0m-639 -103h0m810 378h0m-69 -191h0m63 -167h0m-108 108h0m-757 123h0m723 -47h0m-161 -57h0m-79 -99h0m-78 -109h0m338 65h0m-736 22h0m776 149h0m-232 29h0m141 -65h0m-115 -52h0m316 -67h0m-891 213h0m750 -232h0m-645 -1h0m412 194h0m-527 50h0m163 -142h0m104 213h0m420 -263h0m28 134h0m-389 190h0m75 -1h0m483 -166h0m-851 -202h0m637 70h0m55 122h0m-8 119h0m-449 -1h0m371 -230h0m-86 115h0m271 -95h0m-423 73h0m-326 -198h0m692 228h0m-583 -14h0m634 -38h0m-49 14h0m-521 -15h0m571 179h0m-533 -82h0m-194 -281h0m146 325h0m437 -244h0m-535 11h0m157 170h0m-149 118h0m694 -312h0m-564 87h0m139 54h0m241 -85h0m-19 -37h0m196 131h0m-611 -45h0m-29 -17h0m196 -95h0m252 26h0m-367 252h0m544 -231h0m-265 117h0m89 -131h0m158 11h0m-85 -19h0m-128 228h0m-397 -125h0m578 -33h0m-215 42h0m169 -82h0m-418 282h0m-60 -228h0m472 -31h0m-528 41h0m581 -6h0m-562 -16h0m700 85h0m-894 9h0m219 -78h0m7 -16h0m474 -65h0m-80 7h0m-563 293h0m330 -17h0m-119 -108h0m172 110h0m240 -277h0m-592 -85h0m593 150h0m145 55h0m76 87h0m-189 -264h0m53 81h0m20 88h0m-167 44h0m-187 -436h0m149 272h0m-39 15h0m-195 80h0m365 -65h0m-7 96h0m-311 -249h0m363 260h0m-128 -127h0m40 -39h0m-278 -80h0m-86 392h0m388 -232h0m-318 -75h0m-112 223h0m419 -149h0m-693 153h0m605 -189h0m-534 293h0m783 -335h0m-12 159h0m-196 -124h0m-582 -78h0m20 -22h0m337 346h0m339 -114h0m-493 94h0m455 -194h0m86 54h0m63 53h0m-175 96h0m-700 -29h0m827 -227h0m-580 101h0m-232 71h0m200 -91h0m40 44h0m104 200h0m559 -92h0m-119 -194h0m-800 177h0m784 60h0m-369 40h0m463 -359h0m-97 139h0m-4 -47h0m43 -17h0m11 -56h0m-117 155h0m-104 -80h0m-241 272h0m-127 -222h0m56 -1h0m409 -112h0m-155 184h0m255 -29h0m-196 -110h0m-568 -73h0m441 -125h0m318 306h0m-283 -127h0m350 -63h0m3 354h0m-314 -178h0m138 -20h0m198 54h0m-823 167h0m-64 -136h0m49 -244h0m213 297h0m445 -104h0m92 -126h0m-792 164h0m33 -221h0m850 298h0m-125 -191h0m-452 228h0m578 -39h0m-658 -158h0m27 -20h0m609 -113h0m25 205h0m-705 -87h0m-10 -12h0m373 182h0m219 -98h0m-359 78h0m-401 -58h0m261 4h0m254 -163h0m346 -80h0m-185 176h0m-310 -176h0m512 229h0m-173 -145h0m197 161h0m-634 129h0m638 -124h0m-371 -194h0m-9 30h0m-441 -89h0m718 359h0m18 -203h0m-456 227h0m422 -172h0m-159 -109h0m175 -31h0m-795 -33h0m273 228h0m397 -86h0m-65 34h0m-74 -1h0m269 -98h0m-802 -80h0m684 96h0m-397 33h0m449 -69h0m-462 53h0m595 89h0m-275 -138h0m-110 257h0m-502 -96h0m399 -282h0m174 112h0m190 100h0m-76 -69h0m-555 245h0m413 -287h0m246 126h0m-148 -99h0m-378 193h0m495 -152h0m2 7h0m116 -140h0m-340 113h0m159 19h0m-37 -35h0m-595 -117h0m211 173h0m-1 66h0m423 -89h0m-300 239h0m243 -276h0m-573 -102h0m62 81h0m-60 298h0m797 6h0m-725 -23h0m154 -197h0m469 58h0m-283 -167h0m-429 -48h0m160 291h0m480 -159h0m-325 246h0m-308 -373h0m212 209h0m519 -28h0m23 -109h0m-576 226h0m93 44h0m-139 -213h0m728 101h0m-726 -59h0m215 -231h0m428 98h0m-699 30h0m162 73h0m35 234h0m-279 -385h0m637 180h0m175 34h0m10 7h0m-373 -132h0m-146 298h0m32 -26h0m-129 -42h0m320 -243h0m41 41h0m-338 252h0m-54 -214h0m467 -17h0m-556 229h0m420 -63h0m-148 -116h0m-291 -140h0m491 66h0m268 -108h0m-607 247h0m509 -49h0m-251 22h0m-395 -149h0m105 61h0m-178 -144h0m805 23h0m6 -10h0m-460 -75h0m474 300h0m-19 -20h0m-803 -232h0m217 289h0m-114 -147h0m525 51h0m55 -56h0m74 87h0m-156 -108h0m-606 -90h0m-31 11h0m383 309h0m101 -234h0m-151 -2h0m-191 124h0m589 -67h0m104 -120h0m-168 90h0m171 221h0m-465 46h0m59 -547h0m407 160h0m-325 117h0m82 73h0m-207 72h0m-140 -6h0m281 -93h0m-281 78h0m353 -167h0m-372 232h0m214 -445h0m236 255h0m-612 -120h0m-102 269h0m806 -68h0m-434 -173h0m327 153h0m-496 -29h0m715 129h0m-141 -69h0m21 -104h0m88 224h0m-651 -163h0m188 82h0m221 -153h0m-434 55h0m590 46h0m-11 15h0m-594 78h0m697 36h0m-183 -211h0m178 132h0m-190 -103h0m-151 60h0m244 -92h0m-311 -242h0m-246 296h0m670 60h0m-106 -120h0m-240 -30h0m-356 -212h0m488 452h0m-117 -245h0m-219 229h0m205 -120h0m230 13h0m-760 217h0m761 -214h0m128 -160h0m-263 77h0m-448 36h0m-197 -109h0m32 -20h0m-32 214h0m769 -17h0m-524 -16h0m520 22h0m-516 -56h0m30 211h0m497 -170h0m-12 9h0m-152 -125h0m-438 120h0m652 -83h0m-411 113h0m388 -149h0m-195 12h0m179 103h0m-518 60h0m545 -153h0m-807 297h0m628 -340h0m155 104h0m121 71h0m-187 90h0m53 -127h0m-18 -51h0m-463 228h0m-145 -274h0m93 87h0m225 -306h0m271 325h0m55 -121h0m-384 -7h0m-33 -21h0m2 320h0m-331 -382h0m734 333h0m-455 -197h0m40 43h0m-197 -245h0m206 113h0m-382 188h0m833 -186h0m65 258h0m-200 -192h0m17 2h0m-71 146h0m-396 54h0m638 1h0m-104 -116h0m-134 -127h0m-164 -12h0m425 -38h0m-14 -3h0m-57 10h0m-79 174h0m-379 -150h0m40 204h0m-137 110h0m608 -54h0m-488 -130h0m-179 -30h0m427 -58h0m29 207h0m-621 -324h0m828 28h0m-468 -86h0m-203 228h0m84 2h0m-76 7h0m382 -76h0m-351 106h0m519 -74h0m-703 241h0m267 -223h0m-321 -112h0m246 303h0m-190 43h0m-72 -141h0m247 -96h0m654 167h0m-491 16h0m176 -231h0m206 124h0m74 -198h0m-159 177h0m-444 121h0m-102 -76h0m703 53h0m-20 -232h0m-47 145h0m-731 -215h0m171 200h0m450 126h0m-496 -168h0m623 -63h0m-97 237h0m80 -250h0m75 -58h0m-501 350h0m-341 -346h0m757 324h0m62 -292h0m-658 92h0m724 99h0m-521 123h0m149 -104h0m275 -163h0m-13 100h0m-810 57h0m273 -114h0m502 29h0m-594 -34h0m-177 98h0m-4 56h0m858 -70h0m-281 -62h0m-58 -73h0m318 55h0m-577 190h0m-1 -185h0m-34 13h0m188 138h0m-151 45h0m264 -145h0m356 -189h0m-106 174h0m-514 -37h0m-124 -60h0m-132 186h0m884 -22h0m-736 -145h0m542 53h0m190 99h0m-105 -40h0m-161 -80h0m-562 -125h0m503 163h0m87 -101h0m-475 28h0m533 85h0m-9 -108h0m198 151h0m-113 -112h0m37 -52h0m86 239h0m-752 -212h0m243 302h0m-387 -153h0m549 -190h0m138 0h0m107 45h0m-806 183h0m311 110h0m459 -237h0m-649 -124h0m751 363h0m-12 -347h0m-234 77h0m119 98h0m-96 -154h0m-67 15h0m1 3h0m-355 228h0m-45 -166h0m585 18h0m-52 -87h0m-6 115h0m184 61h0m-221 -147h0m-227 270h0m345 -161h0m-596 -28h0m697 -167h0m-168 116h0m-24 45h0m125 -11h0m-486 225h0m-161 -251h0m733 87h0m-132 -68h0m-228 32h0m-449 176h0m735 -214h0m-348 -57h0m240 110h0m-61 -97h0m225 -97h0m5 306h0m-618 -177h0m416 2h0m72 79h0m-533 -65h0m547 6h0m-81 -19h0m135 13h0m-473 233h0m-364 -128h0m729 -162h0m52 13h0m-96 -44h0m84 70h0m-43 -24h0m-24 -4h0m23 -21h0m-87 172h0m282 -33h0m-175 -15h0m-163 -110h0m141 -11h0m71 99h0m-177 -28h0m271 68h0m-75 -64h0m-562 26h0m584 167h0m-105 -151h0m-463 93h0m-251 -56h0m416 -154h0m-420 147h0m715 -210h0m-129 126h0m283 184h0m-179 -222h0m59 84h0m-59 -59h0m-628 -163h0m844 430h0m-200 -209h0m-713 66h0m783 -186h0m-234 130h0m106 -103h0m120 12h0m76 275h0m20 -382h0m-689 126h0m548 78h0m-733 73h0m405 82h0m12 -427h0m-267 141h0m297 264h0m428 -348h0m-28 38h0m-279 60h0m255 -51h0m-130 116h0m82 -34h0m127 101h0m-93 -59h0m59 -145h0m-682 280h0m28 -482h0m65 459h0m-208 -286h0m43 -37h0m628 248h0m78 -132h0m-210 43h0m262 -112h0m28 233h0m-227 -139h0m17 9h0m74 -315h0m-149 481h0m61 -172h0m-6 8h0m138 -21h0m-73 120h0m-325 -45h0m176 -62h0m-332 109h0m373 -120h0m-283 36h0m83 -204h0m260 187h0m32 -20h0m193 209h0m-729 -169h0m378 -43h0m-407 261h0m703 -308h0m-85 109h0m-146 -35h0m173 -9h0m91 117h0m-634 -37h0m-26 -33h0m333 -82h0m-303 140h0m464 -101h0m14 98h0m-692 -189h0m869 286h0m-85 -260h0m-26 47h0m-625 32h0m517 192h0m152 -101h0m-557 -51h0m392 -100h0m-409 222h0m4 6h0m278 -225h0m-23 6h0m121 8h0m-385 79h0m429 -50h0m0 15h0m-344 -14h0m515 -90h0m-282 78h0m84 -6h0m38 21h0m-381 271h0m-301 -360h0m227 150h0m266 -84h0m284 80h0m-626 -40h0m577 -355h0m-616 588h0m694 -216h0m-837 99h0m691 -140h0m8 8h0m-235 244h0m420 34h0m-712 -140h0m466 -191h0m-418 86h0m323 39h0m-87 169h0m391 -304h0m44 173h0m-184 -38h0m-428 51h0m533 -154h0m-29 82h0m-551 -14h0m326 -84h0m-317 100h0m460 -102h0m-422 171h0m553 -183h0m32 -28h0m-75 28h0m72 159h0m-376 -325h0m296 234h0m-167 32h0m191 43h0m-139 -97h0m260 169h0m-230 -204h0m-690 224h0m488 -232h0m-306 78h0m562 79h0m-149 -102h0m102 28h0m140 15h0m-241 -40h0m100 43h0m-271 107h0m-421 14h0m591 7h0m-253 101h0m460 -191h0m35 -138h0m-188 46h0m-263 81h0m375 29h0m-643 -188h0m647 121h0m-530 9h0m57 99h0m529 -151h0m-376 -16h0m232 25h0m-514 126h0m-98 -240h0m586 272h0m-366 -27h0m-49 68h0m628 -98h0m-591 135h0m-275 -111h0m725 -111h0m-451 182h0m420 -252h0m134 59h0m84 190h0m-724 -169h0m603 44h0m-206 -29h0m-14 155h0m-306 5h0m122 -274h0m-290 320h0m752 -334h0m32 371h0m-643 -237h0m571 -66h0m-35 74h0m90 46h0m-68 -9h0m-731 -193h0m117 195h0m447 6h0m-617 -176h0m752 180h0m37 -49h0m-743 -31h0m668 -37h0m-342 48h0m475 -118h0m45 208h0m-792 -231h0m496 145h0m315 95h0m-142 90h0m-58 -232h0m114 261h0m-205 -130h0m-325 -72h0m-43 21h0m29 74h0m513 -322h0m-29 274h0m-706 -223h0m207 274h0m-212 -264h0m678 218h0m-712 -196h0m771 165h0m-644 -84h0m712 -105h0m-239 245h0m-17 -148h0m-327 48h0m-116 85h0m102 114h0m519 -221h0m82 -87h0m-280 119h0m-398 24h0m713 -142h0m-903 209h0m716 -34h0m5 3h0m106 -80h0m-566 202h0m402 -265h0m-670 216h0m282 5h0m540 -195h0m-679 -12h0m524 24h0m-382 129h0m420 90h0m97 -230h0m-1 -11h0m118 192h0m-340 -118h0m-239 -8h0m557 82h0m-358 -161h0m344 260h0m-175 -222h0m-525 19h0m574 84h0m-305 -289h0m240 193h0m168 -73h0m6 175h0m-591 132h0m501 -171h0m-518 32h0m284 122h0m264 -121h0m-97 -20h0m-112 -103h0m-561 -59h0m801 174h0m-771 184h0m644 -189h0m92 -13h0m-101 -11h0m67 41h0m-48 -124h0m-117 11h0m75 4h0m-290 280h0m-371 -361h0m755 113h0m-520 72h0m-114 152h0m637 -215h0m-159 -8h0m-12 -19h0m91 -61h0m-319 -34h0m-306 -23h0m273 132h0m577 100h0m-726 53h0m571 -212h0m-707 66h0m-56 108h0m793 -48h0m-162 -82h0m28 -15h0m-39 -15h0m177 85h0m-204 -63h0m111 16h0m67 90h0m-743 194h0m39 -414h0m-10 394h0m148 -238h0m224 -62h0m360 188h0m-64 -182h0m71 63h0m70 -143h0m-304 127h0m-357 147h0m437 -195h0m153 104h0m-518 38h0m1 23h0m379 -159h0m-382 162h0m559 -192h0m-543 71h0m115 -178h0m-136 283h0m392 -160h0m130 113h0m-622 -74h0m635 -45h0m-22 85h0m-304 -268h0m-287 390h0m350 -27h0m-531 -23h0m782 -11h0m104 16h0m-329 63h0m-574 -20h0m699 -160h0m-372 260h0m551 -385h0m-38 44h0m-245 32h0m308 159h0m-131 -25h0m52 -182h0m-69 -13h0m-381 77h0m-88 141h0m572 -198h0m-12 115h0m-252 -52h0m213 87h0m-159 -103h0m16 -41h0m172 351h0m-172 -229h0m-244 -220h0m400 158h0m-543 137h0m279 -49h0m262 9h0m-141 -100h0m-542 -52h0m301 326h0m156 -78h0m301 106h0m-172 -298h0m-545 177h0m171 -145h0m495 6h0m45 197h0m-115 -123h0m66 -10h0m-596 -14h0m26 14h0m502 -71h0m126 -114h0m-76 73h0m-816 202h0m764 -151h0m-524 26h0m521 47h0m-701 -218h0m10 -7h0m705 171h0m-42 46h0m-95 -145h0m-51 20h0m-410 105h0m-168 65h0m647 -181h0m-246 308h0m-408 -140h0m533 -44h0m-244 50h0m-102 -111h0m195 -68h0m205 34h0m283 116h0m-813 -213h0m808 16h0m-619 297h0m448 -146h0m-556 -91h0m543 30h0m-455 190h0m627 -280h0m-853 262h0m209 -135h0m-3 12h0m-158 38h0m832 -184h0m-77 178h0m-534 154h0m546 -288h0m61 160h0m-465 -132h0m311 34h0m-549 164h0m442 -166h0m-270 6h0m456 -34h0m-423 281h0m70 -4h0m-180 -50h0m414 -207h0m-620 -107h0m101 247h0m138 -82h0m-116 -30h0m646 -19h0m-351 -245h0m-404 114h0m817 246h0m-756 127h0m444 -282h0m-398 58h0m612 48h0m-524 47h0m458 -115h0m-346 -87h0m33 285h0m-308 -319h0m417 92h0m-239 139h0m468 -15h0m-579 -92h0m-16 225h0m4 -94h0m717 -29h0m-164 -133h0m-28 71h0m153 49h0m51 39h0m-44 -195h0m65 247h0m-912 -41h0m774 -420h0m-584 295h0m641 -1h0m-287 115h0m238 -69h0m-362 64h0m-421 53h0m271 15h0m-206 65h0m712 -190h0m-354 83h0m-418 7h0m826 -219h0m-835 235h0m819 54h0m25 -200h0m-300 34h0m260 -91h0m-706 -90h0m815 37h0m-89 49h0m-802 -62h0m140 87h0m41 179h0m-24 -155h0m619 -26h0m22 278h0m36 -181h0m-836 -174h0m747 181h0m-56 -82h0m191 105h0m-182 -108h0m60 -251h0m-157 255h0m-83 59h0m181 140h0m173 -89h0m-879 26h0m708 -175h0m-725 193h0m911 -258h0m-902 4h0m72 -46h0m123 207h0m-12 -53h0m575 -2h0m-676 227h0m724 -426h0m-131 156h0m-523 1h0m539 17h0m179 -87h0m-837 2h0m732 114h0m-478 131h0m-122 -155h0m213 271h0m97 -506h0m-210 442h0m584 -279h0m-15 156h0m-499 -55h0m123 -313h0m309 345h0m44 -17h0m-78 173h0m-203 -267h0m-127 -105h0m395 254h0m5 -17h0m-155 -117h0m94 30h0m-482 213h0m585 64h0m-595 -196h0m139 170h0m30 -87h0m-422 19h0m691 -135h0m0 -98h0m10 69h0m-708 122h0m901 -20h0m-822 -251h0m725 226h0m-796 46h0m262 72h0m36 -73h0m497 -54h0m27 159h0m4 -259h0m78 129h0m-607 -83h0m-36 79h0m526 -130h0m-56 112h0m-29 -26h0m166 -163h0m-274 134h0m-41 32h0m-110 184h0m111 -224h0m-199 -34h0m118 -19h0m-271 58h0m558 -198h0m134 455h0m-197 -266h0m198 86h0m-174 -139h0m188 -58h0m-640 251h0m450 -178h0m97 13h0m-744 -134h0m781 48h0m-289 38h0m223 142h0m-628 31h0m666 -207h0m-118 89h0m-395 269h0m376 -345h0m-611 -64h0m554 281h0m177 -158h0m-524 144h0m435 -43h0m173 -185h0m-74 -4h0m80 5h0m-898 216h0m16 -207h0m903 230h0m-283 -186h0m-240 303h0m469 -12h0m-691 -77h0m646 -180h0m98 136h0m-98 -80h0m-53 -22h0m-398 33h0m178 -100h0m172 124h0m-318 189h0m16 -450h0m208 150h0m151 84h0m-406 215h0m-321 -423h0m532 117h0m-403 103h0m83 136h0m575 -263h0m-604 99h0m383 -23h0m45 -68h0m148 28h0m-750 -93h0m302 170h0m364 -78h0m-38 219h0m42 -97h0m-551 -69h0m-44 220h0m558 -217h0m171 -127h0m-220 64h0m137 36h0m-4 90h0m-666 -198h0m6 11h0m640 314h0m55 -140h0m-618 -56h0m-38 -52h0m-14 260h0m277 -30h0m-64 -213h0m-122 54h0m396 49h0m223 -186h0m-182 81h0m116 72h0m71 216h0m-22 -248h0m-826 99h0m368 141h0m-275 -386h0m165 307h0m592 -267h0m-26 163h0m32 -175h0m-219 70h0m64 88h0m-435 58h0m424 -172h0m126 -10h0m-545 179h0m367 -175h0m120 -3h0m-694 -85h0m620 76h0m-415 82h0m527 -37h0m-176 16h0m-379 76h0m-217 -167h0m155 141h0m72 59h0m370 -17h0m-355 84h0m495 -140h0m16 72h0m-402 -178h0m436 157h0m9 4h0m54 -198h0m-172 187h0m74 -81h0m53 26h0m28 -143h0m-329 102h0m183 11h0m-104 54h0m298 138h0m-662 -113h0m94 -26h0m-189 -63h0m503 2h0m-372 151h0m609 61h0m-631 30h0m-135 -277h0m134 251h0m514 -109h0m16 -112h0m-535 44h0m-266 277h0m139 -57h0m688 -301h0m-430 -8h0m354 163h0m156 26h0m-136 -26h0m-421 172h0m547 -371h0m-51 39h0m-142 132h0m174 158h0m-624 -163h0m-56 -9h0m466 -77h0m-4 -18h0m-387 245h0m646 -29h0m-109 -106h0m-427 173h0m417 -251h0m-798 147h0m291 -9h0m478 -123h0m-603 115h0m223 133h0m344 -43h0m153 -320h0m-719 227h0m515 -172h0m232 242h0m-345 -153h0m130 37h0m-618 -195h0m220 239h0m-193 -239h0m157 186h0m-261 115h0m857 97h0m43 -82h0m-647 -249h0m142 -81h0m448 76h0m-565 207h0m623 -39h0m-27 -202h0m-84 93h0m-521 178h0m525 -107h0m21 -82h0m-4 -10h0m20 -14h0m-637 55h0m-188 111h0m275 -84h0m506 -55h0m-632 -17h0m186 293h0m-21 -184h0m338 89h0m112 -158h0m-761 138h0m-6 21h0m585 -207h0m191 40h0m144 132h0m-74 -50h0m-619 101h0m57 -40h0m581 93h0m-58 -195h0m-30 -51h0m-23 -103h0m32 179h0m-510 55h0m21 -77h0m-23 74h0m372 150h0m-5 -322h0m-598 331h0m841 -176h0m-543 5h0m501 -24h0m-20 -139h0m41 313h0m-868 -147h0m273 75h0m501 -181h0m-81 41h0m-429 67h0m442 -118h0m-72 -41h0m197 -16h0m68 -38h0m-303 86h0m-302 139h0m-231 -242h0m168 151h0m39 171h0m386 -238h0m-173 -228h0m-366 500h0m734 -278h0m-784 -71h0m567 81h0m200 63h0m5 -104h0m73 179h0m-544 -59h0m-90 85h0m-135 -171h0m277 231h0m-146 29h0m381 -275h0m-420 234h0m539 -160h0m3 -9h0m-720 -117h0m833 204h0m-731 -134h0m715 257h0m-612 -150h0m473 12h0m56 -24h0m-516 167h0m27 -99h0m257 -84h0m220 -16h0m-60 -85h0m-657 -64h0m188 223h0m-147 133h0m529 -121h0m202 -81h0m-566 178h0m-204 -327h0m700 132h0m-504 24h0m84 -5h0m-340 76h0m179 -106h0m583 -1h0m-127 -56h0m-92 122h0m-469 -195h0m844 233h0m-333 62h0m-89 -212h0m-494 200h0m894 -264h0m-457 354h0m397 -307h0m-457 299h0m306 -247h0m-520 2h0m63 37h0m637 193h0m-607 -211h0m436 -25h0m-440 79h0m560 -132h0m-410 -93h0m348 251h0m10 -26h0m-130 -117h0m60 93h0m-20 126h0m-520 -202h0m117 66h0m-141 -93h0m397 26h0m309 -40h0m-575 159h0m439 -115h0m-226 260h0m75 -278h0m50 8h0m115 113h0m-617 -208h0m69 130h0m434 -37h0m187 252h0m-777 -70h0m848 -63h0m-607 -12h0m466 -61h0m53 18h0m-204 5h0m-307 63h0m563 -181h0m5 36h0m-775 -56h0m98 76h0m644 5h0m-102 67h0m90 51h0m-104 -106h0m19 -47h0m-408 81h0m532 -60h0m-440 295h0m508 -156h0m-603 47h0m583 114h0m54 -114h0m-923 151h0m554 -104h0m234 -124h0m-21 -58h0m125 95h0m-745 -143h0m481 130h0m160 -111h0m-268 251h0m-520 -73h0m898 -39h0m-823 -260h0m723 210h0m-581 -36h0m575 39h0m-157 -102h0m26 8h0m0 193h0m79 42h0m-34 -207h0m-272 207h0m351 -150h0m-231 -55h0m64 37h0m181 -59h0m-417 282h0m299 -326h0m-133 258h0m151 -270h0m10 274h0m180 0h0m-43 -123h0m65 29h0m-838 -251h0m819 242h0m-469 9h0m206 -3h0m-570 -229h0m198 200h0m445 -76h0m-70 66h0m-566 -192h0m480 222h0m68 -60h0m-389 -10h0m-226 146h0m176 -169h0m-47 233h0m287 -167h0m369 17h0m-569 -66h0m366 155h0m-168 -360h0m345 69h0m-699 -5h0m719 333h0m-517 -105h0m404 -132h0m-158 251h0m-348 -3h0m745 -39h0m-849 -301h0m-49 239h0m291 22h0m326 -86h0m-546 -196h0m85 254h0m702 -218h0m-147 180h0m-331 -138h0m312 124h0m-383 170h0m549 -334h0m-148 49h0m-709 -34h0m445 -223h0m424 189h0m8 3h0m-262 262h0m112 -63h0m-448 43h0m61 -127h0m141 227h0m206 -283h0m72 61h0m105 -108h0m-165 168h0m84 15h0m-94 -85h0m-158 -62h0m155 54h0m23 -78h0m-429 212h0m-119 -12h0m-11 111h0m763 -96h0m-78 129h0m-756 -387h0m684 153h0m-500 154h0m435 -169h0m14 72h0m-336 -12h0m505 43h0m-856 -208h0m608 41h0m154 36h0m87 -92h0m-586 234h0m-43 -63h0m249 -110h0m301 135h0m-531 138h0m543 -279h0m-15 116h0m-88 -112h0m5 140h0m-452 -14h0m315 103h0m187 -145h0m-553 3h0m471 159h0m35 -230h0m169 -77h0m-79 91h0m-108 90h0m190 137h0m31 -291h0m-795 10h0m675 134h0m-132 -77h0m-39 97h0m133 19h0m-650 -197h0m191 139h0m149 -243h0m297 437h0m-190 -37h0m-310 -129h0m-23 -29h0m542 179h0m-395 -329h0m14 373h0m-103 -6h0m609 -123h0m-625 97h0m411 -233h0m135 -11h0m-795 305h0m862 -176h0m-612 76h0m452 -208h0m-487 55h0m498 53h0m114 -153h0m-595 140h0m495 16h0m132 -204h0m-530 336h0m482 -207h0m-1 -8h0m-577 55h0m513 -39h0m-73 -5h0m-687 112h0m67 -267h0m106 150h0m574 81h0m124 -189h0m-175 163h0m-645 204h0m761 -289h0m-103 -14h0m-721 -59h0m175 90h0m569 85h0m-654 -213h0m-79 253h0m133 -224h0m513 46h0m-303 52h0m98 264h0m186 -319h0m-475 33h0m673 42h0m-377 216h0m251 -225h0m131 -109h0m83 220h0m-922 2h0m75 131h0m204 -93h0m538 -187h0m-717 285h0m692 -189h0m-704 181h0m609 -250h0m-198 226h0m366 -314h0m8 318h0m-668 -210h0m567 73h0m-378 -132h0m-271 276h0m798 50h0m-46 -200h0m-181 -142h0m-435 113h0m-60 -36h0m429 37h0m-33 -72h0m-547 -87h0m226 280h0m29 -159h0m359 -72h0m141 103h0m-796 91h0m706 -72h0m142 10h0m-688 -95h0m119 133h0m-108 49h0m-106 -303h0m53 373h0m596 -231h0m148 241h0m-32 -294h0m-140 -23h0m201 267h0m-109 -143h0m-84 -44h0m-6 31h0m-425 139h0m550 51h0m-36 -169h0m-141 -117h0m-401 125h0m-82 45h0m487 25h0m135 -406h0m-575 294h0m567 -11h0m-56 -49h0m56 79h0m-384 215h0m506 -366h0m-498 371h0m-226 -269h0m650 -39h0m-176 -14h0m259 339h0m-116 -302h0m-139 -30h0m-379 276h0m275 -27h0m97 -245h0m-500 283h0m285 -159h0m495 25h0m-802 -190h0m146 280h0m653 -39h0m-127 -401h0m-148 206h0m111 134h0m-649 -223h0m675 210h0m48 -137h0m-132 111h0m82 -57h0m-219 15h0m-80 -75h0m130 87h0m44 -110h0m-12 60h0m277 148h0m-636 -109h0m488 25h0m55 38h0m-180 -101h0m-489 254h0m571 -150h0m136 172h0m-697 -258h0m694 -79h0m-8 1h0m-61 160h0m-203 -121h0m243 -24h0m-227 42h0m-541 -101h0m568 91h0m-40 61h0m23 -29h0m-615 145h0m695 -171h0m-634 -99h0m784 394h0m-473 -299h0m66 -314h0m-323 586h0m696 -264h0m36 296h0m-192 -307h0m-100 -17h0m-397 164h0m-72 -255h0m760 80h0m-485 36h0m333 224h0m-118 -247h0m-429 15h0m661 318h0m79 -166h0m-350 -146h0m157 28h0m28 3h0m-650 -121h0m711 175h0m-510 180h0m253 -281h0m-260 159h0m-233 -215h0m-38 17h0m868 -4h0m-49 48h0m-723 -93h0m668 158h0m-275 118h0m425 -30h0m-73 -183h0m-137 85h0m84 50h0m-561 -37h0m-110 212h0m-107 -106h0m713 -157h0m82 95h0m-40 -6h0m-109 83h0m-263 -82h0m405 10h0m-604 -63h0m-26 -22h0m537 -2h0m2 19h0m167 222h0m-609 -143h0m216 144h0m347 -155h0m61 132h0m-589 -166h0m-26 135h0m0 -1h0m489 -156h0m-73 169h0m10 -196h0m-109 -18h0m-305 272h0m336 -101h0m194 -101h0m-49 50h0m-394 -202h0m488 23h0m-220 58h0m-378 91h0m566 -151h0m-572 174h0m182 168h0m-112 7h0m492 -222h0m19 -97h0m-13 20h0m45 -59h0m-358 71h0m315 29h0m-405 -42h0m-221 58h0m448 -47h0m-224 95h0m503 54h0m-124 -244h0m11 165h0m80 -155h0m-471 313h0m193 -164h0m197 -71h0m-734 -110h0m98 306h0m218 90h0m-148 -215h0m-211 -135h0m834 357h0m-583 -118h0m456 -50h0m-733 -181h0m865 -35h0m14 240h0m-82 -62h0m-725 -193h0m785 368h0m-255 -238h0m-270 38h0m566 154h0m-15 23h0m-828 -327h0m159 153h0m293 197h0m365 -342h0m-701 119h0m220 63h0m-394 41h0m823 -70h0m-316 -89h0m266 -61h0m48 22h0m-107 79h0m-133 39h0m-337 56h0m-172 -215h0m-69 240h0m708 -156h0m105 277h0m34 -145h0m-305 -141h0m327 324h0m-879 -95h0m828 -242h0m-123 63h0m130 7h0m-747 242h0m787 -19h0m-228 -251h0m192 35h0m-543 30h0m-167 -114h0m126 164h0m303 -47h0m-284 115h0m135 -89h0m282 -148h0m179 337h0m-224 -283h0m158 102h0m-518 85h0m254 49h0m8 -162h0m153 -41h0m-606 230h0m93 -222h0m440 -25h0m202 -35h0m-443 258h0m392 -156h0m-340 156h0m116 -143h0m80 42h0m190 -151h0m-56 128h0m82 -10h0m-61 6h0m118 -179h0m-30 188h0m-155 -18h0m30 12h0m-325 -11h0m-183 6h0m106 -41h0m410 -32h0m-592 120h0m634 -73h0m-525 101h0m515 -171h0m-761 -89h0m676 9h0m119 58h0m-731 296h0m707 -202h0m-557 8h0m462 -102h0m-605 -99h0m785 234h0m-889 27h0m189 -43h0m290 -349h0m152 327h0m77 -61h0m169 -94h0m-178 94h0m65 94h0m-481 53h0m606 -51h0m-180 -106h0m-446 121h0m544 -38h0m81 31h0m-398 -173h0m-219 292h0m517 -157h0m29 -94h0m-236 -20h0m-226 310h0m407 -274h0m92 111h0m-566 32h0m586 134h0m-422 -470h0m268 165h0m153 -63h0m-280 66h0m-246 42h0m-58 118h0m347 -4h0m-636 -12h0m92 -241h0m200 292h0m242 -43h0m192 -123h0m-325 -136h0m468 233h0m-712 -115h0m44 92h0m-194 74h0m416 -36h0m346 -100h0m-193 28h0m10 -65h0m229 77h0m-28 123h0m-87 -143h0m-478 4h0m693 137h0m-643 46h0m468 -319h0m-79 66h0m248 144h0m-74 -23h0m-188 -113h0m-3 7h0m-295 22h0m296 -22h0m75 34h0m-720 154h0m903 28h0m-209 -160h0m145 -101h0m-262 22h0m-145 169h0m-237 45h0m508 -147h0m16 -75h0m-717 -36h0m701 142h0m-167 34h0m-192 -49h0m-335 123h0m128 83h0m646 -203h0m-655 -117h0m354 -170h0m-210 467h0m310 -41h0m215 -96h0m-734 -199h0m760 57h0m-815 173h0m546 -52h0m-81 -343h0m228 336h0m-447 37h0m-67 -82h0m341 -42h0m-288 52h0m472 248h0m80 -174h0m-515 -79h0m207 -46h0m-239 70h0m-59 -81h0m608 128h0m29 -89h0m-100 -26h0m-1 33h0m189 113h0m-907 52h0m152 -195h0m747 308h0m-727 -281h0m372 -44h0m79 36h0m166 67h0m-165 -92h0m-493 -14h0m426 86h0m307 -140h0m-741 46h0m415 133h0m54 -115h0m-210 304h0m366 -290h0m-473 44h0m221 -65h0m304 99h0m-250 -108h0m-15 133h0m368 24h0m-193 -118h0m-678 -137h0m197 179h0m545 59h0m-359 113h0m218 -71h0m222 -202h0m-610 193h0m467 -53h0m-645 -186h0m375 366h0m-271 -245h0m100 232h0m348 -238h0m280 197h0m-804 54h0m129 -71h0m546 -151h0m16 -35h0m39 -57h0m-523 329h0m466 -370h0m-332 325h0m167 -251h0m-528 -104h0m122 202h0m597 2h0m-553 19h0m451 -67h0m-61 -28h0m-385 206h0m516 -154h0m-502 31h0m209 -351h0m-163 311h0m-239 -146h0m659 18h0m95 52h0m-749 -89h0m723 213h0m-84 -118h0m-449 107h0m575 -44h0m-389 205h0m-158 -113h0m601 -5h0m-197 81h0m12 -201h0m172 277h0m-297 -317h0m40 18h0m-529 -109h0m286 104h0m359 -71h0m89 188h0m-375 -112h0m310 88h0m-472 -16h0m509 -64h0m-741 108h0m381 164h0m465 -347h0m-69 132h0m-461 -157h0m414 186h0m13 2h0m-79 11h0m-172 62h0m-296 -40h0m30 46h0m251 69h0m183 -225h0m-655 -107h0m524 -32h0m107 93h0m-53 35h0m-626 154h0m694 -131h0m-277 -202h0m-147 316h0m553 -187h0m64 260h0m-188 -194h0m-82 -46h0m266 245h0m-822 -323h0m34 285h0m800 24h0m-724 -395h0m559 306h0m-584 -117h0m111 41h0m421 -23h0m142 40h0m-278 -83h0m320 266h0m3 -119h0m-187 -114h0m133 13h0m-139 -11h0m-231 254h0m260 -292h0m138 142h0m-304 -85h0m-282 123h0m518 -63h0m-424 -13h0m299 -65h0m37 40h0m-148 84h0m-393 116h0m507 -39h0m-248 -117h0m473 32h0m-390 -162h0m-347 27h0m-18 275h0m499 -290h0m170 126h0m-28 -71h0m-380 238h0m515 -338h0m-184 78h0m45 106h0m-172 -93h0m-398 25h0m530 191h0m-612 -303h0m541 36h0m200 -33h0m-337 63h0m-518 168h0m280 -19h0m2 14h0m536 -228h0m2 129h0m29 230h0m-774 -18h0m618 -216h0m196 70h0m-226 -129h0m-91 -6h0m268 -63h0m-696 337h0m118 -228h0m-11 60h0m530 -85h0m-516 106h0m-199 -227h0m101 293h0m45 -141h0m227 -349h0m246 349h0m-408 135h0m622 -261h0m-207 132h0m-413 100h0m-212 126h0m774 -176h0m-311 -110h0m-288 80h0m-80 67h0m127 -38h0m537 -67h0m65 184h0m-233 -216h0m-632 -74h0m812 29h0m6 -14h0m-276 261h0m130 -189h0m128 -45h0m-203 5h0m-473 -2h0m729 154h0m-692 -82h0m349 189h0m305 -127h0m-152 -93h0m134 86h0m-64 18h0m-8 -6h0m-274 -124h0m435 141h0m-23 -213h0m-113 0h0m-97 30h0m146 314h0m-828 -126h0m711 -30h0m-18 -92h0m-433 214h0m16 -79h0m263 -165h0m276 8h0m57 135h0m-97 -9h0m-715 -218h0m281 144h0m580 113h0m-922 -23h0m67 -241h0m718 123h0m-313 242h0m399 -10h0m-428 -541h0m-53 584h0m508 -160h0m2 -206h0m-453 66h0m-297 267h0m130 -92h0m497 -98h0m-16 -21h0m-496 189h0m-11 -132h0m583 -48h0m-260 -82h0m-164 -133h0m385 112h0m-92 -8h0m-331 47h0m-115 233h0m262 -284h0m62 115h0m-31 25h0m6 -21h0m101 150h0m-284 61h0m242 -281h0m-147 -241h0m-472 432h0m287 -9h0m-62 38h0m599 -227h0m-177 -12h0m-582 -62h0m471 86h0m-254 162h0m62 -123h0m-130 18h0m541 -139h0m-586 110h0m-29 -39h0m721 -39h0m-792 -90h0m557 163h0m67 42h0m-153 -75h0m-226 128h0m-27 38h0m230 -155h0m306 -16h0m-826 173h0m899 -22h0m-154 -17h0m-506 -66h0m133 241h0m483 -364h0m70 255h0m-102 -195h0m-196 99h0m24 -100h0m-633 169h0m587 -149h0m36 -1h0m254 121h0m-288 -67h0m287 75h0m-181 -165h0m84 44h0m5 97h0m53 -162h0m-139 -6h0m-461 152h0m-216 -162h0m138 100h0m375 137h0m116 -160h0m-594 -109h0m-2 0h0m162 159h0m-230 127h0m291 -4h0m408 -192h0m-388 277h0m413 -31h0m-24 -192h0m-540 -31h0m725 220h0m-648 -116h0m477 -110h0m174 118h0m-819 -229h0m791 50h0m-586 249h0m322 -141h0m-157 -227h0m3 427h0m-254 -207h0m52 2h0m207 -337h0m264 394h0m-464 118h0m3 -87h0m228 117h0m-309 -117h0m108 19h0m644 -3h0m-562 -125h0m358 -44h0m-79 18h0m159 -195h0m-417 482h0m301 -277h0m151 39h0m12 61h0m-272 -139h0m-94 283h0m436 -120h0m-95 -119h0m-394 133h0m172 -127h0m-498 -123h0m141 108h0m544 0h0m-71 -27h0m100 35h0m-399 267h0m-339 -393h0m320 391h0m235 -284h0m-229 98h0m226 -70h0m-454 167h0m-85 80h0m719 -168h0m-46 -56h0m-656 218h0m573 -259h0m-614 -112h0m142 161h0m64 170h0m592 -292h0m-695 65h0m679 115h0m-432 -8h0m414 -47h0m-19 22h0m-786 -154h0m99 340h0m310 -24h0m340 -213h0m62 18h0m-217 -49h0m-181 -170h0m-171 404h0m498 -75h0m-113 17h0m-300 -150h0m369 -24h0m141 -78h0m-789 -30h0m582 74h0m-65 39h0m331 161h0m-325 -178h0m279 -66h0m-812 -14h0m739 179h0m-55 155h0m-471 17h0m-41 -262h0m8 217h0m460 -179h0m-634 -127h0m54 30h0m287 -72h0m-249 382h0m707 20h0m-120 -150h0m-675 -214h0m623 147h0m-512 142h0m-56 -239h0m431 102h0m285 -59h0m-316 106h0m268 6h0m-630 29h0m600 -18h0m92 -185h0m-139 60h0m-657 -83h0m130 131h0m232 80h0m281 -33h0m116 -90h0m-121 28h0m-171 223h0m3 -258h0m-227 59h0m-100 -3h0m662 -114h0m-287 60h0m288 -79h0m-66 81h0m-35 246h0m-132 -241h0m259 -82h0m-279 148h0m-429 43h0m-58 -140h0m560 27h0m-87 193h0m130 -264h0m-97 46h0m-576 67h0m740 39h0m103 226h0m-473 -136h0m-181 49h0m629 -313h0m-14 30h0m-332 321h0m-456 -365h0m122 187h0m686 163h0m-330 -173h0m62 0h0m208 0h0m-23 18h0m-13 24h0m122 27h0m-890 -202h0m271 205h0m-57 -80h0m402 -80h0m-484 13h0m725 297h0m-35 -325h0m-667 66h0m159 260h0m-136 -251h0m-40 -37h0m502 8h0m42 50h0m110 -104h0m-437 123h0m308 -71h0m-566 253h0m-109 -322h0m545 43h0m47 36h0m-451 -30h0m760 136h0m0 10h0m-204 -125h0m-160 229h0m-145 27h0m-316 -378h0m695 185h0m-85 -59h0m-690 169h0m429 98h0m-419 -129h0m391 -276h0m494 257h0m-19 161h0m-230 -318h0m179 1h0m-212 17h0m18 28h0m199 -49h0m13 -3h0m-27 45h0m-550 229h0m650 -55h0m-664 -91h0m-48 97h0m322 60h0m130 -252h0m172 61h0m-443 -117h0m252 46h0m-381 108h0m260 156h0m371 46h0m-704 -270h0m740 110h0m-795 -192h0m480 103h0m-522 215h0m-1 -387h0m64 383h0m773 -109h0m-398 -44h0m251 -88h0m-770 -85h0m115 328h0m-123 -89h0m387 -206h0m344 138h0m-126 -121h0m-360 56h0m-46 151h0m-166 -272h0m239 221h0m321 -161h0m-354 78h0m-5 1h0m549 16h0m121 141h0m-343 -163h0m337 86h0m-559 -98h0m299 -35h0m90 13h0m53 159h0m-782 -44h0m703 -140h0m-522 40h0m92 4h0m31 4h0m516 -42h0m-436 260h0m-111 -123h0m128 129h0m-9 -320h0m295 59h0m-124 38h0m359 125h0m-116 -64h0m-23 -97h0m-17 33h0m143 85h0m-902 22h0m618 23h0m184 -71h0m-13 -96h0m-165 15h0m-162 241h0m274 -145h0m-565 74h0m326 60h0m19 5h0m-355 -238h0m124 142h0m440 -341h0m-89 153h0m-74 5h0m305 -64h0m-663 139h0m-123 222h0m792 -345h0m-18 9h0m-786 342h0m734 -184h0m-120 117h0m-409 -81h0m539 -137h0m60 -90h0m-586 136h0m512 61h0m-26 19h0m-704 160h0m22 -394h0m683 226h0m-8 -171h0m122 185h0m-130 -87h0m34 80h0m-19 -93h0m-356 -191h0m400 175h0m-63 -29h0m57 91h0m-388 -244h0m-137 450h0m626 -91h0m-392 -80h0m125 -111h0m170 -17h0m-665 14h0m634 97h0m-372 -243h0m-36 430h0m-319 -417h0m334 130h0m-116 189h0m199 -382h0m-478 344h0m691 -130h0m81 108h0m-705 169h0m160 -82h0m11 5h0m-13 -162h0m48 211h0m69 -201h0m353 -51h0m-268 161h0m-361 -291h0m206 368h0m-186 29h0m519 -220h0m99 -31h0m130 36h0m13 53h0m-426 -83h0m218 -86h0m-100 186h0m169 -105h0m61 96h0m-767 38h0m733 -49h0m-376 179h0m430 -205h0m-639 184h0m350 -304h0m-209 198h0m344 -8h0m83 -146h0m49 112h0m-390 169h0m242 -302h0m-218 -110h0m463 388h0m-154 -293h0m-706 208h0m751 -65h0m-376 -129h0m-112 222h0m-137 53h0m152 -87h0m-272 -27h0m791 -61h0m-444 -78h0m-80 31h0m30 22h0m461 -13h0m-511 67h0m483 -130h0m155 165h0m-450 -450h0m251 376h0m-535 -73h0m-122 302h0m-36 -143h0m640 1h0m270 43h0m-107 -203h0m-724 -119h0m181 180h0m607 189h0m-10 -309h0m-860 257h0m235 -152h0m-22 5h0m215 -226h0m443 289h0m-233 -117h0m16 -30h0m109 150h0m145 189h0m-170 -321h0m-118 185h0m299 -233h0m-422 311h0m-287 -52h0m607 -201h0m-30 113h0m-398 -161h0m220 68h0m-467 -30h0m302 -293h0m466 434h0m-206 -38h0m-176 -94h0m-527 188h0m878 -283h0m-731 87h0m142 164h0m-9 31h0m-14 -31h0m384 -168h0m-300 306h0m-310 -363h0m305 95h0m-179 136h0m-153 -5h0m796 -176h0m-251 63h0m-303 44h0m635 40h0m-85 -127h0m-188 -5h0m-378 77h0m-7 -23h0m114 -29h0m527 232h0m-617 -137h0m-63 -66h0m486 -78h0m228 169h0m-356 -52h0m-311 -37h0m-208 -117h0m740 103h0m-756 279h0m221 -100h0m653 -298h0m-256 75h0m-481 14h0m732 298h0m-287 -310h0m99 49h0m-164 87h0m193 -200h0m-78 76h0m139 106h0m-60 -184h0m183 201h0m-890 -197h0m196 269h0m482 -195h0m168 -67h0m-128 177h0m-51 -96h0m-271 -175h0m193 340h0m-348 -85h0m-190 -201h0m374 350h0m320 -130h0m16 53h0m-615 -158h0m453 -19h0m-12 8h0m-132 255h0m391 -328h0m36 215h0m-28 -21h0m-869 13h0m309 154h0m73 -328h0m-136 143h0m443 -36h0m123 0h0m73 154h0m-67 -157h0m-293 -79h0m75 1h0m-579 327h0m768 -310h0m-268 98h0m157 -132h0m-65 21h0m-369 102h0m135 194h0m278 -285h0m-438 57h0m438 128h0m-585 87h0m725 -346h0m107 381h0m-719 -208h0m-187 85h0m849 105h0m-11 -192h0m-164 -85h0m-434 79h0m537 -24h0m-350 39h0m-39 152h0m439 -215h0m-805 267h0m490 -315h0m15 -6h0m242 76h0m-500 104h0m633 41h0m-20 -302h0m4 213h0m-30 -182h0m-509 128h0m365 -138h0m85 58h0m19 -16h0m-284 125h0m-263 36h0m6 41h0m266 -163h0m336 -106h0m-6 387h0m-585 -127h0m-294 26h0m69 -295h0m714 123h0m-97 -55h0m17 114h0m-232 180h0m419 -351h0m-165 114h0m126 -91h0m-575 328h0m-94 -223h0m522 4h0m222 -105h0m-655 277h0m540 -215h0m-677 -29h0m55 68h0m-112 -141h0m795 24h0m-216 41h0m243 -38h0m-343 9h0m-262 252h0m-56 -121h0m-7 -1h0m464 1h0m136 4h0m-600 -12h0m325 56h0m16 -136h0m124 40h0m-532 227h0m89 -118h0m627 -219h0m-644 154h0m143 226h0m118 -305h0m387 142h0m-692 -139h0m237 192h0m42 -433h0m85 477h0m226 -149h0m0 -4h0m-67 -56h0m122 -83h0m-816 9h0m447 -196h0m-211 387h0m-27 -74h0m82 208h0m250 -125h0m210 105h0m21 -225h0m-714 -135h0m595 112h0m133 95h0m17 -147h0m-287 59h0m184 113h0m-444 22h0m574 -195h0m-221 49h0m-395 69h0m-60 68h0m746 187h0m-238 -370h0m-248 292h0m463 -317h0m-609 222h0m345 -116h0m53 -57h0m232 231h0m-153 -162h0m-748 -109h0m628 77h0m-86 93h0m263 -92h0m34 -54h0m-581 178h0m-203 -237h0m798 54h0m-128 293h0m-140 -129h0m243 -69h0m-507 248h0m373 -193h0m-14 -21h0m168 -140h0m-442 345h0m-379 24h0m825 -46h0m-639 -195h0m-65 75h0m656 112h0m-130 -299h0m62 166h0m-746 38h0m116 -222h0m497 59h0m302 143h0m-130 -51h0m-96 -73h0m22 12h0m-454 78h0m77 192h0m449 -188h0m-194 -93h0m103 67h0m2 11h0m98 -8h0m-95 -87h0m225 156h0m-126 -53h0m-352 172h0m82 -295h0m-125 119h0m284 -78h0m-621 262h0m4 -425h0m102 137h0m339 2h0m-268 92h0m198 -90h0m-297 270h0m-148 -79h0m231 23h0m-230 -54h0m281 -92h0m88 229h0m13 -303h0m-206 196h0m34 15h0m496 28h0m-490 -174h0m463 -48h0m-225 -12h0m132 -10h0m208 121h0m-162 24h0m-368 -85h0m280 101h0m-299 -75h0m-246 90h0m2 18h0m244 -130h0m454 173h0m130 -151h0m-562 64h0m343 -115h0m88 26h0m-257 -19h0m354 89h0m-415 158h0m-377 -133h0m810 -71h0m-182 -77h0m-415 58h0m221 -225h0m-253 292h0m-177 45h0m812 -197h0m-528 207h0m308 19h0m-338 -62h0m277 -19h0m281 -189h0m-104 87h0m108 8h0m-193 -36h0m139 -263h0m-30 207h0m99 47h0m-272 10h0m78 8h0m-275 295h0m393 -176h0m-412 184h0m520 -372h0m-420 335h0m199 -263h0m110 125h0m-55 -75h0m-311 -157h0m152 234h0m210 1h0m-401 -50h0m-226 -114h0m-33 -60h0m330 123h0m381 59h0m-495 185h0m132 -269h0m426 265h0m-176 -202h0m-625 -154h0m-36 22h0m709 190h0m83 -102h0m-193 79h0m-50 -294h0m-344 250h0m683 142h0m-722 -139h0m416 8h0m-49 -88h0m354 215h0m-79 -227h0m-280 11h0m-383 65h0m644 32h0m-413 -205h0m138 224h0m336 154h0m-380 -269h0m-326 210h0m84 -88h0m3 43h0m661 8h0m-76 -202h0m-163 1h0m-628 233h0m691 -60h0m44 -55h0m76 -129h0m-258 87h0m-131 -220h0m-254 256h0m610 -78h0m-5 82h0m-137 -53h0m92 7h0m55 -86h0m-424 -85h0m417 218h0m-752 -177h0m174 206h0m-242 -150h0m837 8h0m-777 340h0m741 -344h0m-116 81h0m-698 150h0m559 -200h0m-30 26h0m312 -49h0m-682 47h0m537 70h0m116 -61h0m-39 24h0m52 -17h0m-523 36h0m418 -55h0m191 215h0m-45 -277h0m47 3h0m-40 -10h0m-61 38h0m-107 55h0m-4 4h0m221 -85h0m-854 -39h0m807 19h0m-329 27h0m0 140h0m336 -174h0m-259 111h0m-88 222h0m-331 -194h0m182 240h0m-288 -395h0m408 68h0m-319 80h0m-50 -153h0m99 175h0m53 77h0m543 -82h0m-774 -204h0m146 182h0m474 -65h0m-265 -117h0m145 284h0m278 -153h0m-796 -65h0m266 142h0m-37 -2h0m425 -8h0m-63 48h0m-247 187h0m-219 -281h0m654 -80h0m-39 143h0m-777 68h0m716 -133h0m121 -59h0m-125 37h0m73 42h0m-156 112h0m139 -100h0m146 157h0m-278 -34h0m-636 10h0m693 -117h0m4 -23h0m179 -116h0m-282 75h0m-424 133h0m101 128h0m396 -40h0m-410 -84h0m175 114h0m-160 -95h0m583 -33h0m38 111h0m-12 -315h0m-280 278h0m-295 105h0m-148 -283h0m254 173h0m505 -47h0m-711 -89h0m489 -76h0m144 -17h0m-770 -53h0m88 349h0m626 -233h0m-152 89h0m-351 74h0m-140 -187h0m-21 259h0m257 37h0m457 -253h0m-656 -2h0m645 -14h0m-287 217h0m279 7h0m-260 -163h0m-308 -18h0m297 -80h0m91 20h0m-409 58h0m-34 133h0m468 13h0m242 -80h0m-349 -5h0m-311 -22h0m137 -107h0m146 -1h0m164 66h0m174 63h0m-17 -178h0m-555 206h0m402 -76h0m-52 -98h0m-566 -80h0m832 236h0m-104 -27h0m-85 14h0m-536 -8h0m688 140h0m-359 -258h0m163 -29h0m-234 -274h0m249 333h0m185 222h0m-872 -88h0m529 -55h0m-527 86h0m161 -46h0m429 54h0m231 -126h0m-142 -58h0m82 15h0m149 159h0m-642 72h0m533 -152h0m-38 -56h0m-592 136h0m696 64h0m-232 -86h0m-164 -358h0m-33 25h0m-74 462h0m518 -62h0m-115 -136h0m26 -10h0m-529 166h0m-26 -157h0m152 193h0m-327 -373h0m15 -29h0m515 308h0m250 -209h0m-371 275h0m-426 46h0m830 -393h0m-240 95h0m118 32h0m-593 128h0m250 47h0m-373 -294h0m404 -93h0m51 426h0m311 -9h0m18 -180h0m-795 -135h0m151 107h0m-186 -92h0m585 39h0m293 -76h0m17 402h0m-654 -187h0m241 -125h0m-309 32h0m525 15h0m-210 -79h0m-342 19h0m361 270h0m-357 12h0m654 -215h0m-141 -43h0m62 -8h0m-421 54h0m92 238h0m-141 -209h0m-251 80h0m811 -184h0m-440 -45h0m527 286h0m-81 -202h0m2 -48h0m-648 59h0m-132 277h0m213 -81h0m490 -307h0m77 339h0m-20 -274h0m-66 131h0m-16 -139h0m-439 168h0m-64 -88h0m72 224h0m-289 -76h0m76 -310h0m486 83h0m-131 306h0m244 -310h0m-430 142h0m115 -104h0m330 -37h0m-683 195h0m636 -195h0m-370 257h0m-225 -303h0m230 334h0m231 -273h0m-291 71h0m566 67h0m68 -172h0m-585 297h0m516 -331h0m-526 187h0m188 143h0m330 -174h0m-54 -68h0m-317 280h0m-155 -192h0m483 19h0m149 121h0m-68 -130h0m-185 67h0m-354 86h0m5 -101h0m478 -33h0m-561 -78h0m725 138h0m-653 41h0m117 -328h0m389 344h0m-351 -405h0m432 94h0m-156 157h0m200 46h0m-257 -137h0m-441 97h0m-79 -156h0m534 58h0m140 19h0m-790 127h0m681 -126h0m-432 92h0m337 87h0m-242 -173h0m37 -126h0m319 206h0m-84 -110h0m-60 9h0m-562 200h0m152 67h0m-76 12h0m155 -214h0m345 -87h0m149 127h0m53 10h0m-73 -92h0m-337 -101h0m-193 105h0m624 -19h0m-725 -118h0m349 340h0m-350 -334h0m-26 26h0m379 229h0m137 -83h0m269 -94h0m7 -15h0m-186 15h0m-383 243h0m459 -190h0m-239 -31h0m241 115h0m-389 179h0m345 -203h0m-620 -192h0m735 202h0m-8 -6h0m-336 -358h0m74 239h0m235 -58h0m-536 145h0m28 56h0m151 -17h0m407 -119h0m-175 186h0m114 79h0m-479 -28h0m617 9h0m-298 -222h0m-363 55h0m635 204h0m48 -69h0m-108 -102h0m-478 198h0m390 -59h0m69 -120h0m-519 117h0m341 -209h0m315 144h0m-147 -141h0m-202 -43h0m-115 16h0m71 -16h0m-35 -1h0m-435 -65h0m816 -3h0m-178 170h0m7 14h0m-196 -103h0m233 127h0m59 -9h0m-31 -43h0m-124 -72h0m-119 260h0m291 -236h0m-271 99h0m28 -56h0m-480 209h0m433 -289h0m209 259h0m-334 -364h0m314 116h0m-64 -3h0m162 258h0m-25 -112h0m-237 -158h0m352 154h0m-414 -159h0m-126 319h0m214 -231h0m-299 83h0m417 -128h0m118 239h0m-111 -218h0m19 -4h0m0 -35h0m-444 141h0m584 -201h0m-681 171h0m506 -143h0m-492 45h0m685 121h0m-284 -114h0m280 222h0m-83 -137h0m-76 -164h0m-557 201h0m607 -17h0m80 -162h0m-152 93h0m-247 -231h0m-286 191h0m95 75h0m502 35h0m-494 -83h0m-88 -3h0m653 23h0m-50 27h0m-90 -42h0m-387 6h0m493 55h0m3 -138h0m34 -50h0m-416 -78h0m-276 125h0m140 103h0m6 -23h0m468 81h0m126 115h0m-170 -225h0m-445 164h0m-265 -242h0m251 195h0m-185 -244h0m344 310h0m415 -127h0m-604 -17h0m-31 -6h0m592 29h0m132 -141h0m-629 219h0m214 100h0m-500 -58h0m813 -205h0m-209 -3h0m302 141h0m-826 -240h0m653 223h0m-494 104h0m56 -61h0m-42 -42h0m498 129h0m-562 -51h0m532 -195h0m-706 -69h0m341 333h0m28 -369h0m194 103h0m-444 -62h0m693 94h0m-652 164h0m593 -189h0m51 -19h0m-108 -3h0m191 230h0m-328 -233h0m-37 7h0m-536 165h0m380 131h0m312 -195h0m122 158h0m17 -268h0m-642 67h0m673 78h0m-345 -116h0m-218 49h0m459 82h0m-662 -243h0m537 110h0m237 293h0m-782 -395h0m67 85h0m25 58h0m355 47h0m-458 -201h0m641 135h0m101 -10h0m-577 31h0m553 34h0m-800 90h0m195 -122h0m-159 -196h0m814 100h0m-679 217h0m634 -64h0m111 78h0m-101 -76h0m-312 -135h0m291 -16h0m-42 157h0m-21 -84h0m-730 161h0m175 -159h0m427 160h0m-159 -491h0m166 487h0m-6 -164h0m237 -71h0m60 193h0m-127 -27h0m-93 -111h0m188 -85h0m-205 293h0m-212 -269h0m348 167h0m-21 -42h0m-109 103h0m-312 119h0m371 -283h0m-502 52h0m329 30h0m-6 -108h0m-196 33h0m309 -5h0m-287 71h0m-106 53h0m507 -113h0m-244 95h0m111 -112h0m197 -58h0m-67 92h0m46 -39h0m-77 115h0m-217 139h0m-285 -36h0m394 -108h0m-522 -197h0m450 160h0m303 -130h0m-115 178h0m-26 -106h0m-228 -19h0m147 -11h0m178 37h0m-155 -75h0m209 -26h0m11 203h0m-618 98h0m14 -154h0m-26 -27h0m651 167h0m-611 -71h0m503 -24h0m-340 154h0m375 -289h0m-445 303h0m-385 -101h0m189 -135h0m435 -68h0m-202 253h0m91 -233h0m169 -29h0m208 -42h0m-221 85h0m-400 235h0m365 -242h0m54 -46h0m-124 100h0m225 44h0m-205 -102h0m191 115h0m-648 -139h0m509 3h0m2 24h0m-227 -152h0m304 175h0m-332 -68h0m-109 85h0m-204 234h0m709 -517h0m119 546h0m-898 -135h0m713 -67h0m-442 146h0m486 -217h0m133 110h0m-595 -75h0m-225 -184h0m272 148h0m527 96h0m-289 -150h0m-531 -55h0m370 213h0m308 -192h0m38 172h0m-129 -117h0m-292 27h0m351 -52h0m-403 191h0m32 127h0m-177 -301h0m505 -7h0m-174 -191h0m366 318h0m-580 27h0m520 -24h0m-727 -213h0m560 120h0m295 110h0m-855 -222h0m635 161h0m83 45h0m-7 128h0m-493 -104h0m433 -171h0m173 220h0m-465 95h0m410 -256h0m-489 24h0m461 191h0m-168 -139h0m-256 -171h0m-88 228h0m262 -135h0m-257 119h0m-299 53h0m703 -149h0m95 46h0m-599 98h0m187 -202h0m333 110h0m-71 -98h0m-571 -105h0m621 185h0m119 22h0m-138 -114h0m-500 198h0m105 -35h0m233 -151h0m-61 -278h0m-344 179h0m708 81h0m84 -50h0m-14 322h0m-548 4h0m266 -114h0m-74 -153h0m380 321h0m-629 -128h0m-116 -35h0m73 -78h0m529 25h0m-169 -43h0m73 -65h0m-546 275h0m408 -303h0m386 207h0m-624 7h0m523 -70h0m25 -176h0m-445 365h0m-142 -225h0m13 164h0m496 -112h0m-398 -122h0m-109 42h0m561 -51h0m-75 128h0m-463 61h0m562 -212h0m-97 45h0m-742 168h0m248 43h0m422 -208h0m-133 134h0m275 -84h0m-103 -126h0m-14 80h0m-569 246h0m107 -200h0m392 101h0m-119 -208h0m152 228h0m166 -224h0m51 277h0m-201 -226h0m-524 -13h0m235 262h0m-128 -164h0m535 -90h0m67 -90h0m-9 194h0m-17 -158h0m-220 224h0m104 -172h0m35 79h0m16 -55h0m-50 -27h0m130 113h0m-306 110h0m-378 -73h0m601 -102h0m-133 109h0m-607 -286h0m21 48h0m37 -38h0m218 405h0m-44 -183h0m564 -87h0m-124 64h0m172 39h0m-715 -115h0m756 191h0m-646 27h0m158 -88h0m389 -67h0m63 -163h0m-117 332h0m-116 -236h0m-644 131h0m577 67h0m235 -122h0m-151 -73h0m-38 26h0m-352 121h0m8 36h0m-22 -72h0m-256 74h0m282 -11h0m-121 -29h0m738 155h0m-679 -252h0m335 18h0m204 -19h0m-315 -354h0m-21 473h0m378 -70h0m-17 138h0m30 -136h0m-217 -118h0m113 37h0m69 -8h0m32 -76h0m1 126h0m-253 -92h0m94 30h0m-313 288h0m285 -196h0m199 -143h0m-280 158h0m-424 -170h0m62 99h0m232 158h0m301 -178h0m202 130h0m-122 -50h0m25 156h0m-533 -81h0m574 -243h0m-792 -36h0m101 233h0m598 -9h0m-767 43h0m86 -271h0m-87 294h0m8 -30h0m268 -4h0m422 -68h0m186 36h0m-254 -100h0m-631 147h0m780 -419h0m82 364h0m-27 -61h0m-66 -10h0m-569 52h0m648 19h0m-26 -83h0m-449 42h0m259 75h0m22 -155h0m-501 8h0m690 40h0m-751 232h0m560 -100h0m81 -145h0m-598 -48h0m668 120h0m-244 36h0m-298 -31h0m451 -82h0m-81 -50h0m208 75h0m-794 -124h0m713 198h0m-72 75h0m118 -92h0m-516 52h0m-226 -245h0m630 155h0m-220 -256h0m-471 346h0m258 -38h0m-81 -88h0m676 -89h0m-156 126h0m223 103h0m-737 -130h0m659 -108h0m-53 79h0m-20 -287h0m-526 372h0m557 -96h0m-25 63h0m-499 90h0m390 -139h0m-23 -10h0m15 185h0m1 2h0m234 -259h0m-434 372h0m98 -334h0m136 110h0m-517 -86h0m746 145h0m-124 -51h0m-46 30h0m25 -377h0m104 384h0m-654 86h0m649 -296h0m-518 379h0m494 -178h0m-379 -365h0m228 335h0m135 -50h0m-746 234h0m794 -143h0m-209 -115h0m116 92h0m-719 174h0m126 -186h0m-195 71h0m634 -170h0m-631 170h0m191 33h0m95 86h0m345 -311h0m283 -34h0m-28 288h0m-276 -47h0m160 -103h0m-350 44h0m-270 134h0m531 -174h0m-590 -185h0m535 205h0m-547 175h0m112 -226h0m215 -30h0m-352 -105h0m553 93h0m50 205h0m-208 -215h0m192 172h0m74 -183h0m-456 264h0m299 -270h0m314 -65h0m-369 340h0m364 -131h0m-761 138h0m95 -211h0m326 72h0m-197 173h0m492 -259h0m-86 87h0m75 -192h0m-48 188h0m-748 -188h0m666 64h0m228 139h0m-231 -166h0m19 66h0m-110 -46h0m289 -77h0m-494 103h0m3 267h0m335 -167h0m118 -158h0m-502 85h0m-204 229h0m-79 25h0m200 -178h0m-237 -183h0m785 169h0m-526 -57h0m562 -75h0m-19 138h0m-70 -123h0m-216 0h0m254 34h0m-606 26h0m82 208h0m531 -125h0m-162 -132h0m240 299h0m-591 -146h0m261 -14h0m363 -1h0m-113 108h0m112 -97h0m-803 -238h0m770 339h0m-449 -137h0m-161 111h0m-69 -172h0m599 -3h0m10 -64h0m8 -1h0m-749 -70h0m705 146h0m-292 -257h0m325 301h0m-407 179h0m422 -285h0m-534 160h0m140 -33h0m377 -49h0m-13 -53h0m-88 -1h0m-8 33h0m1 -62h0m105 109h0m67 182h0m-168 -195h0m83 -313h0m-774 164h0m839 179h0m-111 -189h0m-654 83h0m366 -184h0m227 173h0m-297 268h0m-281 -369h0m173 346h0m-263 -76h0m758 -253h0m-293 -165h0m404 499h0m14 -22h0m-196 -303h0m176 363h0m-56 -185h0m-164 -101h0m-206 251h0m-26 -408h0m144 128h0m-308 160h0m-103 -134h0m147 141h0m83 137h0m472 -330h0m-27 40h0m-756 -91h0m706 221h0m33 2h0m-25 -46h0m-308 -76h0m-469 183h0m767 -144h0m-77 46h0m-62 66h0m262 -226h0m-270 104h0m253 -110h0m-8 22h0m-142 -4h0m-480 157h0m630 -183h0m-627 219h0m-32 -71h0m667 -133h0m-326 123h0m343 89h0m-908 18h0m583 -153h0m-209 -78h0m331 310h0m-639 -326h0m809 27h0m-154 303h0m168 -106h0m-618 75h0m244 -208h0m-248 154h0m159 -316h0m162 146h0m141 34h0m96 -40h0m-551 248h0m269 -243h0m248 102h0m-256 170h0m249 -174h0m-39 -87h0m-328 216h0m-167 -130h0m24 53h0m-148 -159h0m793 219h0m-191 -77h0m113 0h0m-36 -112h0m57 116h0m13 -190h0m-236 84h0m179 3h0m-35 1h0m-626 -21h0m743 -64h0m-634 182h0m616 -195h0m-733 47h0m-141 212h0m698 -143h0m80 -264h0m18 233h0m-326 -12h0m330 137h0m-344 -306h0m343 143h0m-800 178h0m427 -312h0m130 217h0m274 -4h0m-460 44h0m11 203h0m311 -278h0m79 106h0m-492 32h0m-93 -101h0m85 157h0m-203 -314h0m147 199h0m195 198h0m157 -227h0m-323 8h0m30 -92h0m427 52h0m-5 54h0m-698 105h0m762 -94h0m-112 -117h0m-648 341h0m625 -341h0m286 159h0m-669 87h0m554 -102h0m-158 -113h0m-164 -49h0m-404 -65h0m620 193h0m-196 -104h0m194 34h0m-645 -99h0m817 206h0m-64 -35h0m-386 110h0m446 -243h0m-200 248h0m37 -128h0m79 -9h0m73 44h0m-316 -117h0m232 62h0m54 -61h0m45 275h0m-86 -191h0m-84 -107h0m-413 98h0m591 -143h0m-265 96h0m-438 155h0m71 -82h0m67 170h0m591 -121h0m-183 -159h0m67 131h0m-27 -166h0m-172 251h0m-327 -75h0m549 -53h0m-425 218h0m317 -232h0m102 51h0m-518 56h0m296 -171h0m147 115h0m-32 -94h0m-498 65h0m571 -43h0m122 -120h0m-261 99h0m47 -7h0m-511 130h0m260 -6h0m-50 158h0m470 -187h0m-597 -32h0m503 47h0m-468 31h0m381 -167h0m-596 -84h0m200 342h0m-98 -87h0m84 -71h0m589 -27h0m-209 -80h0m59 45h0m209 116h0m-713 56h0m700 -64h0m-589 -84h0m214 -47h0m323 55h0m-200 -57h0m163 83h0m62 -140h0m-163 131h0m-37 122h0m214 -277h0m-791 -44h0m132 184h0m631 -108h0m7 28h0m-700 288h0m275 -434h0m-277 443h0m669 -22h0m-294 -73h0m-275 -75h0m12 -11h0m91 -18h0m408 -161h0m-343 303h0m-346 -324h0m647 138h0m95 -11h0m31 89h0m-619 -55h0m570 24h0m-312 -120h0m306 143h0m-324 -286h0m227 199h0m19 -50h0m-504 91h0m648 -117h0m-106 179h0m-389 -39h0m488 -145h0m-65 182h0m-587 -25h0m639 -151h0m-840 258h0m41 -272h0m142 267h0m613 50h0m-413 25h0m267 -259h0m-225 -172h0m-416 355h0m764 -156h0m-77 43h0m-131 12h0m-295 138h0m-205 -327h0m771 213h0m-427 159h0m-164 -152h0m577 135h0m-564 -184h0m-240 70h0m804 117h0m-119 -242h0m-248 246h0m-340 -401h0m769 53h0m-218 287h0m-591 -297h0m737 176h0m-807 63h0m410 -47h0m120 -116h0m248 29h0m-496 179h0m480 -146h0m-288 -49h0m347 113h0m-16 -4h0m56 15h0m-355 -127h0m286 20h0m-421 -93h0m-372 234h0m245 -60h0m70 83h0m487 -74h0m-594 98h0m-50 -195h0m485 0h0m43 -33h0m153 136h0m-537 181h0m225 -284h0m-462 -94h0m770 126h0m74 -104h0m-126 148h0m2 37h0m102 15h0m-434 -139h0m191 6h0m-586 -86h0m731 69h0m-512 173h0m347 -135h0m209 246h0m-10 -283h0m-57 43h0m7 41h0m-347 50h0m397 -96h0m-613 32h0m484 17h0m101 25h0m-179 -70h0m95 -54h0m109 54h0m-560 103h0m579 -153h0m-67 104h0m-569 -25h0m423 38h0m198 -111h0m96 187h0m-676 -104h0m385 67h0m152 -61h0m-408 14h0m330 4h0m-593 -180h0m516 211h0m-71 -41h0m149 -24h0m119 -33h0m70 -90h0m-829 -21h0m180 188h0m289 -116h0m230 79h0m-70 -89h0m-281 124h0m-133 65h0m640 33h0m-488 88h0m-424 -144h0m409 66h0m396 -97h0m77 21h0m-169 -107h0m-449 135h0m507 -42h0m81 -172h0m-59 164h0m-266 29h0m-69 26h0m424 74h0m-265 -214h0m85 -6h0m-154 62h0m20 -97h0m320 149h0m-195 -104h0m-428 155h0m-204 -297h0m378 -168h0m281 398h0m-689 -188h0m666 97h0m-180 -36h0m-178 49h0m290 -38h0m-473 161h0m452 -88h0m160 0h0m-74 -37h0m-250 -42h0m136 9h0m78 -37h0m51 -25h0m-22 141h0m-97 113h0m-422 2h0m527 -106h0m-144 -35h0m214 -118h0m28 147h0m-102 -46h0m222 146h0m-195 -229h0m33 124h0m-92 -104h0m260 189h0"/><path stroke="#1f77b4" d="M994 283h0m-582 166h0m598 -177h0m-737 -33h0m300 -60h0m351 262h0m-164 -124h0m-351 89h0m-156 -181h0m158 218h0m548 -8h0m-544 -25h0m-140 -170h0m-111 245h0m758 -121h0m-298 -51h0m256 -55h0m-82 22h0m-19 215h0m79 -92h0m119 -69h0m-167 -41h0m180 292h0m-674 -271h0m148 73h0m568 -132h0m-173 37h0m-433 170h0m394 64h0m228 -291h0m-622 319h0m605 22h0m-148 -146h0m-631 155h0m787 -27h0m-7 -320h0m-503 160h0m-301 202h0m305 -290h0m-155 102h0m35 0h0m613 169h0m-300 -198h0m202 -4h0m-500 161h0m176 33h0m232 -236h0m-118 111h0m-284 65h0m-171 -294h0m604 199h0m103 -114h0m-551 133h0m524 2h0m118 11h0m-474 -29h0m-157 137h0m604 -330h0m-397 349h0m322 -251h0m-45 12h0m-697 275h0m123 -262h0m423 -40h0m-147 -259h0m298 388h0m145 12h0m-270 -110h0m292 133h0m-119 -150h0m-786 309h0m705 -207h0m123 -134h0m-614 89h0m-89 -77h0m116 131h0m457 -17h0m-428 179h0m581 6h0m-32 -307h0m-552 170h0m530 -152h0m-165 -23h0m226 221h0m-178 -112h0m72 37h0m-507 -50h0m407 -56h0m-54 58h0m133 54h0m-306 -49h0m247 -103h0m-329 103h0m535 58h0m-454 142h0m280 -262h0m0 -1h0m5 12h0m174 122h0m-181 -43h0m-458 23h0m566 -98h0m73 284h0m-277 -277h0m211 27h0m34 212h0m-755 10h0m479 -304h0m-55 -20h0m371 173h0m-379 123h0m378 -332h0m-270 85h0m-455 27h0m243 95h0m-60 160h0m-141 -236h0m-57 105h0m263 123h0m87 -281h0m180 59h0m145 53h0m-291 -110h0m206 117h0m15 1h0m-475 36h0m-14 -13h0m467 -19h0m143 8h0m-106 -27h0m-79 -11h0m-540 54h0m731 -21h0m-514 -146h0m443 -26h0m-736 312h0m806 -128h0m24 45h0m-847 -286h0m637 193h0m-586 172h0m585 -296h0m-157 103h0m116 -56h0m-456 35h0m207 48h0m-294 -131h0m149 225h0m144 -355h0m436 93h0m-159 89h0m59 138h0m-707 -243h0m355 373h0m486 -165h0m-361 -21h0m263 -15h0m-278 -109h0m360 147h0m-159 -144h0m110 -26h0m-44 114h0m23 -73h0m40 118h0m-390 139h0m164 -75h0m269 -43h0m-42 -23h0m-839 33h0m89 130h0m531 -247h0m180 78h0m110 23h0m-914 47h0m863 104h0m-421 -589h0m135 290h0m303 -62h0m4 319h0m-354 -240h0m314 -49h0m-739 -39h0m131 152h0m399 -124h0m170 -14h0m-1 185h0m-745 -198h0m720 -162h0m-534 367h0m181 47h0m-59 -240h0m513 198h0m-802 155h0m392 -464h0m-386 75h0m780 383h0m-246 -259h0m105 -14h0m141 -64h0m-226 75h0m134 112h0m-610 -108h0m438 -19h0m-229 -63h0m-296 -39h0m523 163h0m166 -4h0m-59 176h0m-90 -151h0m76 -58h0m3 -45h0m-625 -62h0m89 102h0m644 -86h0m-236 35h0m303 323h0m-166 -264h0m-277 95h0m-427 72h0m691 -172h0m-136 61h0m240 53h0m-527 104h0m613 2h0m-162 -298h0m-237 57h0m359 102h0m-418 133h0m495 -39h0m-719 -145h0m8 8h0m559 -22h0m-545 25h0m612 -10h0m-577 39h0m234 -87h0m0 -23h0m-404 -78h0m617 141h0m-420 6h0m506 62h0m-389 -115h0m474 -79h0m-31 130h0m-131 61h0m-326 189h0m383 -246h0m68 -90h0m-227 192h0m38 -176h0m65 259h0m-347 -307h0m230 63h0m41 176h0m262 -30h0m-457 -447h0m-289 313h0m738 306h0m-115 -287h0m28 -62h0m-744 -47h0m502 134h0m-382 -3h0m92 168h0m333 -183h0m-216 -61h0m-89 106h0m179 -267h0m-212 398h0m114 91h0m-217 -302h0m600 60h0m109 199h0m-150 -241h0m28 -83h0m-256 54h0m-70 304h0m-297 -326h0m747 -37h0m-694 114h0m640 74h0m-553 112h0m650 -274h0m-274 22h0m-83 12h0m-271 178h0m451 -34h0m-39 -99h0m-633 -133h0m732 194h0m-385 -246h0m-121 202h0m424 -51h0m-456 51h0m626 91h0m-65 -204h0m51 319h0m-16 52h0m-158 -76h0m-495 -133h0m442 -103h0m173 -56h0m20 349h0m-205 -179h0m113 22h0m-206 19h0m180 -32h0m-450 149h0m560 -289h0m-193 26h0m80 129h0m120 -196h0m-554 256h0m439 -165h0m-29 16h0m169 -112h0m-225 64h0m182 -48h0m-121 85h0m-58 -46h0m-414 80h0m537 -15h0m-218 -28h0m302 95h0m-586 35h0m215 -341h0m38 453h0m284 -158h0m-62 18h0m-489 104h0m505 -91h0m-163 -138h0m-163 119h0m-207 89h0m36 -101h0m603 16h0m-801 -209h0m87 360h0m317 -527h0m323 355h0m-654 169h0m750 -358h0m-516 385h0m154 -36h0m380 -41h0m-140 -96h0m-615 146h0m555 -325h0m-131 37h0m319 249h0m-197 -150h0m178 -133h0m-803 335h0m218 -101h0m-139 -185h0m761 146h0m-649 -25h0m398 -109h0m-363 145h0m614 -218h0m-131 96h0m116 202h0m-540 -214h0m198 10h0m203 94h0m150 -184h0m-51 22h0m-282 15h0m147 30h0m-644 -111h0m728 56h0m-533 261h0m550 -137h0m71 154h0m-194 -156h0m110 -76h0m-649 7h0m247 290h0m471 -384h0m42 237h0m-203 -148h0m-264 1h0m221 215h0m133 -112h0m-443 78h0m470 -110h0m-563 169h0m330 -252h0m-16 -2h0m313 162h0m-19 -221h0m-177 157h0m-418 97h0m-275 -17h0m6 -9h0m893 -217h0m-141 306h0m31 -164h0m76 207h0m-87 -268h0m55 -58h0m-61 101h0m-84 -99h0m-454 100h0m27 16h0m1 118h0m408 -184h0m-42 136h0m89 -131h0m40 110h0m-59 -26h0m7 -119h0m-165 107h0m-147 -208h0m499 262h0m-342 -165h0m226 115h0m-209 117h0m282 -260h0m-236 97h0m-171 -331h0m383 396h0m-227 -110h0m-462 -16h0m133 264h0m278 -112h0m-284 -5h0m4 41h0m549 -67h0m-529 -34h0m-291 105h0m127 -291h0m723 414h0m-289 -84h0m-559 -23h0m865 69h0m-600 -15h0m-264 -108h0m72 -251h0m756 79h0m-405 27h0m-153 151h0m-1 116h0m455 -149h0m107 -48h0m28 59h0m-224 -126h0m280 184h0m-493 103h0m182 -227h0m-423 58h0m252 166h0m-144 -1h0m424 -286h0m74 -189h0m-94 267h0m54 172h0m-390 -236h0m-293 -112h0m837 239h0m-658 -24h0m497 -188h0m-552 129h0m1 34h0m-194 103h0m419 -343h0m401 158h0m-814 173h0m98 -279h0m463 164h0m-564 -121h0m703 80h0m-642 -110h0m753 60h0m43 -35h0m-36 26h0m-190 6h0m-390 85h0m-206 -127h0m680 90h0m-522 31h0m691 -124h0m-292 273h0m267 -259h0m-611 174h0m613 9h0m-836 -195h0m526 298h0m295 -270h0m-134 280h0m-561 24h0m281 -430h0m227 375h0m-247 9h0m277 -146h0m230 98h0m-290 -183h0m-526 -78h0m518 133h0m-344 113h0m346 -153h0m73 5h0m167 281h0m-622 -217h0m453 -13h0m-368 242h0m478 -295h0m-379 238h0m127 -168h0m364 -137h0m5 223h0m-114 -76h0m-587 -26h0m622 -91h0m24 156h0m-809 -205h0m10 -4h0m617 106h0m-594 -125h0m33 60h0m516 3h0m163 156h0m97 27h0m-631 92h0m619 -308h0m-324 296h0m178 -92h0m-492 8h0m18 102h0m543 -228h0m-25 105h0m-396 184h0m453 -376h0m-186 269h0m138 -99h0m-78 148h0m-273 -410h0m192 168h0m-635 170h0m764 -118h0m-698 -144h0m706 130h0m-72 -8h0m-67 -17h0m-405 62h0m148 -131h0m-198 254h0m-42 -215h0m643 141h0m-91 -57h0m102 -6h0m-793 133h0m291 -17h0m246 -54h0m383 48h0m-640 -16h0m-19 -31h0m188 -403h0m194 240h0m132 85h0m-81 47h0m130 -100h0m-404 298h0m450 5h0m-141 -289h0m-84 8h0m177 55h0m-648 62h0m264 -300h0m398 148h0m1 -95h0m-229 146h0m-440 109h0m534 -43h0m177 153h0m-598 -99h0m13 29h0m365 -182h0m-509 279h0m-50 -379h0m827 249h0m-854 -237h0m637 201h0m-21 -136h0m18 54h0m-638 -153h0m797 249h0m-829 190h0m257 -160h0m207 -158h0m265 131h0m-180 -134h0m-410 51h0m615 68h0m-140 -141h0m-411 149h0m30 -71h0m117 251h0m-126 -171h0m437 -71h0m-129 -74h0m-291 156h0m-121 127h0m762 55h0m-44 -391h0m-208 46h0m233 243h0m-366 -221h0m126 20h0m-288 -20h0m191 55h0m192 77h0m-204 -50h0m-420 -105h0m-9 -25h0m676 142h0m-21 34h0m-235 113h0m-289 -165h0m438 -11h0m83 -324h0m-495 447h0m8 -23h0m410 -95h0m-696 -127h0m633 218h0m206 -198h0m-25 48h0m-754 -95h0m663 103h0m-82 -11h0m-645 322h0m920 -7h0m-737 -198h0m-133 -257h0m211 274h0m-12 -72h0m270 -69h0m-430 -103h0m269 125h0m-271 -133h0m75 370h0m474 -87h0m-623 -20h0m854 135h0m-156 -343h0m-510 106h0m32 9h0m196 107h0m481 49h0m-617 -39h0m352 -4h0m7 6h0m150 -165h0m-696 -97h0m-46 2h0m778 147h0m-831 101h0m421 -21h0m151 -165h0m33 20h0m156 51h0m14 71h0m-17 -65h0m-496 162h0m-253 -78h0m437 122h0m206 -81h0m166 -67h0m-599 92h0m701 -69h0m-95 -24h0m-274 -135h0m62 21h0m227 121h0m-644 80h0m24 -142h0m702 105h0m-100 -94h0m-403 67h0m270 -76h0m47 60h0m101 -152h0m-571 103h0m310 140h0m-434 -218h0m322 -246h0m427 394h0m-703 -63h0m584 -153h0m-508 203h0m-101 57h0m211 -90h0m424 -88h0m-526 138h0m311 -81h0m180 -13h0m-10 -130h0m-33 190h0m-608 159h0m8 3h0m597 -247h0m41 99h0m-10 123h0m105 -321h0m-477 17h0m334 292h0m-71 -232h0m180 -2h0m11 53h0m-85 -135h0m-500 189h0m568 -34h0m-513 -6h0m468 -52h0m130 200h0m-343 -135h0m209 -50h0m-699 268h0m781 -341h0m-11 103h0m-203 -98h0m-539 -55h0m740 69h0m35 -49h0m-274 77h0m-273 289h0m171 -322h0m-331 -18h0m-167 206h0m785 -41h0m-10 -87h0m-8 30h0m-23 -136h0m-463 245h0m139 28h0m121 -193h0m-153 -28h0m456 -23h0m-779 -42h0m360 363h0m-199 -213h0m57 126h0m-3 -31h0m583 -212h0m-114 175h0m-77 -112h0m25 -46h0m-650 -41h0m656 166h0m137 26h0m-251 -100h0m226 90h0m-607 -48h0m195 239h0m492 -139h0m-186 -108h0m74 33h0m-376 210h0m315 -259h0m-445 229h0m8 -79h0m558 -328h0m-65 166h0m-505 53h0m-163 -159h0m586 142h0m-589 -153h0m194 150h0m-206 214h0m182 -82h0m294 -209h0m-505 324h0m744 -352h0m22 84h0m-523 37h0m2 -8h0m120 48h0m-136 58h0m569 -218h0m-573 217h0m356 -158h0m-480 3h0m254 190h0m443 -247h0m-325 160h0m188 128h0m-657 -328h0m476 175h0m-476 -190h0m719 217h0m-539 -2h0m637 -190h0m-8 -6h0m-227 95h0m148 101h0m-571 -56h0m622 55h0m-620 101h0m376 -188h0m258 93h0m-143 -175h0m-266 325h0m468 -322h0m-806 320h0m-113 -98h0m636 -191h0m-633 184h0m692 -110h0m-421 1h0m629 93h0m-840 -245h0m771 67h0m-138 44h0m-136 209h0m-302 -89h0m590 -178h0m-230 227h0m-620 5h0m419 -340h0m-331 47h0m759 49h0m-62 181h0m38 -10h0m-816 79h0m858 91h0m-250 -258h0"/><path stroke="#ff7f0e" d="M613 47h0m-200 399h0m443 -152h0m-698 170h0m703 -175h0m-58 34h0m-256 -30h0m437 7h0m-166 20h0m-475 34h0m330 -38h0m217 25h0m-188 -25h0m-333 54h0m76 107h0m636 30h0m-26 -47h0m-121 -109h0m-55 -25h0m77 95h0m-341 163h0m-392 -354h0m855 256h0m-227 -98h0m-91 -78h0m267 -44h0m-295 60h0m-193 88h0m-205 -70h0m527 -9h0m159 100h0m-688 66h0m123 -21h0m86 119h0m446 -212h0m-4 -52h0m-405 83h0m223 -92h0m-515 260h0m115 -181h0m473 -57h0m-11 8h0m-401 254h0m354 -290h0m162 69h0m-530 79h0m137 13h0m-37 -186h0m-97 179h0m549 131h0m-451 5h0m165 -321h0m-42 285h0m-428 -370h0m548 262h0m64 -152h0m-282 -149h0m-320 54h0m-88 265h0m486 -203h0m138 56h0m198 48h0m-318 -71h0m119 -20h0m243 -79h0m-624 213h0m-34 -56h0m612 55h0m-288 19h0m281 128h0m9 -304h0m-70 102h0m-208 68h0m344 102h0m-888 -31h0m694 -154h0m-544 210h0m479 -244h0m-418 199h0m532 -81h0m-649 -226h0m250 399h0m68 -454h0m28 -142h0m-331 567h0m-53 -364h0m420 354h0m270 -300h0m-192 20h0m-396 39h0m332 -54h0m-473 -30h0m347 -3h0m148 68h0m-223 184h0m438 -64h0m72 5h0m-18 -9h0m-486 -42h0m381 -100h0m-252 309h0m297 -276h0m98 9h0m-473 6h0m345 28h0m-432 -42h0m185 262h0m248 -243h0m166 101h0m-726 -146h0m-67 -77h0m761 75h0m-199 0h0m245 270h0m-638 -28h0m-55 -181h0m628 70h0m-803 42h0m709 -45h0m-341 177h0m-122 -162h0m-232 -185h0m519 198h0m-276 102h0m347 -239h0m232 118h0m-545 -42h0m517 189h0m-418 33h0m-328 -397h0m173 148h0m207 218h0m235 -249h0m-422 98h0m-203 -198h0m118 125h0m546 -31h0m-636 267h0m223 -6h0m320 -113h0m-258 137h0m-210 -324h0m697 147h0m-306 -142h0m58 77h0m-612 90h0m694 -52h0m-418 89h0m-59 -119h0m502 -53h0m-581 -21h0m689 -20h0m-143 50h0m239 120h0m-547 163h0m52 -57h0m-14 -16h0m325 -304h0m39 166h0m-17 -43h0m-118 -74h0m-301 58h0m524 -109h0m-195 80h0m167 -37h0m-572 267h0m526 -424h0m35 242h0m-657 82h0m747 45h0m-147 -111h0m-26 -121h0m-363 355h0m-116 -62h0m-17 -148h0m446 -71h0m116 -11h0m-104 24h0m-10 64h0m90 33h0m-249 116h0m257 -149h0m-507 89h0m-165 88h0m45 -134h0m531 -44h0m-135 -115h0m210 120h0m-402 -104h0m141 -12h0m-133 294h0m509 -142h0m-3 6h0m-623 -93h0m31 3h0m-110 -5h0m-15 86h0m553 -199h0m63 79h0m17 66h0m-20 11h0m-142 -81h0m183 -18h0m70 -65h0m-59 83h0m-160 -39h0m224 176h0m-175 77h0m60 -106h0m-476 -46h0m506 -73h0m-354 271h0m-191 -106h0m271 79h0m-124 -8h0m278 -151h0m-687 -132h0m650 42h0m116 71h0m-80 5h0m143 -18h0m-94 67h0m-74 -109h0m229 129h0m-414 123h0m375 -143h0m-86 6h0m-706 96h0m173 -154h0m545 -42h0m-761 -83h0m359 337h0m-140 -183h0m561 15h0m-210 -126h0m192 32h0m-185 180h0m-48 -88h0m170 -74h0m45 22h0m16 -292h0m85 167h0m-171 155h0m223 59h0m-632 2h0m-93 -97h0m-132 254h0m786 -185h0m-837 47h0m684 -122h0m160 -96h0m-302 113h0m-25 200h0m297 -273h0m-233 26h0m104 24h0m179 210h0m-578 -68h0m-286 -38h0m22 -205h0m837 357h0m-844 -360h0m620 77h0m-302 54h0m524 57h0m-238 2h0m171 -29h0m-768 217h0m139 -320h0m739 154h0m-593 121h0m414 -153h0m-646 160h0m637 -158h0m106 -42h0m-228 -11h0m201 43h0m-679 162h0m666 -148h0m-88 -80h0m-624 -146h0m758 166h0m-119 -88h0m116 90h0m-831 80h0m277 45h0m640 -17h0m-156 -125h0m34 73h0m-374 10h0m49 135h0m357 -148h0m41 -179h0m47 11h0m-313 115h0m281 175h0m-583 57h0m315 -291h0m-499 266h0m681 -150h0m33 -171h0m-154 270h0m-561 -285h0m293 -64h0m496 344h0m-660 -141h0m-238 76h0m916 38h0m-139 -98h0m-367 103h0m304 -78h0m43 56h0m-45 -170h0m127 116h0m-847 77h0m390 104h0m369 -178h0m-359 -121h0m521 191h0m-703 -129h0m689 -122h0m-317 124h0m128 -63h0m200 141h0m-354 -161h0m-141 125h0m400 -83h0m-757 -105h0m648 29h0m72 128h0m-666 -131h0m148 296h0m-191 -344h0m814 259h0m-199 -155h0m-481 60h0m587 -30h0m99 197h0m-708 -238h0m702 242h0m-200 -167h0m134 -102h0m-362 309h0m15 -495h0m-198 383h0m-217 -239h0m323 73h0m153 -4h0m348 144h0m-191 -102h0m75 83h0m-266 -117h0m167 -19h0m203 -67h0m-568 156h0m555 54h0m-434 58h0m-255 -44h0m621 -28h0m-22 -37h0m-58 -122h0m-10 79h0m-46 56h0m224 224h0m-632 -185h0m448 -29h0m-201 -101h0m-302 2h0m578 136h0m-116 -118h0m-10 -17h0m-416 65h0m615 56h0m-189 -124h0m224 138h0m-53 -90h0m-309 -49h0m220 -62h0m-5 192h0m-467 18h0m-36 -62h0m157 222h0m452 -338h0m-159 21h0m38 135h0m48 -49h0m106 59h0m-278 74h0m-541 -277h0m165 143h0m441 151h0m-458 -158h0m-193 114h0m761 -100h0m-155 -24h0m-60 -69h0m154 130h0m167 136h0m-397 -432h0m163 161h0m-264 327h0m32 -6h0m415 -266h0m-21 50h0m37 -100h0m25 -38h0m-713 315h0m743 -114h0m-618 -13h0m418 -150h0m-668 -48h0m216 185h0m467 -139h0m-404 90h0m286 -42h0m278 -82h0m-218 32h0m168 291h0m101 -130h0m-473 -411h0m-206 349h0m564 34h0m-169 -97h0m282 166h0m-605 91h0m388 -234h0m75 -3h0m-163 -5h0m-382 46h0m595 47h0m-593 -44h0m625 -148h0m-781 -33h0m190 182h0m549 184h0m-269 -178h0m-483 218h0m666 -262h0m-88 -23h0m-478 7h0m384 -42h0m130 42h0m-10 -12h0m84 25h0m-146 -13h0m-410 183h0m421 -173h0m-241 246h0m393 -249h0m-359 -166h0m129 376h0m-306 -166h0m476 26h0m146 -152h0m-592 187h0m-265 62h0m900 25h0m-152 -282h0m-604 342h0m262 -403h0m294 211h0m-644 -168h0m640 127h0m-549 231h0m249 18h0m34 -138h0m-167 -15h0m32 -183h0m332 41h0m-227 287h0m-218 -247h0m517 21h0m-445 39h0m-30 111h0m-9 -152h0m-148 -149h0m736 202h0m-372 170h0m285 -306h0m-22 110h0m-307 -107h0m-255 -93h0m155 280h0m616 -32h0m-891 25h0m425 125h0m381 -282h0m-395 283h0m-281 -8h0m231 -188h0m429 16h0m-85 -82h0m53 99h0m-773 79h0m725 -172h0m74 58h0m12 17h0m-42 2h0m-200 -129h0m351 163h0m-153 -73h0m-145 -72h0m159 128h0m-534 -2h0m-102 -130h0m217 18h0m-310 -87h0m834 373h0m-7 3h0m-878 -111h0m92 84h0m587 -253h0m-577 255h0m349 -1h0m-45 -5h0m-167 -168h0m7 -27h0m296 166h0m-102 44h0m-94 -242h0m362 -5h0m157 -83h0m-146 -10h0m34 180h0m50 -41h0m-711 -193h0m621 59h0m197 -16h0m-641 312h0m-39 -174h0m488 -132h0m-547 99h0m362 66h0m377 -162h0m-770 330h0m651 -176h0m-257 -113h0m243 -57h0m114 309h0m-302 -30h0m200 -88h0m0 130h0m-575 -183h0m214 94h0m212 -146h0m176 -6h0m-587 -61h0m619 -2h0m-429 273h0m390 -103h0m-154 -136h0m-49 49h0m164 -102h0m-518 188h0m-26 -51h0m28 40h0m267 -107h0m269 52h0m-586 15h0m448 -46h0m237 128h0m-873 3h0m823 -31h0m-83 7h0m153 19h0m14 -196h0m-203 84h0m-442 163h0m112 -220h0m402 123h0m101 44h0m-42 -185h0m-302 215h0m179 -47h0m-58 -145h0m-65 216h0m124 -256h0m-345 336h0m468 -153h0m-141 -19h0m-323 -143h0m431 156h0m-749 -217h0m460 108h0m367 306h0m-193 -82h0m189 -97h0m-299 -142h0m85 32h0m81 225h0m-461 -70h0m-93 -82h0m219 -96h0m474 -61h0m-467 -104h0m356 182h0m-101 -39h0m-521 38h0m428 -9h0m180 116h0m116 35h0m-811 -259h0m641 119h0m134 103h0m-59 -111h0m-80 104h0m-485 101h0m663 -288h0m-65 63h0m-56 51h0m-346 86h0m-243 -2h0m383 -145h0m-41 135h0m-355 24h0m599 -72h0m6 6h0m38 7h0m-242 139h0m-279 -45h0m403 -139h0m-21 -19h0m-502 162h0m653 -67h0m-370 -382h0m270 292h0m-679 -86h0m259 138h0m-39 141h0m478 -82h0m-683 -280h0m62 101h0m75 104h0m351 -65h0m-370 44h0m646 -48h0m-640 65h0m210 239h0m239 -179h0m18 -103h0m-380 204h0m-139 -229h0m117 98h0m-178 -187h0m691 232h0m-681 -235h0m782 50h0m-21 101h0m-232 -40h0m-45 56h0m303 211h0m-55 -191h0m22 198h0m84 -109h0m-480 -335h0m-187 218h0m435 -97h0m109 47h0m42 48h0m-24 -37h0m-72 109h0m141 -365h0m-90 348h0m-129 -127h0m35 89h0m25 55h0m-725 28h0m73 122h0m629 -246h0m-452 62h0m288 26h0m91 20h0m-627 -188h0m252 141h0m15 -38h0m-194 244h0m622 -226h0m179 66h0m-820 -206h0m231 242h0m334 -87h0m201 -60h0m82 126h0m-79 -155h0m34 -30h0m-91 101h0m-435 202h0m410 -18h0m-311 -5h0m263 -156h0m215 127h0m-309 -16h0m-596 -47h0m792 -34h0m-23 -41h0m-388 -171h0m311 191h0m-45 -82h0m-17 145h0m-634 -209h0m696 119h0m-157 173h0m-112 -97h0m473 -9h0m-96 -52h0m-807 88h0m418 -312h0m-133 327h0m82 109h0m408 -245h0m-499 3h0m253 -63h0m-218 300h0m352 -309h0m60 11h0m-333 -42h0m477 177h0m-635 -66h0m67 108h0m399 -120h0m-661 -126h0m766 76h0m-329 -180h0m349 168h0m-274 3h0m-473 -102h0m631 212h0m-39 116h0m30 -213h0m83 71h0m-769 251h0m861 -200h0m-40 -136h0m34 284h0m-222 -103h0m-509 -190h0m706 74h0m-764 -164h0m184 231h0m375 -139h0m-457 213h0m119 -22h0m416 -200h0m-164 128h0m8 -121h0m-25 26h0m-277 46h0m580 -64h0m-349 274h0m304 -141h0m-738 -195h0m749 86h0m-603 191h0m547 -78h0m93 -72h0m-567 81h0m510 -10h0m42 -108h0m-651 21h0m439 157h0m42 -195h0m-644 -55h0m182 173h0m734 21h0m-55 -7h0m-493 -37h0m295 -75h0m140 90h0m-607 92h0m523 -173h0m-534 23h0m635 68h0m-428 179h0m-335 -384h0m770 22h0m-121 163h0m-70 -96h0m79 113h0m-243 -344h0m292 278h0m72 63h0m55 -185h0m-2 229h0m-645 -75h0m299 -103h0m81 52h0m48 -57h0m-609 -63h0m742 100h0m-177 148h0m-565 -249h0m713 183h0m-372 7h0m155 -36h0m35 -36h0m-332 129h0m-214 -238h0m528 75h0m-412 140h0m488 -118h0m161 10h0m-117 63h0m-231 -274h0m249 297h0m-89 -2h0m-440 -58h0m425 -48h0m253 -72h0m-77 96h0m-143 -19h0m117 115h0m-125 -120h0m-541 243h0m672 -199h0m-175 -53h0m256 -43h0m-54 132h0m-799 82h0m192 -122h0m703 -113h0m-348 60h0m-297 104h0m-160 -190h0m631 93h0m-258 -177h0m44 438h0m208 -148h0m-144 -43h0m301 -148h0m-44 54h0m-306 13h0m-99 150h0m-260 16h0m25 -103h0m617 199h0m-527 -84h0m522 -58h0m-428 189h0m183 -289h0m133 -33h0m-489 226h0m-73 -225h0m547 49h0m157 -34h0m-136 90h0m-56 -86h0m-87 114h0m-177 189h0m140 -298h0m-323 55h0m239 232h0m487 -135h0m-667 -44h0m403 -97h0m44 66h0m-410 85h0m-2 4h0m-40 -10h0m250 103h0m321 -134h0m-129 -104h0m-61 -21h0m15 10h0m66 19h0m-69 -44h0m9 29h0m-47 48h0m-451 213h0m686 -315h0m-471 124h0m418 -58h0m44 44h0m-128 15h0m37 -156h0m-322 -74h0m238 154h0m-220 239h0m376 -133h0m-536 80h0m106 -285h0m-207 125h0m-95 -138h0m34 24h0m505 265h0m301 -33h0m-667 -58h0m-216 -162h0m691 4h0m-552 96h0m639 -30h0m-46 59h0m-485 87h0m418 -91h0m-17 165h0m-302 -312h0m-35 159h0m83 54h0m-153 77h0m378 -211h0m-365 159h0m480 -23h0m-149 -122h0m196 -1h0m-196 76h0m-538 -188h0m830 249h0m-141 -96h0m-319 234h0m40 -18h0m-450 -330h0m751 174h0m-413 177h0m518 -131h0m-88 -43h0m-402 -229h0m-14 408h0m142 -35h0m272 -249h0m-744 -84h0m736 197h0m-518 44h0m553 -184h0m-380 23h0m335 123h0m-714 -228h0m728 189h0m-531 117h0m500 -67h0m-515 -57h0m13 152h0m-2 4h0m320 -216h0m136 229h0m197 -101h0m-128 -27h0m-780 46h0m879 -23h0m-821 69h0m641 -230h0m156 292h0m-836 -329h0m494 320h0m161 -285h0m-529 276h0m104 -123h0m27 36h0m341 -144h0m-81 -35h0m-273 161h0m401 -167h0m175 -26h0m-582 292h0m616 -7h0m-827 -322h0m578 66h0m-362 239h0m423 -184h0m-299 262h0m318 -193h0m-629 -212h0m523 178h0m-278 222h0m477 -187h0m-557 -18h0m520 -79h0m-615 1h0m243 89h0m-26 -163h0m392 189h0m-179 -107h0m-588 181h0m890 32h0m-828 -321h0m437 346h0m-18 -491h0m-48 520h0m338 -247h0m-767 165h0m834 -207h0m-53 250h0m-87 -299h0m-158 48h0m255 -185h0m-524 394h0m550 56h0m10 -189h0m-826 86h0m201 -100h0m503 41h0m123 -53h0m63 91h0m-626 98h0m394 -245h0m-440 220h0m35 -135h0m-89 106h0m174 -140h0m-341 -96h0m356 323h0m519 -341h0m20 386h0m-59 -244h0m-85 58h0m-419 128h0m291 -160h0m170 -80h0m-147 -46h0m-46 62h0m276 270h0m-295 -236h0m69 -91h0m-654 -28h0m912 238h0m-30 -54h0m-250 9h0m-601 -202h0m631 44h0m151 130h0m-799 34h0m679 -121h0m-688 119h0m529 -24h0m329 -174h0m-599 154h0m-224 212h0m735 -182h0m-347 20h0m-1 -309h0m301 176h0m-174 -34h0m-98 -156h0m252 267h0m25 23h0m-448 37h0m-28 -46h0m-180 -209h0m697 152h0m138 91h0m-351 -159h0m-129 306h0m96 -175h0m240 -52h0m104 -142h0m-522 109h0m356 -1h0m79 -10h0m-543 55h0m48 101h0m384 -267h0m202 228h0m-33 -201h0m-55 170h0m105 -174h0m-335 51h0m350 238h0m-402 40h0m9 -249h0m290 103h0m4 -101h0m-802 167h0m607 -121h0m197 56h0m-40 13h0m-354 -270h0m-410 295h0m772 -104h0m37 -39h0m-542 158h0m620 -36h0m-109 -34h0m-84 -65h0m-406 114h0m545 -93h0m-820 -117h0m601 67h0m-361 50h0m448 -26h0m167 -98h0m-642 126h0m68 231h0m302 -221h0m197 32h0m31 -138h0m-108 66h0m-655 -120h0m108 286h0m528 -188h0m73 35h0m13 86h0m-257 -2h0m-294 -45h0m583 -55h0m-567 90h0m261 -109h0m-239 197h0m-83 -90h0m377 -41h0m-506 -158h0m835 230h0m-507 162h0m443 -261h0m-434 240h0m424 -262h0m67 124h0m-50 -89h0m-72 33h0m99 -134h0m-46 32h0m-371 288h0m207 -255h0m-604 -92h0m361 268h0m-217 -101h0m551 -69h0m76 51h0m-373 -345h0m-421 206h0m472 53h0m94 7h0m128 245h0m95 -167h0m-549 174h0m252 15h0m231 -272h0m-396 308h0m-289 -406h0m804 28h0m-142 7h0m-9 81h0m-623 264h0m448 -94h0m272 -159h0m71 -102h0m-340 250h0m-288 -93h0m-61 -22h0m-30 132h0m101 30h0m119 -319h0m401 221h0m44 -57h0m-201 49h0m18 -114h0m-592 -76h0m174 155h0m-155 -171h0m143 196h0m610 -54h0m-437 245h0m-332 -374h0m678 206h0m175 28h0m-289 25h0m-239 -217h0m445 94h0m-548 117h0m-90 -84h0m505 -109h0m-435 268h0m625 -106h0m-176 -22h0m96 -111h0m-239 213h0m-111 -216h0m-450 -53h0m858 335h0m-277 -266h0m190 83h0m30 -23h0m98 58h0m-41 -7h0m-50 -57h0m104 76h0m-19 72h0m-80 -231h0m-179 9h0m-423 69h0m434 -55h0m-410 214h0m439 -226h0m37 111h0m-645 -220h0m773 408h0m-672 -260h0m483 164h0m-406 -95h0m385 -90h0m-195 -306h0m79 285h0m-373 1h0m537 86h0m237 -139h0m-366 29h0m-275 206h0m-108 -138h0m561 79h0m-557 -75h0m27 11h0m42 40h0m676 40h0m-116 -166h0m-157 41h0m-382 129h0m568 -23h0m-279 -25h0m-133 80h0m382 -212h0m-174 195h0m67 -130h0m23 1h0m71 89h0m-579 -55h0m13 154h0m197 -61h0m89 -157h0m271 125h0m-500 43h0m-90 -76h0m589 -8h0m-728 -163h0m800 19h0m-583 322h0m93 40h0m425 -195h0m12 -21h0m-797 63h0m213 -179h0m29 260h0m-209 -292h0m794 120h0m-200 -43h0m-475 238h0m622 -128h0m-81 -47h0m-8 -40h0m102 -15h0m-690 -106h0m129 154h0m306 50h0m-543 52h0m285 -120h0m605 85h0m-662 -70h0m-133 -165h0m326 318h0m-155 -169h0m546 -119h0m-807 266h0m924 -29h0m-23 146h0m0 -171h0m-615 37h0m291 -198h0m75 -11h0m73 -26h0m-594 34h0m89 84h0m588 13h0m-518 93h0m-48 54h0m548 -144h0m-788 105h0m690 -156h0m8 33h0m-685 103h0m39 -248h0m629 308h0m199 -304h0m-82 96h0m-151 -6h0m180 -13h0m-184 3h0m-523 -120h0m615 50h0m-565 92h0m-173 158h0m883 -54h0m34 59h0m-94 -188h0m-99 122h0m-468 6h0m-258 20h0m720 -148h0m-700 -59h0m357 152h0m539 121h0m4 -43h0m-700 -109h0m135 243h0m370 -276h0m167 122h0m-463 34h0m-396 135h0m134 -152h0m659 -180h0m-40 136h0m-155 -88h0m208 9h0m-703 -148h0m310 109h0m-226 62h0m670 73h0m-889 60h0m826 -208h0m55 318h0m-93 -253h0m112 101h0m-93 -46h0m-727 -212h0m283 186h0m7 -81h0m433 105h0m-526 86h0m15 -28h0m632 19h0m-741 -139h0m59 6h0m313 69h0m283 -52h0m-133 -44h0m-317 -6h0m423 -18h0m-539 228h0m534 -231h0m-731 288h0m209 -123h0m411 -134h0m-631 -168h0m636 156h0m-434 228h0m621 -106h0m-800 -239h0m636 114h0m190 120h0m-71 -84h0m-449 -84h0m440 76h0m2 21h0m40 238h0m-588 -224h0m115 213h0m412 -214h0m-9 -68h0m-450 10h0m-195 -6h0m658 92h0m-121 -50h0m-68 45h0m129 -49h0m-321 234h0m344 -254h0m13 87h0m-363 126h0m166 -45h0m178 -70h0m-693 -236h0m619 87h0m126 -6h0m-272 108h0m328 -163h0m-61 111h0m-185 78h0m-405 -41h0m601 -94h0m-66 81h0m-761 92h0m57 46h0m716 56h0m-224 -207h0m-288 190h0m-219 -30h0m569 -123h0m-488 -96h0m476 83h0m-156 -66h0m-421 -61h0m168 109h0m615 -114h0m72 -11h0m-134 207h0m-511 -52h0m50 103h0m432 -69h0m-447 105h0m-267 -72h0m62 -224h0m313 81h0m132 53h0"/></g></svg><div class="a" style="left:1165px;top:24px;width:78px;height:129px;background:#fff"></div><div class="a" style="left:1186px;top:41.6px;width:8.5px;height:8.5px;background:#ff7f0e"></div><div class="a" style="left:1186px;top:59.2px;width:8.5px;height:8.5px;background:#1f77b4"></div><div class="a" style="left:1186px;top:76.9px;width:8.5px;height:8.5px;background:#2ca02c"></div><div class="a" style="left:1186px;top:94.5px;width:8.5px;height:8.5px;background:#d62728"></div><div class="a" style="left:1186px;top:112.2px;width:8.5px;height:8.5px;background:#8c564b"></div><div class="a" style="left:1186px;top:129.8px;width:8.5px;height:8.5px;background:#9467bd"></div><div class="t" style="left:1209.5px;top:38.2px;font-size:13px;color:#333;">5</div><div class="t" style="left:1209.5px;top:55.8px;font-size:13px;color:#333;">6</div><div class="t" style="left:1209.5px;top:73.5px;font-size:13px;color:#333;">7</div><div class="t" style="left:1209.5px;top:91.1px;font-size:13px;color:#333;">8</div><div class="t" style="left:1209.5px;top:108.8px;font-size:13px;color:#333;">9</div><div class="t" style="left:1209.5px;top:126.4px;font-size:13px;color:#333;">10</div><div class="a" style="left:1007px;top:641px;width:270px;height:19px;background:rgba(255,255,255,.5)"></div><div class="t" style="left:1012.0px;top:644.8px;font-size:12px;color:#333;">© Mapbox © OpenStreetMap</div><div class="t" style="left:1173.0px;top:644.8px;font-size:12px;color:#333;font-weight:bold;">Improve this map</div><svg class="a" style="left:7px;top:632px" width="88" height="24" viewBox="0 0 88 24"><circle cx="10.8" cy="11.5" r="9" fill="#fff" stroke="#5a8ea2" stroke-width="1.5"/><path d="M6 15.5v-4a4.7 4.7 0 114.7 4.7z" fill="#4f8aa0"/><path d="M10.7 8.3l.9 2.1 2.1.9-2.1.9-.9 2.1-.9-2.1-2.1-.9 2.1-.9z" fill="#fff"/><text x="21.5" y="17" font-family="Liberation Sans" font-weight="bold" font-size="16" fill="#fff" stroke="#5a8ea2" stroke-width="1.8" paint-order="stroke" stroke-linejoin="round" letter-spacing="-0.2">mapbox</text></svg></div>
<div class="a" style="left:999px;top:930px;width:36px;height:1px;background:#ddd"></div>
<div class="a" style="left:999px;top:934px;width:36px;height:1px;background:#ddd"></div>
<svg class="a" style="left:380px;top:956px" width="10" height="14" viewBox="0 0 10 14"><path d="M2 1.5l5.5 5.5L2 12.5" fill="none" stroke="#333" stroke-width="1.3"/></svg>
<div class="t" style="left:403.0px;top:956.3px;font-size:15px;color:#333;font-weight:bold;">Data</div>
</body></html>
